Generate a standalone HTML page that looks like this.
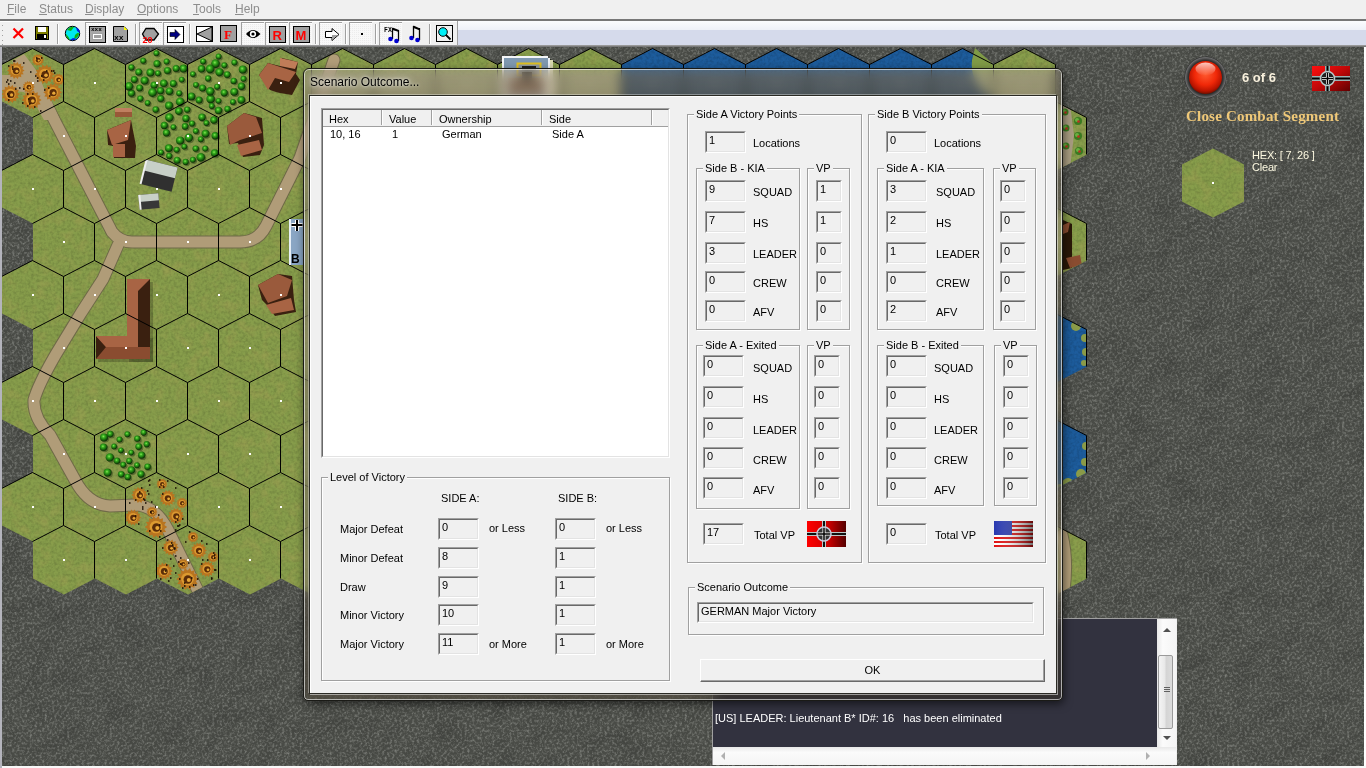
<!DOCTYPE html>
<html><head><meta charset="utf-8">
<style>
*{box-sizing:border-box}
html,body{margin:0;padding:0}
body{width:1366px;height:768px;overflow:hidden;position:relative;background:#4d4e4a;font-family:"Liberation Sans",sans-serif;font-size:11px;color:#000}
.abs{position:absolute}
#menubar{position:absolute;left:0;top:0;width:1366px;height:19px;background:#f0f0f0;color:#8d8d8d;font-size:12px}
#menubar span{position:absolute;top:2px}
#menubar u{text-decoration:underline;text-underline-offset:1px}
#tbline{position:absolute;left:0;top:19px;width:1366px;height:2px;background:#777}
#toolbar{position:absolute;left:0;top:21px;width:1366px;height:26px;background:#f0f0f0;border-top:1px solid #fff}
#rebar{position:absolute;left:458px;top:21px;width:908px;height:25px;background:linear-gradient(#fbfcfe 0,#eef1f8 9px,#d5daeb 9px,#d5daeb 100%)}
#tbbottom{position:absolute;left:0;top:45px;width:1366px;height:2px;background:linear-gradient(#a8a8a8,#6a6a6a)}
.sep{position:absolute;top:26px;width:2px;height:17px;border-left:1px solid #a0a0a0;border-right:1px solid #fff}
.pbtn{position:absolute;top:23px;height:22px;border:1px solid #fff;border-right-color:#e3e3e3;border-bottom-color:#e3e3e3;background:#f7f7f7}
.ic{position:absolute}
/* dialog */
#dlg{position:absolute;left:303px;top:68px;width:760px;height:633px;border-radius:6px 6px 5px 5px;border:1px solid #1a1a16;box-shadow:inset 0 0 0 1px rgba(255,255,255,.6),1px 3px 8px rgba(0,0,0,.55);background:linear-gradient(rgba(255,250,235,.12),rgba(200,195,175,.05) 30px,rgba(60,55,40,.15));backdrop-filter:blur(6px) saturate(0.5) sepia(0.45) brightness(0.9);-webkit-backdrop-filter:blur(6px) saturate(0.5) sepia(0.45) brightness(0.9);overflow:hidden}
#dlg .title{position:absolute;left:6px;top:6px;font-size:12px;color:#000;text-shadow:0 0 7px rgba(255,255,255,.9),0 0 3px rgba(255,255,255,.8)}
#client{position:absolute;left:309px;top:95px;width:748px;height:599px;background:#f0f0f0;border:1px solid #2a2a24;box-shadow:inset 1px 1px 0 #fff,1px 1px 0 rgba(255,255,255,.5),-1px -1px 0 rgba(255,255,255,.35)}
.grp{position:absolute;border:1px solid #a0a0a0;box-shadow:1px 1px 0 #fff, inset 1px 1px 0 #fff}
.grp>.lbl{position:absolute;left:6px;top:-8px;background:#f0f0f0;padding:0 2px;font-size:11px;line-height:14px;white-space:nowrap}
.ed{position:absolute;border:1px solid;border-color:#a0a0a0 #fff #fff #a0a0a0;background:#f0f0f0}
.ed::before{content:"";position:absolute;left:0;top:0;right:0;bottom:0;border:1px solid;border-color:#696969 #e3e3e3 #e3e3e3 #696969}
.ed span{position:absolute;left:3px;top:2px;font-size:11px;line-height:13px}
.t{position:absolute;font-size:11px;line-height:13px;white-space:nowrap}
#log{position:absolute;left:712px;top:618px;width:464px;height:148px;background:#f0f0f0;border-top:1px solid #c8c8c8}
</style></head><body>
<svg id="map" width="1366" height="721" viewBox="0 47 1366 721" style="position:absolute;left:0;top:47px;display:block">
<defs>
<filter id="tex" x="0" y="0" width="100%" height="100%" filterUnits="userSpaceOnUse"><feTurbulence type="fractalNoise" baseFrequency="0.35" numOctaves="2" seed="5"/><feColorMatrix type="matrix" values="0 0 0 0 0  0 0 0 0 0  0 0 0 0 0  1.2 0 0 0 -0.45"/><feComposite in2="SourceGraphic" operator="in"/></filter>
<filter id="tex2" x="0" y="47" width="1366" height="721" filterUnits="userSpaceOnUse"><feTurbulence type="fractalNoise" baseFrequency="0.4" numOctaves="3" seed="9"/><feColorMatrix type="matrix" values="0 0 0 0 0.85  0 0 0 0 0.87  0 0 0 0 0.82  2.2 0 0 0 -0.95"/><feComposite in2="SourceGraphic" operator="in"/></filter>
<filter id="tex4" x="-400" y="-300" width="2200" height="1400" filterUnits="userSpaceOnUse"><feTurbulence type="fractalNoise" baseFrequency="0.035 0.07" numOctaves="4" seed="4"/><feColorMatrix type="matrix" values="0 0 0 0 0  0 0 0 0 0  0 0 0 0 0  2.0 0 0 0 -0.85"/><feComposite in2="SourceGraphic" operator="in"/></filter>
<radialGradient id="crater"><stop offset="0" stop-color="#a06020"/><stop offset="0.25" stop-color="#3a1806"/><stop offset="0.45" stop-color="#b06a18"/><stop offset="0.7" stop-color="#e0a030"/><stop offset="0.88" stop-color="#c08028" stop-opacity="0.7"/><stop offset="1" stop-color="#a07028" stop-opacity="0"/></radialGradient>
<radialGradient id="tree" cx="0.42" cy="0.38" r="0.6"><stop offset="0" stop-color="#8ae858"/><stop offset="0.3" stop-color="#38b020"/><stop offset="0.7" stop-color="#1a6a0c"/><stop offset="1" stop-color="#0c2e06"/></radialGradient>
<clipPath id="mclip"><path d="M33.0,48.5 L64.0,64.5 L64.0,101.5 L33.0,117.5 L2.0,101.5 L2.0,64.5Z M95.0,48.5 L126.0,64.5 L126.0,101.5 L95.0,117.5 L64.0,101.5 L64.0,64.5Z M157.0,48.5 L188.0,64.5 L188.0,101.5 L157.0,117.5 L126.0,101.5 L126.0,64.5Z M219.0,48.5 L250.0,64.5 L250.0,101.5 L219.0,117.5 L188.0,101.5 L188.0,64.5Z M281.0,48.5 L312.0,64.5 L312.0,101.5 L281.0,117.5 L250.0,101.5 L250.0,64.5Z M343.0,48.5 L374.0,64.5 L374.0,101.5 L343.0,117.5 L312.0,101.5 L312.0,64.5Z M405.0,48.5 L436.0,64.5 L436.0,101.5 L405.0,117.5 L374.0,101.5 L374.0,64.5Z M467.0,48.5 L498.0,64.5 L498.0,101.5 L467.0,117.5 L436.0,101.5 L436.0,64.5Z M529.0,48.5 L560.0,64.5 L560.0,101.5 L529.0,117.5 L498.0,101.5 L498.0,64.5Z M591.0,48.5 L622.0,64.5 L622.0,101.5 L591.0,117.5 L560.0,101.5 L560.0,64.5Z M653.0,48.5 L684.0,64.5 L684.0,101.5 L653.0,117.5 L622.0,101.5 L622.0,64.5Z M715.0,48.5 L746.0,64.5 L746.0,101.5 L715.0,117.5 L684.0,101.5 L684.0,64.5Z M777.0,48.5 L808.0,64.5 L808.0,101.5 L777.0,117.5 L746.0,101.5 L746.0,64.5Z M839.0,48.5 L870.0,64.5 L870.0,101.5 L839.0,117.5 L808.0,101.5 L808.0,64.5Z M901.0,48.5 L932.0,64.5 L932.0,101.5 L901.0,117.5 L870.0,101.5 L870.0,64.5Z M963.0,48.5 L994.0,64.5 L994.0,101.5 L963.0,117.5 L932.0,101.5 L932.0,64.5Z M1025.0,48.5 L1056.0,64.5 L1056.0,101.5 L1025.0,117.5 L994.0,101.5 L994.0,64.5Z M64.0,101.5 L95.0,117.5 L95.0,154.5 L64.0,170.5 L33.0,154.5 L33.0,117.5Z M126.0,101.5 L157.0,117.5 L157.0,154.5 L126.0,170.5 L95.0,154.5 L95.0,117.5Z M188.0,101.5 L219.0,117.5 L219.0,154.5 L188.0,170.5 L157.0,154.5 L157.0,117.5Z M250.0,101.5 L281.0,117.5 L281.0,154.5 L250.0,170.5 L219.0,154.5 L219.0,117.5Z M312.0,101.5 L343.0,117.5 L343.0,154.5 L312.0,170.5 L281.0,154.5 L281.0,117.5Z M374.0,101.5 L405.0,117.5 L405.0,154.5 L374.0,170.5 L343.0,154.5 L343.0,117.5Z M436.0,101.5 L467.0,117.5 L467.0,154.5 L436.0,170.5 L405.0,154.5 L405.0,117.5Z M498.0,101.5 L529.0,117.5 L529.0,154.5 L498.0,170.5 L467.0,154.5 L467.0,117.5Z M560.0,101.5 L591.0,117.5 L591.0,154.5 L560.0,170.5 L529.0,154.5 L529.0,117.5Z M622.0,101.5 L653.0,117.5 L653.0,154.5 L622.0,170.5 L591.0,154.5 L591.0,117.5Z M684.0,101.5 L715.0,117.5 L715.0,154.5 L684.0,170.5 L653.0,154.5 L653.0,117.5Z M746.0,101.5 L777.0,117.5 L777.0,154.5 L746.0,170.5 L715.0,154.5 L715.0,117.5Z M808.0,101.5 L839.0,117.5 L839.0,154.5 L808.0,170.5 L777.0,154.5 L777.0,117.5Z M870.0,101.5 L901.0,117.5 L901.0,154.5 L870.0,170.5 L839.0,154.5 L839.0,117.5Z M932.0,101.5 L963.0,117.5 L963.0,154.5 L932.0,170.5 L901.0,154.5 L901.0,117.5Z M994.0,101.5 L1025.0,117.5 L1025.0,154.5 L994.0,170.5 L963.0,154.5 L963.0,117.5Z M1056.0,101.5 L1087.0,117.5 L1087.0,154.5 L1056.0,170.5 L1025.0,154.5 L1025.0,117.5Z M33.0,154.5 L64.0,170.5 L64.0,207.5 L33.0,223.5 L2.0,207.5 L2.0,170.5Z M95.0,154.5 L126.0,170.5 L126.0,207.5 L95.0,223.5 L64.0,207.5 L64.0,170.5Z M157.0,154.5 L188.0,170.5 L188.0,207.5 L157.0,223.5 L126.0,207.5 L126.0,170.5Z M219.0,154.5 L250.0,170.5 L250.0,207.5 L219.0,223.5 L188.0,207.5 L188.0,170.5Z M281.0,154.5 L312.0,170.5 L312.0,207.5 L281.0,223.5 L250.0,207.5 L250.0,170.5Z M343.0,154.5 L374.0,170.5 L374.0,207.5 L343.0,223.5 L312.0,207.5 L312.0,170.5Z M405.0,154.5 L436.0,170.5 L436.0,207.5 L405.0,223.5 L374.0,207.5 L374.0,170.5Z M467.0,154.5 L498.0,170.5 L498.0,207.5 L467.0,223.5 L436.0,207.5 L436.0,170.5Z M529.0,154.5 L560.0,170.5 L560.0,207.5 L529.0,223.5 L498.0,207.5 L498.0,170.5Z M591.0,154.5 L622.0,170.5 L622.0,207.5 L591.0,223.5 L560.0,207.5 L560.0,170.5Z M653.0,154.5 L684.0,170.5 L684.0,207.5 L653.0,223.5 L622.0,207.5 L622.0,170.5Z M715.0,154.5 L746.0,170.5 L746.0,207.5 L715.0,223.5 L684.0,207.5 L684.0,170.5Z M777.0,154.5 L808.0,170.5 L808.0,207.5 L777.0,223.5 L746.0,207.5 L746.0,170.5Z M839.0,154.5 L870.0,170.5 L870.0,207.5 L839.0,223.5 L808.0,207.5 L808.0,170.5Z M901.0,154.5 L932.0,170.5 L932.0,207.5 L901.0,223.5 L870.0,207.5 L870.0,170.5Z M963.0,154.5 L994.0,170.5 L994.0,207.5 L963.0,223.5 L932.0,207.5 L932.0,170.5Z M1025.0,154.5 L1056.0,170.5 L1056.0,207.5 L1025.0,223.5 L994.0,207.5 L994.0,170.5Z M64.0,207.5 L95.0,223.5 L95.0,260.5 L64.0,276.5 L33.0,260.5 L33.0,223.5Z M126.0,207.5 L157.0,223.5 L157.0,260.5 L126.0,276.5 L95.0,260.5 L95.0,223.5Z M188.0,207.5 L219.0,223.5 L219.0,260.5 L188.0,276.5 L157.0,260.5 L157.0,223.5Z M250.0,207.5 L281.0,223.5 L281.0,260.5 L250.0,276.5 L219.0,260.5 L219.0,223.5Z M312.0,207.5 L343.0,223.5 L343.0,260.5 L312.0,276.5 L281.0,260.5 L281.0,223.5Z M374.0,207.5 L405.0,223.5 L405.0,260.5 L374.0,276.5 L343.0,260.5 L343.0,223.5Z M436.0,207.5 L467.0,223.5 L467.0,260.5 L436.0,276.5 L405.0,260.5 L405.0,223.5Z M498.0,207.5 L529.0,223.5 L529.0,260.5 L498.0,276.5 L467.0,260.5 L467.0,223.5Z M560.0,207.5 L591.0,223.5 L591.0,260.5 L560.0,276.5 L529.0,260.5 L529.0,223.5Z M622.0,207.5 L653.0,223.5 L653.0,260.5 L622.0,276.5 L591.0,260.5 L591.0,223.5Z M684.0,207.5 L715.0,223.5 L715.0,260.5 L684.0,276.5 L653.0,260.5 L653.0,223.5Z M746.0,207.5 L777.0,223.5 L777.0,260.5 L746.0,276.5 L715.0,260.5 L715.0,223.5Z M808.0,207.5 L839.0,223.5 L839.0,260.5 L808.0,276.5 L777.0,260.5 L777.0,223.5Z M870.0,207.5 L901.0,223.5 L901.0,260.5 L870.0,276.5 L839.0,260.5 L839.0,223.5Z M932.0,207.5 L963.0,223.5 L963.0,260.5 L932.0,276.5 L901.0,260.5 L901.0,223.5Z M994.0,207.5 L1025.0,223.5 L1025.0,260.5 L994.0,276.5 L963.0,260.5 L963.0,223.5Z M1056.0,207.5 L1087.0,223.5 L1087.0,260.5 L1056.0,276.5 L1025.0,260.5 L1025.0,223.5Z M33.0,260.5 L64.0,276.5 L64.0,313.5 L33.0,329.5 L2.0,313.5 L2.0,276.5Z M95.0,260.5 L126.0,276.5 L126.0,313.5 L95.0,329.5 L64.0,313.5 L64.0,276.5Z M157.0,260.5 L188.0,276.5 L188.0,313.5 L157.0,329.5 L126.0,313.5 L126.0,276.5Z M219.0,260.5 L250.0,276.5 L250.0,313.5 L219.0,329.5 L188.0,313.5 L188.0,276.5Z M281.0,260.5 L312.0,276.5 L312.0,313.5 L281.0,329.5 L250.0,313.5 L250.0,276.5Z M343.0,260.5 L374.0,276.5 L374.0,313.5 L343.0,329.5 L312.0,313.5 L312.0,276.5Z M405.0,260.5 L436.0,276.5 L436.0,313.5 L405.0,329.5 L374.0,313.5 L374.0,276.5Z M467.0,260.5 L498.0,276.5 L498.0,313.5 L467.0,329.5 L436.0,313.5 L436.0,276.5Z M529.0,260.5 L560.0,276.5 L560.0,313.5 L529.0,329.5 L498.0,313.5 L498.0,276.5Z M591.0,260.5 L622.0,276.5 L622.0,313.5 L591.0,329.5 L560.0,313.5 L560.0,276.5Z M653.0,260.5 L684.0,276.5 L684.0,313.5 L653.0,329.5 L622.0,313.5 L622.0,276.5Z M715.0,260.5 L746.0,276.5 L746.0,313.5 L715.0,329.5 L684.0,313.5 L684.0,276.5Z M777.0,260.5 L808.0,276.5 L808.0,313.5 L777.0,329.5 L746.0,313.5 L746.0,276.5Z M839.0,260.5 L870.0,276.5 L870.0,313.5 L839.0,329.5 L808.0,313.5 L808.0,276.5Z M901.0,260.5 L932.0,276.5 L932.0,313.5 L901.0,329.5 L870.0,313.5 L870.0,276.5Z M963.0,260.5 L994.0,276.5 L994.0,313.5 L963.0,329.5 L932.0,313.5 L932.0,276.5Z M1025.0,260.5 L1056.0,276.5 L1056.0,313.5 L1025.0,329.5 L994.0,313.5 L994.0,276.5Z M64.0,313.5 L95.0,329.5 L95.0,366.5 L64.0,382.5 L33.0,366.5 L33.0,329.5Z M126.0,313.5 L157.0,329.5 L157.0,366.5 L126.0,382.5 L95.0,366.5 L95.0,329.5Z M188.0,313.5 L219.0,329.5 L219.0,366.5 L188.0,382.5 L157.0,366.5 L157.0,329.5Z M250.0,313.5 L281.0,329.5 L281.0,366.5 L250.0,382.5 L219.0,366.5 L219.0,329.5Z M312.0,313.5 L343.0,329.5 L343.0,366.5 L312.0,382.5 L281.0,366.5 L281.0,329.5Z M374.0,313.5 L405.0,329.5 L405.0,366.5 L374.0,382.5 L343.0,366.5 L343.0,329.5Z M436.0,313.5 L467.0,329.5 L467.0,366.5 L436.0,382.5 L405.0,366.5 L405.0,329.5Z M498.0,313.5 L529.0,329.5 L529.0,366.5 L498.0,382.5 L467.0,366.5 L467.0,329.5Z M560.0,313.5 L591.0,329.5 L591.0,366.5 L560.0,382.5 L529.0,366.5 L529.0,329.5Z M622.0,313.5 L653.0,329.5 L653.0,366.5 L622.0,382.5 L591.0,366.5 L591.0,329.5Z M684.0,313.5 L715.0,329.5 L715.0,366.5 L684.0,382.5 L653.0,366.5 L653.0,329.5Z M746.0,313.5 L777.0,329.5 L777.0,366.5 L746.0,382.5 L715.0,366.5 L715.0,329.5Z M808.0,313.5 L839.0,329.5 L839.0,366.5 L808.0,382.5 L777.0,366.5 L777.0,329.5Z M870.0,313.5 L901.0,329.5 L901.0,366.5 L870.0,382.5 L839.0,366.5 L839.0,329.5Z M932.0,313.5 L963.0,329.5 L963.0,366.5 L932.0,382.5 L901.0,366.5 L901.0,329.5Z M994.0,313.5 L1025.0,329.5 L1025.0,366.5 L994.0,382.5 L963.0,366.5 L963.0,329.5Z M1056.0,313.5 L1087.0,329.5 L1087.0,366.5 L1056.0,382.5 L1025.0,366.5 L1025.0,329.5Z M33.0,366.5 L64.0,382.5 L64.0,419.5 L33.0,435.5 L2.0,419.5 L2.0,382.5Z M95.0,366.5 L126.0,382.5 L126.0,419.5 L95.0,435.5 L64.0,419.5 L64.0,382.5Z M157.0,366.5 L188.0,382.5 L188.0,419.5 L157.0,435.5 L126.0,419.5 L126.0,382.5Z M219.0,366.5 L250.0,382.5 L250.0,419.5 L219.0,435.5 L188.0,419.5 L188.0,382.5Z M281.0,366.5 L312.0,382.5 L312.0,419.5 L281.0,435.5 L250.0,419.5 L250.0,382.5Z M343.0,366.5 L374.0,382.5 L374.0,419.5 L343.0,435.5 L312.0,419.5 L312.0,382.5Z M405.0,366.5 L436.0,382.5 L436.0,419.5 L405.0,435.5 L374.0,419.5 L374.0,382.5Z M467.0,366.5 L498.0,382.5 L498.0,419.5 L467.0,435.5 L436.0,419.5 L436.0,382.5Z M529.0,366.5 L560.0,382.5 L560.0,419.5 L529.0,435.5 L498.0,419.5 L498.0,382.5Z M591.0,366.5 L622.0,382.5 L622.0,419.5 L591.0,435.5 L560.0,419.5 L560.0,382.5Z M653.0,366.5 L684.0,382.5 L684.0,419.5 L653.0,435.5 L622.0,419.5 L622.0,382.5Z M715.0,366.5 L746.0,382.5 L746.0,419.5 L715.0,435.5 L684.0,419.5 L684.0,382.5Z M777.0,366.5 L808.0,382.5 L808.0,419.5 L777.0,435.5 L746.0,419.5 L746.0,382.5Z M839.0,366.5 L870.0,382.5 L870.0,419.5 L839.0,435.5 L808.0,419.5 L808.0,382.5Z M901.0,366.5 L932.0,382.5 L932.0,419.5 L901.0,435.5 L870.0,419.5 L870.0,382.5Z M963.0,366.5 L994.0,382.5 L994.0,419.5 L963.0,435.5 L932.0,419.5 L932.0,382.5Z M1025.0,366.5 L1056.0,382.5 L1056.0,419.5 L1025.0,435.5 L994.0,419.5 L994.0,382.5Z M64.0,419.5 L95.0,435.5 L95.0,472.5 L64.0,488.5 L33.0,472.5 L33.0,435.5Z M126.0,419.5 L157.0,435.5 L157.0,472.5 L126.0,488.5 L95.0,472.5 L95.0,435.5Z M188.0,419.5 L219.0,435.5 L219.0,472.5 L188.0,488.5 L157.0,472.5 L157.0,435.5Z M250.0,419.5 L281.0,435.5 L281.0,472.5 L250.0,488.5 L219.0,472.5 L219.0,435.5Z M312.0,419.5 L343.0,435.5 L343.0,472.5 L312.0,488.5 L281.0,472.5 L281.0,435.5Z M374.0,419.5 L405.0,435.5 L405.0,472.5 L374.0,488.5 L343.0,472.5 L343.0,435.5Z M436.0,419.5 L467.0,435.5 L467.0,472.5 L436.0,488.5 L405.0,472.5 L405.0,435.5Z M498.0,419.5 L529.0,435.5 L529.0,472.5 L498.0,488.5 L467.0,472.5 L467.0,435.5Z M560.0,419.5 L591.0,435.5 L591.0,472.5 L560.0,488.5 L529.0,472.5 L529.0,435.5Z M622.0,419.5 L653.0,435.5 L653.0,472.5 L622.0,488.5 L591.0,472.5 L591.0,435.5Z M684.0,419.5 L715.0,435.5 L715.0,472.5 L684.0,488.5 L653.0,472.5 L653.0,435.5Z M746.0,419.5 L777.0,435.5 L777.0,472.5 L746.0,488.5 L715.0,472.5 L715.0,435.5Z M808.0,419.5 L839.0,435.5 L839.0,472.5 L808.0,488.5 L777.0,472.5 L777.0,435.5Z M870.0,419.5 L901.0,435.5 L901.0,472.5 L870.0,488.5 L839.0,472.5 L839.0,435.5Z M932.0,419.5 L963.0,435.5 L963.0,472.5 L932.0,488.5 L901.0,472.5 L901.0,435.5Z M994.0,419.5 L1025.0,435.5 L1025.0,472.5 L994.0,488.5 L963.0,472.5 L963.0,435.5Z M1056.0,419.5 L1087.0,435.5 L1087.0,472.5 L1056.0,488.5 L1025.0,472.5 L1025.0,435.5Z M33.0,472.5 L64.0,488.5 L64.0,525.5 L33.0,541.5 L2.0,525.5 L2.0,488.5Z M95.0,472.5 L126.0,488.5 L126.0,525.5 L95.0,541.5 L64.0,525.5 L64.0,488.5Z M157.0,472.5 L188.0,488.5 L188.0,525.5 L157.0,541.5 L126.0,525.5 L126.0,488.5Z M219.0,472.5 L250.0,488.5 L250.0,525.5 L219.0,541.5 L188.0,525.5 L188.0,488.5Z M281.0,472.5 L312.0,488.5 L312.0,525.5 L281.0,541.5 L250.0,525.5 L250.0,488.5Z M343.0,472.5 L374.0,488.5 L374.0,525.5 L343.0,541.5 L312.0,525.5 L312.0,488.5Z M405.0,472.5 L436.0,488.5 L436.0,525.5 L405.0,541.5 L374.0,525.5 L374.0,488.5Z M467.0,472.5 L498.0,488.5 L498.0,525.5 L467.0,541.5 L436.0,525.5 L436.0,488.5Z M529.0,472.5 L560.0,488.5 L560.0,525.5 L529.0,541.5 L498.0,525.5 L498.0,488.5Z M591.0,472.5 L622.0,488.5 L622.0,525.5 L591.0,541.5 L560.0,525.5 L560.0,488.5Z M653.0,472.5 L684.0,488.5 L684.0,525.5 L653.0,541.5 L622.0,525.5 L622.0,488.5Z M715.0,472.5 L746.0,488.5 L746.0,525.5 L715.0,541.5 L684.0,525.5 L684.0,488.5Z M777.0,472.5 L808.0,488.5 L808.0,525.5 L777.0,541.5 L746.0,525.5 L746.0,488.5Z M839.0,472.5 L870.0,488.5 L870.0,525.5 L839.0,541.5 L808.0,525.5 L808.0,488.5Z M901.0,472.5 L932.0,488.5 L932.0,525.5 L901.0,541.5 L870.0,525.5 L870.0,488.5Z M963.0,472.5 L994.0,488.5 L994.0,525.5 L963.0,541.5 L932.0,525.5 L932.0,488.5Z M1025.0,472.5 L1056.0,488.5 L1056.0,525.5 L1025.0,541.5 L994.0,525.5 L994.0,488.5Z M64.0,525.5 L95.0,541.5 L95.0,578.5 L64.0,594.5 L33.0,578.5 L33.0,541.5Z M126.0,525.5 L157.0,541.5 L157.0,578.5 L126.0,594.5 L95.0,578.5 L95.0,541.5Z M188.0,525.5 L219.0,541.5 L219.0,578.5 L188.0,594.5 L157.0,578.5 L157.0,541.5Z M250.0,525.5 L281.0,541.5 L281.0,578.5 L250.0,594.5 L219.0,578.5 L219.0,541.5Z M312.0,525.5 L343.0,541.5 L343.0,578.5 L312.0,594.5 L281.0,578.5 L281.0,541.5Z M374.0,525.5 L405.0,541.5 L405.0,578.5 L374.0,594.5 L343.0,578.5 L343.0,541.5Z M436.0,525.5 L467.0,541.5 L467.0,578.5 L436.0,594.5 L405.0,578.5 L405.0,541.5Z M498.0,525.5 L529.0,541.5 L529.0,578.5 L498.0,594.5 L467.0,578.5 L467.0,541.5Z M560.0,525.5 L591.0,541.5 L591.0,578.5 L560.0,594.5 L529.0,578.5 L529.0,541.5Z M622.0,525.5 L653.0,541.5 L653.0,578.5 L622.0,594.5 L591.0,578.5 L591.0,541.5Z M684.0,525.5 L715.0,541.5 L715.0,578.5 L684.0,594.5 L653.0,578.5 L653.0,541.5Z M746.0,525.5 L777.0,541.5 L777.0,578.5 L746.0,594.5 L715.0,578.5 L715.0,541.5Z M808.0,525.5 L839.0,541.5 L839.0,578.5 L808.0,594.5 L777.0,578.5 L777.0,541.5Z M870.0,525.5 L901.0,541.5 L901.0,578.5 L870.0,594.5 L839.0,578.5 L839.0,541.5Z M932.0,525.5 L963.0,541.5 L963.0,578.5 L932.0,594.5 L901.0,578.5 L901.0,541.5Z M994.0,525.5 L1025.0,541.5 L1025.0,578.5 L994.0,594.5 L963.0,578.5 L963.0,541.5Z M1056.0,525.5 L1087.0,541.5 L1087.0,578.5 L1056.0,594.5 L1025.0,578.5 L1025.0,541.5Z"/></clipPath>
<filter id="tex3" x="0" y="0" width="1366" height="768" filterUnits="userSpaceOnUse"><feTurbulence type="fractalNoise" baseFrequency="0.08" numOctaves="3" seed="21"/><feColorMatrix type="matrix" values="0 0 0 0 0.45  0 0 0 0 0.35  0 0 0 0 0.1  2.2 0 0 0 -1.0"/><feComposite in2="SourceGraphic" operator="in"/></filter>
</defs>
<rect x="0" y="47" width="1366" height="721" fill="#4a4c47"/>
<rect x="0" y="47" width="1366" height="721" fill="#fff" filter="url(#tex2)" opacity="0.32"/>
<g transform="rotate(-35 683 400)"><rect x="-400" y="-300" width="2200" height="1400" fill="#000" filter="url(#tex4)" opacity="0.12"/></g>
<path d="M33.0,48.5 L64.0,64.5 L64.0,101.5 L33.0,117.5 L2.0,101.5 L2.0,64.5Z M95.0,48.5 L126.0,64.5 L126.0,101.5 L95.0,117.5 L64.0,101.5 L64.0,64.5Z M157.0,48.5 L188.0,64.5 L188.0,101.5 L157.0,117.5 L126.0,101.5 L126.0,64.5Z M219.0,48.5 L250.0,64.5 L250.0,101.5 L219.0,117.5 L188.0,101.5 L188.0,64.5Z M281.0,48.5 L312.0,64.5 L312.0,101.5 L281.0,117.5 L250.0,101.5 L250.0,64.5Z M343.0,48.5 L374.0,64.5 L374.0,101.5 L343.0,117.5 L312.0,101.5 L312.0,64.5Z M405.0,48.5 L436.0,64.5 L436.0,101.5 L405.0,117.5 L374.0,101.5 L374.0,64.5Z M467.0,48.5 L498.0,64.5 L498.0,101.5 L467.0,117.5 L436.0,101.5 L436.0,64.5Z M529.0,48.5 L560.0,64.5 L560.0,101.5 L529.0,117.5 L498.0,101.5 L498.0,64.5Z M591.0,48.5 L622.0,64.5 L622.0,101.5 L591.0,117.5 L560.0,101.5 L560.0,64.5Z M1025.0,48.5 L1056.0,64.5 L1056.0,101.5 L1025.0,117.5 L994.0,101.5 L994.0,64.5Z M64.0,101.5 L95.0,117.5 L95.0,154.5 L64.0,170.5 L33.0,154.5 L33.0,117.5Z M126.0,101.5 L157.0,117.5 L157.0,154.5 L126.0,170.5 L95.0,154.5 L95.0,117.5Z M188.0,101.5 L219.0,117.5 L219.0,154.5 L188.0,170.5 L157.0,154.5 L157.0,117.5Z M250.0,101.5 L281.0,117.5 L281.0,154.5 L250.0,170.5 L219.0,154.5 L219.0,117.5Z M312.0,101.5 L343.0,117.5 L343.0,154.5 L312.0,170.5 L281.0,154.5 L281.0,117.5Z M374.0,101.5 L405.0,117.5 L405.0,154.5 L374.0,170.5 L343.0,154.5 L343.0,117.5Z M436.0,101.5 L467.0,117.5 L467.0,154.5 L436.0,170.5 L405.0,154.5 L405.0,117.5Z M498.0,101.5 L529.0,117.5 L529.0,154.5 L498.0,170.5 L467.0,154.5 L467.0,117.5Z M560.0,101.5 L591.0,117.5 L591.0,154.5 L560.0,170.5 L529.0,154.5 L529.0,117.5Z M622.0,101.5 L653.0,117.5 L653.0,154.5 L622.0,170.5 L591.0,154.5 L591.0,117.5Z M684.0,101.5 L715.0,117.5 L715.0,154.5 L684.0,170.5 L653.0,154.5 L653.0,117.5Z M746.0,101.5 L777.0,117.5 L777.0,154.5 L746.0,170.5 L715.0,154.5 L715.0,117.5Z M808.0,101.5 L839.0,117.5 L839.0,154.5 L808.0,170.5 L777.0,154.5 L777.0,117.5Z M870.0,101.5 L901.0,117.5 L901.0,154.5 L870.0,170.5 L839.0,154.5 L839.0,117.5Z M932.0,101.5 L963.0,117.5 L963.0,154.5 L932.0,170.5 L901.0,154.5 L901.0,117.5Z M994.0,101.5 L1025.0,117.5 L1025.0,154.5 L994.0,170.5 L963.0,154.5 L963.0,117.5Z M1056.0,101.5 L1087.0,117.5 L1087.0,154.5 L1056.0,170.5 L1025.0,154.5 L1025.0,117.5Z M33.0,154.5 L64.0,170.5 L64.0,207.5 L33.0,223.5 L2.0,207.5 L2.0,170.5Z M95.0,154.5 L126.0,170.5 L126.0,207.5 L95.0,223.5 L64.0,207.5 L64.0,170.5Z M157.0,154.5 L188.0,170.5 L188.0,207.5 L157.0,223.5 L126.0,207.5 L126.0,170.5Z M219.0,154.5 L250.0,170.5 L250.0,207.5 L219.0,223.5 L188.0,207.5 L188.0,170.5Z M281.0,154.5 L312.0,170.5 L312.0,207.5 L281.0,223.5 L250.0,207.5 L250.0,170.5Z M343.0,154.5 L374.0,170.5 L374.0,207.5 L343.0,223.5 L312.0,207.5 L312.0,170.5Z M405.0,154.5 L436.0,170.5 L436.0,207.5 L405.0,223.5 L374.0,207.5 L374.0,170.5Z M467.0,154.5 L498.0,170.5 L498.0,207.5 L467.0,223.5 L436.0,207.5 L436.0,170.5Z M529.0,154.5 L560.0,170.5 L560.0,207.5 L529.0,223.5 L498.0,207.5 L498.0,170.5Z M591.0,154.5 L622.0,170.5 L622.0,207.5 L591.0,223.5 L560.0,207.5 L560.0,170.5Z M653.0,154.5 L684.0,170.5 L684.0,207.5 L653.0,223.5 L622.0,207.5 L622.0,170.5Z M715.0,154.5 L746.0,170.5 L746.0,207.5 L715.0,223.5 L684.0,207.5 L684.0,170.5Z M777.0,154.5 L808.0,170.5 L808.0,207.5 L777.0,223.5 L746.0,207.5 L746.0,170.5Z M839.0,154.5 L870.0,170.5 L870.0,207.5 L839.0,223.5 L808.0,207.5 L808.0,170.5Z M901.0,154.5 L932.0,170.5 L932.0,207.5 L901.0,223.5 L870.0,207.5 L870.0,170.5Z M963.0,154.5 L994.0,170.5 L994.0,207.5 L963.0,223.5 L932.0,207.5 L932.0,170.5Z M1025.0,154.5 L1056.0,170.5 L1056.0,207.5 L1025.0,223.5 L994.0,207.5 L994.0,170.5Z M64.0,207.5 L95.0,223.5 L95.0,260.5 L64.0,276.5 L33.0,260.5 L33.0,223.5Z M126.0,207.5 L157.0,223.5 L157.0,260.5 L126.0,276.5 L95.0,260.5 L95.0,223.5Z M188.0,207.5 L219.0,223.5 L219.0,260.5 L188.0,276.5 L157.0,260.5 L157.0,223.5Z M250.0,207.5 L281.0,223.5 L281.0,260.5 L250.0,276.5 L219.0,260.5 L219.0,223.5Z M312.0,207.5 L343.0,223.5 L343.0,260.5 L312.0,276.5 L281.0,260.5 L281.0,223.5Z M374.0,207.5 L405.0,223.5 L405.0,260.5 L374.0,276.5 L343.0,260.5 L343.0,223.5Z M436.0,207.5 L467.0,223.5 L467.0,260.5 L436.0,276.5 L405.0,260.5 L405.0,223.5Z M498.0,207.5 L529.0,223.5 L529.0,260.5 L498.0,276.5 L467.0,260.5 L467.0,223.5Z M560.0,207.5 L591.0,223.5 L591.0,260.5 L560.0,276.5 L529.0,260.5 L529.0,223.5Z M622.0,207.5 L653.0,223.5 L653.0,260.5 L622.0,276.5 L591.0,260.5 L591.0,223.5Z M684.0,207.5 L715.0,223.5 L715.0,260.5 L684.0,276.5 L653.0,260.5 L653.0,223.5Z M746.0,207.5 L777.0,223.5 L777.0,260.5 L746.0,276.5 L715.0,260.5 L715.0,223.5Z M808.0,207.5 L839.0,223.5 L839.0,260.5 L808.0,276.5 L777.0,260.5 L777.0,223.5Z M870.0,207.5 L901.0,223.5 L901.0,260.5 L870.0,276.5 L839.0,260.5 L839.0,223.5Z M932.0,207.5 L963.0,223.5 L963.0,260.5 L932.0,276.5 L901.0,260.5 L901.0,223.5Z M994.0,207.5 L1025.0,223.5 L1025.0,260.5 L994.0,276.5 L963.0,260.5 L963.0,223.5Z M1056.0,207.5 L1087.0,223.5 L1087.0,260.5 L1056.0,276.5 L1025.0,260.5 L1025.0,223.5Z M33.0,260.5 L64.0,276.5 L64.0,313.5 L33.0,329.5 L2.0,313.5 L2.0,276.5Z M95.0,260.5 L126.0,276.5 L126.0,313.5 L95.0,329.5 L64.0,313.5 L64.0,276.5Z M157.0,260.5 L188.0,276.5 L188.0,313.5 L157.0,329.5 L126.0,313.5 L126.0,276.5Z M219.0,260.5 L250.0,276.5 L250.0,313.5 L219.0,329.5 L188.0,313.5 L188.0,276.5Z M281.0,260.5 L312.0,276.5 L312.0,313.5 L281.0,329.5 L250.0,313.5 L250.0,276.5Z M343.0,260.5 L374.0,276.5 L374.0,313.5 L343.0,329.5 L312.0,313.5 L312.0,276.5Z M405.0,260.5 L436.0,276.5 L436.0,313.5 L405.0,329.5 L374.0,313.5 L374.0,276.5Z M467.0,260.5 L498.0,276.5 L498.0,313.5 L467.0,329.5 L436.0,313.5 L436.0,276.5Z M529.0,260.5 L560.0,276.5 L560.0,313.5 L529.0,329.5 L498.0,313.5 L498.0,276.5Z M591.0,260.5 L622.0,276.5 L622.0,313.5 L591.0,329.5 L560.0,313.5 L560.0,276.5Z M653.0,260.5 L684.0,276.5 L684.0,313.5 L653.0,329.5 L622.0,313.5 L622.0,276.5Z M715.0,260.5 L746.0,276.5 L746.0,313.5 L715.0,329.5 L684.0,313.5 L684.0,276.5Z M777.0,260.5 L808.0,276.5 L808.0,313.5 L777.0,329.5 L746.0,313.5 L746.0,276.5Z M839.0,260.5 L870.0,276.5 L870.0,313.5 L839.0,329.5 L808.0,313.5 L808.0,276.5Z M901.0,260.5 L932.0,276.5 L932.0,313.5 L901.0,329.5 L870.0,313.5 L870.0,276.5Z M963.0,260.5 L994.0,276.5 L994.0,313.5 L963.0,329.5 L932.0,313.5 L932.0,276.5Z M1025.0,260.5 L1056.0,276.5 L1056.0,313.5 L1025.0,329.5 L994.0,313.5 L994.0,276.5Z M64.0,313.5 L95.0,329.5 L95.0,366.5 L64.0,382.5 L33.0,366.5 L33.0,329.5Z M126.0,313.5 L157.0,329.5 L157.0,366.5 L126.0,382.5 L95.0,366.5 L95.0,329.5Z M188.0,313.5 L219.0,329.5 L219.0,366.5 L188.0,382.5 L157.0,366.5 L157.0,329.5Z M250.0,313.5 L281.0,329.5 L281.0,366.5 L250.0,382.5 L219.0,366.5 L219.0,329.5Z M312.0,313.5 L343.0,329.5 L343.0,366.5 L312.0,382.5 L281.0,366.5 L281.0,329.5Z M374.0,313.5 L405.0,329.5 L405.0,366.5 L374.0,382.5 L343.0,366.5 L343.0,329.5Z M436.0,313.5 L467.0,329.5 L467.0,366.5 L436.0,382.5 L405.0,366.5 L405.0,329.5Z M498.0,313.5 L529.0,329.5 L529.0,366.5 L498.0,382.5 L467.0,366.5 L467.0,329.5Z M560.0,313.5 L591.0,329.5 L591.0,366.5 L560.0,382.5 L529.0,366.5 L529.0,329.5Z M622.0,313.5 L653.0,329.5 L653.0,366.5 L622.0,382.5 L591.0,366.5 L591.0,329.5Z M684.0,313.5 L715.0,329.5 L715.0,366.5 L684.0,382.5 L653.0,366.5 L653.0,329.5Z M746.0,313.5 L777.0,329.5 L777.0,366.5 L746.0,382.5 L715.0,366.5 L715.0,329.5Z M808.0,313.5 L839.0,329.5 L839.0,366.5 L808.0,382.5 L777.0,366.5 L777.0,329.5Z M870.0,313.5 L901.0,329.5 L901.0,366.5 L870.0,382.5 L839.0,366.5 L839.0,329.5Z M932.0,313.5 L963.0,329.5 L963.0,366.5 L932.0,382.5 L901.0,366.5 L901.0,329.5Z M994.0,313.5 L1025.0,329.5 L1025.0,366.5 L994.0,382.5 L963.0,366.5 L963.0,329.5Z M33.0,366.5 L64.0,382.5 L64.0,419.5 L33.0,435.5 L2.0,419.5 L2.0,382.5Z M95.0,366.5 L126.0,382.5 L126.0,419.5 L95.0,435.5 L64.0,419.5 L64.0,382.5Z M157.0,366.5 L188.0,382.5 L188.0,419.5 L157.0,435.5 L126.0,419.5 L126.0,382.5Z M219.0,366.5 L250.0,382.5 L250.0,419.5 L219.0,435.5 L188.0,419.5 L188.0,382.5Z M281.0,366.5 L312.0,382.5 L312.0,419.5 L281.0,435.5 L250.0,419.5 L250.0,382.5Z M343.0,366.5 L374.0,382.5 L374.0,419.5 L343.0,435.5 L312.0,419.5 L312.0,382.5Z M405.0,366.5 L436.0,382.5 L436.0,419.5 L405.0,435.5 L374.0,419.5 L374.0,382.5Z M467.0,366.5 L498.0,382.5 L498.0,419.5 L467.0,435.5 L436.0,419.5 L436.0,382.5Z M529.0,366.5 L560.0,382.5 L560.0,419.5 L529.0,435.5 L498.0,419.5 L498.0,382.5Z M591.0,366.5 L622.0,382.5 L622.0,419.5 L591.0,435.5 L560.0,419.5 L560.0,382.5Z M653.0,366.5 L684.0,382.5 L684.0,419.5 L653.0,435.5 L622.0,419.5 L622.0,382.5Z M715.0,366.5 L746.0,382.5 L746.0,419.5 L715.0,435.5 L684.0,419.5 L684.0,382.5Z M777.0,366.5 L808.0,382.5 L808.0,419.5 L777.0,435.5 L746.0,419.5 L746.0,382.5Z M839.0,366.5 L870.0,382.5 L870.0,419.5 L839.0,435.5 L808.0,419.5 L808.0,382.5Z M901.0,366.5 L932.0,382.5 L932.0,419.5 L901.0,435.5 L870.0,419.5 L870.0,382.5Z M963.0,366.5 L994.0,382.5 L994.0,419.5 L963.0,435.5 L932.0,419.5 L932.0,382.5Z M1025.0,366.5 L1056.0,382.5 L1056.0,419.5 L1025.0,435.5 L994.0,419.5 L994.0,382.5Z M64.0,419.5 L95.0,435.5 L95.0,472.5 L64.0,488.5 L33.0,472.5 L33.0,435.5Z M126.0,419.5 L157.0,435.5 L157.0,472.5 L126.0,488.5 L95.0,472.5 L95.0,435.5Z M188.0,419.5 L219.0,435.5 L219.0,472.5 L188.0,488.5 L157.0,472.5 L157.0,435.5Z M250.0,419.5 L281.0,435.5 L281.0,472.5 L250.0,488.5 L219.0,472.5 L219.0,435.5Z M312.0,419.5 L343.0,435.5 L343.0,472.5 L312.0,488.5 L281.0,472.5 L281.0,435.5Z M374.0,419.5 L405.0,435.5 L405.0,472.5 L374.0,488.5 L343.0,472.5 L343.0,435.5Z M436.0,419.5 L467.0,435.5 L467.0,472.5 L436.0,488.5 L405.0,472.5 L405.0,435.5Z M498.0,419.5 L529.0,435.5 L529.0,472.5 L498.0,488.5 L467.0,472.5 L467.0,435.5Z M560.0,419.5 L591.0,435.5 L591.0,472.5 L560.0,488.5 L529.0,472.5 L529.0,435.5Z M622.0,419.5 L653.0,435.5 L653.0,472.5 L622.0,488.5 L591.0,472.5 L591.0,435.5Z M684.0,419.5 L715.0,435.5 L715.0,472.5 L684.0,488.5 L653.0,472.5 L653.0,435.5Z M746.0,419.5 L777.0,435.5 L777.0,472.5 L746.0,488.5 L715.0,472.5 L715.0,435.5Z M808.0,419.5 L839.0,435.5 L839.0,472.5 L808.0,488.5 L777.0,472.5 L777.0,435.5Z M870.0,419.5 L901.0,435.5 L901.0,472.5 L870.0,488.5 L839.0,472.5 L839.0,435.5Z M932.0,419.5 L963.0,435.5 L963.0,472.5 L932.0,488.5 L901.0,472.5 L901.0,435.5Z M994.0,419.5 L1025.0,435.5 L1025.0,472.5 L994.0,488.5 L963.0,472.5 L963.0,435.5Z M33.0,472.5 L64.0,488.5 L64.0,525.5 L33.0,541.5 L2.0,525.5 L2.0,488.5Z M95.0,472.5 L126.0,488.5 L126.0,525.5 L95.0,541.5 L64.0,525.5 L64.0,488.5Z M157.0,472.5 L188.0,488.5 L188.0,525.5 L157.0,541.5 L126.0,525.5 L126.0,488.5Z M219.0,472.5 L250.0,488.5 L250.0,525.5 L219.0,541.5 L188.0,525.5 L188.0,488.5Z M281.0,472.5 L312.0,488.5 L312.0,525.5 L281.0,541.5 L250.0,525.5 L250.0,488.5Z M343.0,472.5 L374.0,488.5 L374.0,525.5 L343.0,541.5 L312.0,525.5 L312.0,488.5Z M405.0,472.5 L436.0,488.5 L436.0,525.5 L405.0,541.5 L374.0,525.5 L374.0,488.5Z M467.0,472.5 L498.0,488.5 L498.0,525.5 L467.0,541.5 L436.0,525.5 L436.0,488.5Z M529.0,472.5 L560.0,488.5 L560.0,525.5 L529.0,541.5 L498.0,525.5 L498.0,488.5Z M591.0,472.5 L622.0,488.5 L622.0,525.5 L591.0,541.5 L560.0,525.5 L560.0,488.5Z M653.0,472.5 L684.0,488.5 L684.0,525.5 L653.0,541.5 L622.0,525.5 L622.0,488.5Z M715.0,472.5 L746.0,488.5 L746.0,525.5 L715.0,541.5 L684.0,525.5 L684.0,488.5Z M777.0,472.5 L808.0,488.5 L808.0,525.5 L777.0,541.5 L746.0,525.5 L746.0,488.5Z M839.0,472.5 L870.0,488.5 L870.0,525.5 L839.0,541.5 L808.0,525.5 L808.0,488.5Z M901.0,472.5 L932.0,488.5 L932.0,525.5 L901.0,541.5 L870.0,525.5 L870.0,488.5Z M963.0,472.5 L994.0,488.5 L994.0,525.5 L963.0,541.5 L932.0,525.5 L932.0,488.5Z M1025.0,472.5 L1056.0,488.5 L1056.0,525.5 L1025.0,541.5 L994.0,525.5 L994.0,488.5Z M64.0,525.5 L95.0,541.5 L95.0,578.5 L64.0,594.5 L33.0,578.5 L33.0,541.5Z M126.0,525.5 L157.0,541.5 L157.0,578.5 L126.0,594.5 L95.0,578.5 L95.0,541.5Z M188.0,525.5 L219.0,541.5 L219.0,578.5 L188.0,594.5 L157.0,578.5 L157.0,541.5Z M250.0,525.5 L281.0,541.5 L281.0,578.5 L250.0,594.5 L219.0,578.5 L219.0,541.5Z M312.0,525.5 L343.0,541.5 L343.0,578.5 L312.0,594.5 L281.0,578.5 L281.0,541.5Z M374.0,525.5 L405.0,541.5 L405.0,578.5 L374.0,594.5 L343.0,578.5 L343.0,541.5Z M436.0,525.5 L467.0,541.5 L467.0,578.5 L436.0,594.5 L405.0,578.5 L405.0,541.5Z M498.0,525.5 L529.0,541.5 L529.0,578.5 L498.0,594.5 L467.0,578.5 L467.0,541.5Z M560.0,525.5 L591.0,541.5 L591.0,578.5 L560.0,594.5 L529.0,578.5 L529.0,541.5Z M622.0,525.5 L653.0,541.5 L653.0,578.5 L622.0,594.5 L591.0,578.5 L591.0,541.5Z M684.0,525.5 L715.0,541.5 L715.0,578.5 L684.0,594.5 L653.0,578.5 L653.0,541.5Z M746.0,525.5 L777.0,541.5 L777.0,578.5 L746.0,594.5 L715.0,578.5 L715.0,541.5Z M808.0,525.5 L839.0,541.5 L839.0,578.5 L808.0,594.5 L777.0,578.5 L777.0,541.5Z M870.0,525.5 L901.0,541.5 L901.0,578.5 L870.0,594.5 L839.0,578.5 L839.0,541.5Z M932.0,525.5 L963.0,541.5 L963.0,578.5 L932.0,594.5 L901.0,578.5 L901.0,541.5Z M994.0,525.5 L1025.0,541.5 L1025.0,578.5 L994.0,594.5 L963.0,578.5 L963.0,541.5Z M1056.0,525.5 L1087.0,541.5 L1087.0,578.5 L1056.0,594.5 L1025.0,578.5 L1025.0,541.5Z M1213.0,148.5 L1244.0,164.5 L1244.0,201.5 L1213.0,217.5 L1182.0,201.5 L1182.0,164.5Z" fill="#879d4b"/>
<path d="M653.0,48.5 L684.0,64.5 L684.0,101.5 L653.0,117.5 L622.0,101.5 L622.0,64.5Z M715.0,48.5 L746.0,64.5 L746.0,101.5 L715.0,117.5 L684.0,101.5 L684.0,64.5Z M777.0,48.5 L808.0,64.5 L808.0,101.5 L777.0,117.5 L746.0,101.5 L746.0,64.5Z M839.0,48.5 L870.0,64.5 L870.0,101.5 L839.0,117.5 L808.0,101.5 L808.0,64.5Z M901.0,48.5 L932.0,64.5 L932.0,101.5 L901.0,117.5 L870.0,101.5 L870.0,64.5Z M963.0,48.5 L994.0,64.5 L994.0,101.5 L963.0,117.5 L932.0,101.5 L932.0,64.5Z M1056.0,313.5 L1087.0,329.5 L1087.0,366.5 L1056.0,382.5 L1025.0,366.5 L1025.0,329.5Z M1056.0,419.5 L1087.0,435.5 L1087.0,472.5 L1056.0,488.5 L1025.0,472.5 L1025.0,435.5Z" fill="#1d5c9c"/>
<path d="M33.0,48.5 L64.0,64.5 L64.0,101.5 L33.0,117.5 L2.0,101.5 L2.0,64.5Z M95.0,48.5 L126.0,64.5 L126.0,101.5 L95.0,117.5 L64.0,101.5 L64.0,64.5Z M157.0,48.5 L188.0,64.5 L188.0,101.5 L157.0,117.5 L126.0,101.5 L126.0,64.5Z M219.0,48.5 L250.0,64.5 L250.0,101.5 L219.0,117.5 L188.0,101.5 L188.0,64.5Z M281.0,48.5 L312.0,64.5 L312.0,101.5 L281.0,117.5 L250.0,101.5 L250.0,64.5Z M343.0,48.5 L374.0,64.5 L374.0,101.5 L343.0,117.5 L312.0,101.5 L312.0,64.5Z M405.0,48.5 L436.0,64.5 L436.0,101.5 L405.0,117.5 L374.0,101.5 L374.0,64.5Z M467.0,48.5 L498.0,64.5 L498.0,101.5 L467.0,117.5 L436.0,101.5 L436.0,64.5Z M529.0,48.5 L560.0,64.5 L560.0,101.5 L529.0,117.5 L498.0,101.5 L498.0,64.5Z M591.0,48.5 L622.0,64.5 L622.0,101.5 L591.0,117.5 L560.0,101.5 L560.0,64.5Z M1025.0,48.5 L1056.0,64.5 L1056.0,101.5 L1025.0,117.5 L994.0,101.5 L994.0,64.5Z M64.0,101.5 L95.0,117.5 L95.0,154.5 L64.0,170.5 L33.0,154.5 L33.0,117.5Z M126.0,101.5 L157.0,117.5 L157.0,154.5 L126.0,170.5 L95.0,154.5 L95.0,117.5Z M188.0,101.5 L219.0,117.5 L219.0,154.5 L188.0,170.5 L157.0,154.5 L157.0,117.5Z M250.0,101.5 L281.0,117.5 L281.0,154.5 L250.0,170.5 L219.0,154.5 L219.0,117.5Z M312.0,101.5 L343.0,117.5 L343.0,154.5 L312.0,170.5 L281.0,154.5 L281.0,117.5Z M374.0,101.5 L405.0,117.5 L405.0,154.5 L374.0,170.5 L343.0,154.5 L343.0,117.5Z M436.0,101.5 L467.0,117.5 L467.0,154.5 L436.0,170.5 L405.0,154.5 L405.0,117.5Z M498.0,101.5 L529.0,117.5 L529.0,154.5 L498.0,170.5 L467.0,154.5 L467.0,117.5Z M560.0,101.5 L591.0,117.5 L591.0,154.5 L560.0,170.5 L529.0,154.5 L529.0,117.5Z M622.0,101.5 L653.0,117.5 L653.0,154.5 L622.0,170.5 L591.0,154.5 L591.0,117.5Z M684.0,101.5 L715.0,117.5 L715.0,154.5 L684.0,170.5 L653.0,154.5 L653.0,117.5Z M746.0,101.5 L777.0,117.5 L777.0,154.5 L746.0,170.5 L715.0,154.5 L715.0,117.5Z M808.0,101.5 L839.0,117.5 L839.0,154.5 L808.0,170.5 L777.0,154.5 L777.0,117.5Z M870.0,101.5 L901.0,117.5 L901.0,154.5 L870.0,170.5 L839.0,154.5 L839.0,117.5Z M932.0,101.5 L963.0,117.5 L963.0,154.5 L932.0,170.5 L901.0,154.5 L901.0,117.5Z M994.0,101.5 L1025.0,117.5 L1025.0,154.5 L994.0,170.5 L963.0,154.5 L963.0,117.5Z M1056.0,101.5 L1087.0,117.5 L1087.0,154.5 L1056.0,170.5 L1025.0,154.5 L1025.0,117.5Z M33.0,154.5 L64.0,170.5 L64.0,207.5 L33.0,223.5 L2.0,207.5 L2.0,170.5Z M95.0,154.5 L126.0,170.5 L126.0,207.5 L95.0,223.5 L64.0,207.5 L64.0,170.5Z M157.0,154.5 L188.0,170.5 L188.0,207.5 L157.0,223.5 L126.0,207.5 L126.0,170.5Z M219.0,154.5 L250.0,170.5 L250.0,207.5 L219.0,223.5 L188.0,207.5 L188.0,170.5Z M281.0,154.5 L312.0,170.5 L312.0,207.5 L281.0,223.5 L250.0,207.5 L250.0,170.5Z M343.0,154.5 L374.0,170.5 L374.0,207.5 L343.0,223.5 L312.0,207.5 L312.0,170.5Z M405.0,154.5 L436.0,170.5 L436.0,207.5 L405.0,223.5 L374.0,207.5 L374.0,170.5Z M467.0,154.5 L498.0,170.5 L498.0,207.5 L467.0,223.5 L436.0,207.5 L436.0,170.5Z M529.0,154.5 L560.0,170.5 L560.0,207.5 L529.0,223.5 L498.0,207.5 L498.0,170.5Z M591.0,154.5 L622.0,170.5 L622.0,207.5 L591.0,223.5 L560.0,207.5 L560.0,170.5Z M653.0,154.5 L684.0,170.5 L684.0,207.5 L653.0,223.5 L622.0,207.5 L622.0,170.5Z M715.0,154.5 L746.0,170.5 L746.0,207.5 L715.0,223.5 L684.0,207.5 L684.0,170.5Z M777.0,154.5 L808.0,170.5 L808.0,207.5 L777.0,223.5 L746.0,207.5 L746.0,170.5Z M839.0,154.5 L870.0,170.5 L870.0,207.5 L839.0,223.5 L808.0,207.5 L808.0,170.5Z M901.0,154.5 L932.0,170.5 L932.0,207.5 L901.0,223.5 L870.0,207.5 L870.0,170.5Z M963.0,154.5 L994.0,170.5 L994.0,207.5 L963.0,223.5 L932.0,207.5 L932.0,170.5Z M1025.0,154.5 L1056.0,170.5 L1056.0,207.5 L1025.0,223.5 L994.0,207.5 L994.0,170.5Z M64.0,207.5 L95.0,223.5 L95.0,260.5 L64.0,276.5 L33.0,260.5 L33.0,223.5Z M126.0,207.5 L157.0,223.5 L157.0,260.5 L126.0,276.5 L95.0,260.5 L95.0,223.5Z M188.0,207.5 L219.0,223.5 L219.0,260.5 L188.0,276.5 L157.0,260.5 L157.0,223.5Z M250.0,207.5 L281.0,223.5 L281.0,260.5 L250.0,276.5 L219.0,260.5 L219.0,223.5Z M312.0,207.5 L343.0,223.5 L343.0,260.5 L312.0,276.5 L281.0,260.5 L281.0,223.5Z M374.0,207.5 L405.0,223.5 L405.0,260.5 L374.0,276.5 L343.0,260.5 L343.0,223.5Z M436.0,207.5 L467.0,223.5 L467.0,260.5 L436.0,276.5 L405.0,260.5 L405.0,223.5Z M498.0,207.5 L529.0,223.5 L529.0,260.5 L498.0,276.5 L467.0,260.5 L467.0,223.5Z M560.0,207.5 L591.0,223.5 L591.0,260.5 L560.0,276.5 L529.0,260.5 L529.0,223.5Z M622.0,207.5 L653.0,223.5 L653.0,260.5 L622.0,276.5 L591.0,260.5 L591.0,223.5Z M684.0,207.5 L715.0,223.5 L715.0,260.5 L684.0,276.5 L653.0,260.5 L653.0,223.5Z M746.0,207.5 L777.0,223.5 L777.0,260.5 L746.0,276.5 L715.0,260.5 L715.0,223.5Z M808.0,207.5 L839.0,223.5 L839.0,260.5 L808.0,276.5 L777.0,260.5 L777.0,223.5Z M870.0,207.5 L901.0,223.5 L901.0,260.5 L870.0,276.5 L839.0,260.5 L839.0,223.5Z M932.0,207.5 L963.0,223.5 L963.0,260.5 L932.0,276.5 L901.0,260.5 L901.0,223.5Z M994.0,207.5 L1025.0,223.5 L1025.0,260.5 L994.0,276.5 L963.0,260.5 L963.0,223.5Z M1056.0,207.5 L1087.0,223.5 L1087.0,260.5 L1056.0,276.5 L1025.0,260.5 L1025.0,223.5Z M33.0,260.5 L64.0,276.5 L64.0,313.5 L33.0,329.5 L2.0,313.5 L2.0,276.5Z M95.0,260.5 L126.0,276.5 L126.0,313.5 L95.0,329.5 L64.0,313.5 L64.0,276.5Z M157.0,260.5 L188.0,276.5 L188.0,313.5 L157.0,329.5 L126.0,313.5 L126.0,276.5Z M219.0,260.5 L250.0,276.5 L250.0,313.5 L219.0,329.5 L188.0,313.5 L188.0,276.5Z M281.0,260.5 L312.0,276.5 L312.0,313.5 L281.0,329.5 L250.0,313.5 L250.0,276.5Z M343.0,260.5 L374.0,276.5 L374.0,313.5 L343.0,329.5 L312.0,313.5 L312.0,276.5Z M405.0,260.5 L436.0,276.5 L436.0,313.5 L405.0,329.5 L374.0,313.5 L374.0,276.5Z M467.0,260.5 L498.0,276.5 L498.0,313.5 L467.0,329.5 L436.0,313.5 L436.0,276.5Z M529.0,260.5 L560.0,276.5 L560.0,313.5 L529.0,329.5 L498.0,313.5 L498.0,276.5Z M591.0,260.5 L622.0,276.5 L622.0,313.5 L591.0,329.5 L560.0,313.5 L560.0,276.5Z M653.0,260.5 L684.0,276.5 L684.0,313.5 L653.0,329.5 L622.0,313.5 L622.0,276.5Z M715.0,260.5 L746.0,276.5 L746.0,313.5 L715.0,329.5 L684.0,313.5 L684.0,276.5Z M777.0,260.5 L808.0,276.5 L808.0,313.5 L777.0,329.5 L746.0,313.5 L746.0,276.5Z M839.0,260.5 L870.0,276.5 L870.0,313.5 L839.0,329.5 L808.0,313.5 L808.0,276.5Z M901.0,260.5 L932.0,276.5 L932.0,313.5 L901.0,329.5 L870.0,313.5 L870.0,276.5Z M963.0,260.5 L994.0,276.5 L994.0,313.5 L963.0,329.5 L932.0,313.5 L932.0,276.5Z M1025.0,260.5 L1056.0,276.5 L1056.0,313.5 L1025.0,329.5 L994.0,313.5 L994.0,276.5Z M64.0,313.5 L95.0,329.5 L95.0,366.5 L64.0,382.5 L33.0,366.5 L33.0,329.5Z M126.0,313.5 L157.0,329.5 L157.0,366.5 L126.0,382.5 L95.0,366.5 L95.0,329.5Z M188.0,313.5 L219.0,329.5 L219.0,366.5 L188.0,382.5 L157.0,366.5 L157.0,329.5Z M250.0,313.5 L281.0,329.5 L281.0,366.5 L250.0,382.5 L219.0,366.5 L219.0,329.5Z M312.0,313.5 L343.0,329.5 L343.0,366.5 L312.0,382.5 L281.0,366.5 L281.0,329.5Z M374.0,313.5 L405.0,329.5 L405.0,366.5 L374.0,382.5 L343.0,366.5 L343.0,329.5Z M436.0,313.5 L467.0,329.5 L467.0,366.5 L436.0,382.5 L405.0,366.5 L405.0,329.5Z M498.0,313.5 L529.0,329.5 L529.0,366.5 L498.0,382.5 L467.0,366.5 L467.0,329.5Z M560.0,313.5 L591.0,329.5 L591.0,366.5 L560.0,382.5 L529.0,366.5 L529.0,329.5Z M622.0,313.5 L653.0,329.5 L653.0,366.5 L622.0,382.5 L591.0,366.5 L591.0,329.5Z M684.0,313.5 L715.0,329.5 L715.0,366.5 L684.0,382.5 L653.0,366.5 L653.0,329.5Z M746.0,313.5 L777.0,329.5 L777.0,366.5 L746.0,382.5 L715.0,366.5 L715.0,329.5Z M808.0,313.5 L839.0,329.5 L839.0,366.5 L808.0,382.5 L777.0,366.5 L777.0,329.5Z M870.0,313.5 L901.0,329.5 L901.0,366.5 L870.0,382.5 L839.0,366.5 L839.0,329.5Z M932.0,313.5 L963.0,329.5 L963.0,366.5 L932.0,382.5 L901.0,366.5 L901.0,329.5Z M994.0,313.5 L1025.0,329.5 L1025.0,366.5 L994.0,382.5 L963.0,366.5 L963.0,329.5Z M33.0,366.5 L64.0,382.5 L64.0,419.5 L33.0,435.5 L2.0,419.5 L2.0,382.5Z M95.0,366.5 L126.0,382.5 L126.0,419.5 L95.0,435.5 L64.0,419.5 L64.0,382.5Z M157.0,366.5 L188.0,382.5 L188.0,419.5 L157.0,435.5 L126.0,419.5 L126.0,382.5Z M219.0,366.5 L250.0,382.5 L250.0,419.5 L219.0,435.5 L188.0,419.5 L188.0,382.5Z M281.0,366.5 L312.0,382.5 L312.0,419.5 L281.0,435.5 L250.0,419.5 L250.0,382.5Z M343.0,366.5 L374.0,382.5 L374.0,419.5 L343.0,435.5 L312.0,419.5 L312.0,382.5Z M405.0,366.5 L436.0,382.5 L436.0,419.5 L405.0,435.5 L374.0,419.5 L374.0,382.5Z M467.0,366.5 L498.0,382.5 L498.0,419.5 L467.0,435.5 L436.0,419.5 L436.0,382.5Z M529.0,366.5 L560.0,382.5 L560.0,419.5 L529.0,435.5 L498.0,419.5 L498.0,382.5Z M591.0,366.5 L622.0,382.5 L622.0,419.5 L591.0,435.5 L560.0,419.5 L560.0,382.5Z M653.0,366.5 L684.0,382.5 L684.0,419.5 L653.0,435.5 L622.0,419.5 L622.0,382.5Z M715.0,366.5 L746.0,382.5 L746.0,419.5 L715.0,435.5 L684.0,419.5 L684.0,382.5Z M777.0,366.5 L808.0,382.5 L808.0,419.5 L777.0,435.5 L746.0,419.5 L746.0,382.5Z M839.0,366.5 L870.0,382.5 L870.0,419.5 L839.0,435.5 L808.0,419.5 L808.0,382.5Z M901.0,366.5 L932.0,382.5 L932.0,419.5 L901.0,435.5 L870.0,419.5 L870.0,382.5Z M963.0,366.5 L994.0,382.5 L994.0,419.5 L963.0,435.5 L932.0,419.5 L932.0,382.5Z M1025.0,366.5 L1056.0,382.5 L1056.0,419.5 L1025.0,435.5 L994.0,419.5 L994.0,382.5Z M64.0,419.5 L95.0,435.5 L95.0,472.5 L64.0,488.5 L33.0,472.5 L33.0,435.5Z M126.0,419.5 L157.0,435.5 L157.0,472.5 L126.0,488.5 L95.0,472.5 L95.0,435.5Z M188.0,419.5 L219.0,435.5 L219.0,472.5 L188.0,488.5 L157.0,472.5 L157.0,435.5Z M250.0,419.5 L281.0,435.5 L281.0,472.5 L250.0,488.5 L219.0,472.5 L219.0,435.5Z M312.0,419.5 L343.0,435.5 L343.0,472.5 L312.0,488.5 L281.0,472.5 L281.0,435.5Z M374.0,419.5 L405.0,435.5 L405.0,472.5 L374.0,488.5 L343.0,472.5 L343.0,435.5Z M436.0,419.5 L467.0,435.5 L467.0,472.5 L436.0,488.5 L405.0,472.5 L405.0,435.5Z M498.0,419.5 L529.0,435.5 L529.0,472.5 L498.0,488.5 L467.0,472.5 L467.0,435.5Z M560.0,419.5 L591.0,435.5 L591.0,472.5 L560.0,488.5 L529.0,472.5 L529.0,435.5Z M622.0,419.5 L653.0,435.5 L653.0,472.5 L622.0,488.5 L591.0,472.5 L591.0,435.5Z M684.0,419.5 L715.0,435.5 L715.0,472.5 L684.0,488.5 L653.0,472.5 L653.0,435.5Z M746.0,419.5 L777.0,435.5 L777.0,472.5 L746.0,488.5 L715.0,472.5 L715.0,435.5Z M808.0,419.5 L839.0,435.5 L839.0,472.5 L808.0,488.5 L777.0,472.5 L777.0,435.5Z M870.0,419.5 L901.0,435.5 L901.0,472.5 L870.0,488.5 L839.0,472.5 L839.0,435.5Z M932.0,419.5 L963.0,435.5 L963.0,472.5 L932.0,488.5 L901.0,472.5 L901.0,435.5Z M994.0,419.5 L1025.0,435.5 L1025.0,472.5 L994.0,488.5 L963.0,472.5 L963.0,435.5Z M33.0,472.5 L64.0,488.5 L64.0,525.5 L33.0,541.5 L2.0,525.5 L2.0,488.5Z M95.0,472.5 L126.0,488.5 L126.0,525.5 L95.0,541.5 L64.0,525.5 L64.0,488.5Z M157.0,472.5 L188.0,488.5 L188.0,525.5 L157.0,541.5 L126.0,525.5 L126.0,488.5Z M219.0,472.5 L250.0,488.5 L250.0,525.5 L219.0,541.5 L188.0,525.5 L188.0,488.5Z M281.0,472.5 L312.0,488.5 L312.0,525.5 L281.0,541.5 L250.0,525.5 L250.0,488.5Z M343.0,472.5 L374.0,488.5 L374.0,525.5 L343.0,541.5 L312.0,525.5 L312.0,488.5Z M405.0,472.5 L436.0,488.5 L436.0,525.5 L405.0,541.5 L374.0,525.5 L374.0,488.5Z M467.0,472.5 L498.0,488.5 L498.0,525.5 L467.0,541.5 L436.0,525.5 L436.0,488.5Z M529.0,472.5 L560.0,488.5 L560.0,525.5 L529.0,541.5 L498.0,525.5 L498.0,488.5Z M591.0,472.5 L622.0,488.5 L622.0,525.5 L591.0,541.5 L560.0,525.5 L560.0,488.5Z M653.0,472.5 L684.0,488.5 L684.0,525.5 L653.0,541.5 L622.0,525.5 L622.0,488.5Z M715.0,472.5 L746.0,488.5 L746.0,525.5 L715.0,541.5 L684.0,525.5 L684.0,488.5Z M777.0,472.5 L808.0,488.5 L808.0,525.5 L777.0,541.5 L746.0,525.5 L746.0,488.5Z M839.0,472.5 L870.0,488.5 L870.0,525.5 L839.0,541.5 L808.0,525.5 L808.0,488.5Z M901.0,472.5 L932.0,488.5 L932.0,525.5 L901.0,541.5 L870.0,525.5 L870.0,488.5Z M963.0,472.5 L994.0,488.5 L994.0,525.5 L963.0,541.5 L932.0,525.5 L932.0,488.5Z M1025.0,472.5 L1056.0,488.5 L1056.0,525.5 L1025.0,541.5 L994.0,525.5 L994.0,488.5Z M64.0,525.5 L95.0,541.5 L95.0,578.5 L64.0,594.5 L33.0,578.5 L33.0,541.5Z M126.0,525.5 L157.0,541.5 L157.0,578.5 L126.0,594.5 L95.0,578.5 L95.0,541.5Z M188.0,525.5 L219.0,541.5 L219.0,578.5 L188.0,594.5 L157.0,578.5 L157.0,541.5Z M250.0,525.5 L281.0,541.5 L281.0,578.5 L250.0,594.5 L219.0,578.5 L219.0,541.5Z M312.0,525.5 L343.0,541.5 L343.0,578.5 L312.0,594.5 L281.0,578.5 L281.0,541.5Z M374.0,525.5 L405.0,541.5 L405.0,578.5 L374.0,594.5 L343.0,578.5 L343.0,541.5Z M436.0,525.5 L467.0,541.5 L467.0,578.5 L436.0,594.5 L405.0,578.5 L405.0,541.5Z M498.0,525.5 L529.0,541.5 L529.0,578.5 L498.0,594.5 L467.0,578.5 L467.0,541.5Z M560.0,525.5 L591.0,541.5 L591.0,578.5 L560.0,594.5 L529.0,578.5 L529.0,541.5Z M622.0,525.5 L653.0,541.5 L653.0,578.5 L622.0,594.5 L591.0,578.5 L591.0,541.5Z M684.0,525.5 L715.0,541.5 L715.0,578.5 L684.0,594.5 L653.0,578.5 L653.0,541.5Z M746.0,525.5 L777.0,541.5 L777.0,578.5 L746.0,594.5 L715.0,578.5 L715.0,541.5Z M808.0,525.5 L839.0,541.5 L839.0,578.5 L808.0,594.5 L777.0,578.5 L777.0,541.5Z M870.0,525.5 L901.0,541.5 L901.0,578.5 L870.0,594.5 L839.0,578.5 L839.0,541.5Z M932.0,525.5 L963.0,541.5 L963.0,578.5 L932.0,594.5 L901.0,578.5 L901.0,541.5Z M994.0,525.5 L1025.0,541.5 L1025.0,578.5 L994.0,594.5 L963.0,578.5 L963.0,541.5Z M1056.0,525.5 L1087.0,541.5 L1087.0,578.5 L1056.0,594.5 L1025.0,578.5 L1025.0,541.5Z M1213.0,148.5 L1244.0,164.5 L1244.0,201.5 L1213.0,217.5 L1182.0,201.5 L1182.0,164.5Z M653.0,48.5 L684.0,64.5 L684.0,101.5 L653.0,117.5 L622.0,101.5 L622.0,64.5Z M715.0,48.5 L746.0,64.5 L746.0,101.5 L715.0,117.5 L684.0,101.5 L684.0,64.5Z M777.0,48.5 L808.0,64.5 L808.0,101.5 L777.0,117.5 L746.0,101.5 L746.0,64.5Z M839.0,48.5 L870.0,64.5 L870.0,101.5 L839.0,117.5 L808.0,101.5 L808.0,64.5Z M901.0,48.5 L932.0,64.5 L932.0,101.5 L901.0,117.5 L870.0,101.5 L870.0,64.5Z M963.0,48.5 L994.0,64.5 L994.0,101.5 L963.0,117.5 L932.0,101.5 L932.0,64.5Z M1056.0,313.5 L1087.0,329.5 L1087.0,366.5 L1056.0,382.5 L1025.0,366.5 L1025.0,329.5Z M1056.0,419.5 L1087.0,435.5 L1087.0,472.5 L1056.0,488.5 L1025.0,472.5 L1025.0,435.5Z" fill="#000" filter="url(#tex)" opacity="0.25"/>
<path d="M33.0,48.5 L64.0,64.5 L64.0,101.5 L33.0,117.5 L2.0,101.5 L2.0,64.5Z M95.0,48.5 L126.0,64.5 L126.0,101.5 L95.0,117.5 L64.0,101.5 L64.0,64.5Z M157.0,48.5 L188.0,64.5 L188.0,101.5 L157.0,117.5 L126.0,101.5 L126.0,64.5Z M219.0,48.5 L250.0,64.5 L250.0,101.5 L219.0,117.5 L188.0,101.5 L188.0,64.5Z M281.0,48.5 L312.0,64.5 L312.0,101.5 L281.0,117.5 L250.0,101.5 L250.0,64.5Z M343.0,48.5 L374.0,64.5 L374.0,101.5 L343.0,117.5 L312.0,101.5 L312.0,64.5Z M405.0,48.5 L436.0,64.5 L436.0,101.5 L405.0,117.5 L374.0,101.5 L374.0,64.5Z M467.0,48.5 L498.0,64.5 L498.0,101.5 L467.0,117.5 L436.0,101.5 L436.0,64.5Z M529.0,48.5 L560.0,64.5 L560.0,101.5 L529.0,117.5 L498.0,101.5 L498.0,64.5Z M591.0,48.5 L622.0,64.5 L622.0,101.5 L591.0,117.5 L560.0,101.5 L560.0,64.5Z M1025.0,48.5 L1056.0,64.5 L1056.0,101.5 L1025.0,117.5 L994.0,101.5 L994.0,64.5Z M64.0,101.5 L95.0,117.5 L95.0,154.5 L64.0,170.5 L33.0,154.5 L33.0,117.5Z M126.0,101.5 L157.0,117.5 L157.0,154.5 L126.0,170.5 L95.0,154.5 L95.0,117.5Z M188.0,101.5 L219.0,117.5 L219.0,154.5 L188.0,170.5 L157.0,154.5 L157.0,117.5Z M250.0,101.5 L281.0,117.5 L281.0,154.5 L250.0,170.5 L219.0,154.5 L219.0,117.5Z M312.0,101.5 L343.0,117.5 L343.0,154.5 L312.0,170.5 L281.0,154.5 L281.0,117.5Z M374.0,101.5 L405.0,117.5 L405.0,154.5 L374.0,170.5 L343.0,154.5 L343.0,117.5Z M436.0,101.5 L467.0,117.5 L467.0,154.5 L436.0,170.5 L405.0,154.5 L405.0,117.5Z M498.0,101.5 L529.0,117.5 L529.0,154.5 L498.0,170.5 L467.0,154.5 L467.0,117.5Z M560.0,101.5 L591.0,117.5 L591.0,154.5 L560.0,170.5 L529.0,154.5 L529.0,117.5Z M622.0,101.5 L653.0,117.5 L653.0,154.5 L622.0,170.5 L591.0,154.5 L591.0,117.5Z M684.0,101.5 L715.0,117.5 L715.0,154.5 L684.0,170.5 L653.0,154.5 L653.0,117.5Z M746.0,101.5 L777.0,117.5 L777.0,154.5 L746.0,170.5 L715.0,154.5 L715.0,117.5Z M808.0,101.5 L839.0,117.5 L839.0,154.5 L808.0,170.5 L777.0,154.5 L777.0,117.5Z M870.0,101.5 L901.0,117.5 L901.0,154.5 L870.0,170.5 L839.0,154.5 L839.0,117.5Z M932.0,101.5 L963.0,117.5 L963.0,154.5 L932.0,170.5 L901.0,154.5 L901.0,117.5Z M994.0,101.5 L1025.0,117.5 L1025.0,154.5 L994.0,170.5 L963.0,154.5 L963.0,117.5Z M1056.0,101.5 L1087.0,117.5 L1087.0,154.5 L1056.0,170.5 L1025.0,154.5 L1025.0,117.5Z M33.0,154.5 L64.0,170.5 L64.0,207.5 L33.0,223.5 L2.0,207.5 L2.0,170.5Z M95.0,154.5 L126.0,170.5 L126.0,207.5 L95.0,223.5 L64.0,207.5 L64.0,170.5Z M157.0,154.5 L188.0,170.5 L188.0,207.5 L157.0,223.5 L126.0,207.5 L126.0,170.5Z M219.0,154.5 L250.0,170.5 L250.0,207.5 L219.0,223.5 L188.0,207.5 L188.0,170.5Z M281.0,154.5 L312.0,170.5 L312.0,207.5 L281.0,223.5 L250.0,207.5 L250.0,170.5Z M343.0,154.5 L374.0,170.5 L374.0,207.5 L343.0,223.5 L312.0,207.5 L312.0,170.5Z M405.0,154.5 L436.0,170.5 L436.0,207.5 L405.0,223.5 L374.0,207.5 L374.0,170.5Z M467.0,154.5 L498.0,170.5 L498.0,207.5 L467.0,223.5 L436.0,207.5 L436.0,170.5Z M529.0,154.5 L560.0,170.5 L560.0,207.5 L529.0,223.5 L498.0,207.5 L498.0,170.5Z M591.0,154.5 L622.0,170.5 L622.0,207.5 L591.0,223.5 L560.0,207.5 L560.0,170.5Z M653.0,154.5 L684.0,170.5 L684.0,207.5 L653.0,223.5 L622.0,207.5 L622.0,170.5Z M715.0,154.5 L746.0,170.5 L746.0,207.5 L715.0,223.5 L684.0,207.5 L684.0,170.5Z M777.0,154.5 L808.0,170.5 L808.0,207.5 L777.0,223.5 L746.0,207.5 L746.0,170.5Z M839.0,154.5 L870.0,170.5 L870.0,207.5 L839.0,223.5 L808.0,207.5 L808.0,170.5Z M901.0,154.5 L932.0,170.5 L932.0,207.5 L901.0,223.5 L870.0,207.5 L870.0,170.5Z M963.0,154.5 L994.0,170.5 L994.0,207.5 L963.0,223.5 L932.0,207.5 L932.0,170.5Z M1025.0,154.5 L1056.0,170.5 L1056.0,207.5 L1025.0,223.5 L994.0,207.5 L994.0,170.5Z M64.0,207.5 L95.0,223.5 L95.0,260.5 L64.0,276.5 L33.0,260.5 L33.0,223.5Z M126.0,207.5 L157.0,223.5 L157.0,260.5 L126.0,276.5 L95.0,260.5 L95.0,223.5Z M188.0,207.5 L219.0,223.5 L219.0,260.5 L188.0,276.5 L157.0,260.5 L157.0,223.5Z M250.0,207.5 L281.0,223.5 L281.0,260.5 L250.0,276.5 L219.0,260.5 L219.0,223.5Z M312.0,207.5 L343.0,223.5 L343.0,260.5 L312.0,276.5 L281.0,260.5 L281.0,223.5Z M374.0,207.5 L405.0,223.5 L405.0,260.5 L374.0,276.5 L343.0,260.5 L343.0,223.5Z M436.0,207.5 L467.0,223.5 L467.0,260.5 L436.0,276.5 L405.0,260.5 L405.0,223.5Z M498.0,207.5 L529.0,223.5 L529.0,260.5 L498.0,276.5 L467.0,260.5 L467.0,223.5Z M560.0,207.5 L591.0,223.5 L591.0,260.5 L560.0,276.5 L529.0,260.5 L529.0,223.5Z M622.0,207.5 L653.0,223.5 L653.0,260.5 L622.0,276.5 L591.0,260.5 L591.0,223.5Z M684.0,207.5 L715.0,223.5 L715.0,260.5 L684.0,276.5 L653.0,260.5 L653.0,223.5Z M746.0,207.5 L777.0,223.5 L777.0,260.5 L746.0,276.5 L715.0,260.5 L715.0,223.5Z M808.0,207.5 L839.0,223.5 L839.0,260.5 L808.0,276.5 L777.0,260.5 L777.0,223.5Z M870.0,207.5 L901.0,223.5 L901.0,260.5 L870.0,276.5 L839.0,260.5 L839.0,223.5Z M932.0,207.5 L963.0,223.5 L963.0,260.5 L932.0,276.5 L901.0,260.5 L901.0,223.5Z M994.0,207.5 L1025.0,223.5 L1025.0,260.5 L994.0,276.5 L963.0,260.5 L963.0,223.5Z M1056.0,207.5 L1087.0,223.5 L1087.0,260.5 L1056.0,276.5 L1025.0,260.5 L1025.0,223.5Z M33.0,260.5 L64.0,276.5 L64.0,313.5 L33.0,329.5 L2.0,313.5 L2.0,276.5Z M95.0,260.5 L126.0,276.5 L126.0,313.5 L95.0,329.5 L64.0,313.5 L64.0,276.5Z M157.0,260.5 L188.0,276.5 L188.0,313.5 L157.0,329.5 L126.0,313.5 L126.0,276.5Z M219.0,260.5 L250.0,276.5 L250.0,313.5 L219.0,329.5 L188.0,313.5 L188.0,276.5Z M281.0,260.5 L312.0,276.5 L312.0,313.5 L281.0,329.5 L250.0,313.5 L250.0,276.5Z M343.0,260.5 L374.0,276.5 L374.0,313.5 L343.0,329.5 L312.0,313.5 L312.0,276.5Z M405.0,260.5 L436.0,276.5 L436.0,313.5 L405.0,329.5 L374.0,313.5 L374.0,276.5Z M467.0,260.5 L498.0,276.5 L498.0,313.5 L467.0,329.5 L436.0,313.5 L436.0,276.5Z M529.0,260.5 L560.0,276.5 L560.0,313.5 L529.0,329.5 L498.0,313.5 L498.0,276.5Z M591.0,260.5 L622.0,276.5 L622.0,313.5 L591.0,329.5 L560.0,313.5 L560.0,276.5Z M653.0,260.5 L684.0,276.5 L684.0,313.5 L653.0,329.5 L622.0,313.5 L622.0,276.5Z M715.0,260.5 L746.0,276.5 L746.0,313.5 L715.0,329.5 L684.0,313.5 L684.0,276.5Z M777.0,260.5 L808.0,276.5 L808.0,313.5 L777.0,329.5 L746.0,313.5 L746.0,276.5Z M839.0,260.5 L870.0,276.5 L870.0,313.5 L839.0,329.5 L808.0,313.5 L808.0,276.5Z M901.0,260.5 L932.0,276.5 L932.0,313.5 L901.0,329.5 L870.0,313.5 L870.0,276.5Z M963.0,260.5 L994.0,276.5 L994.0,313.5 L963.0,329.5 L932.0,313.5 L932.0,276.5Z M1025.0,260.5 L1056.0,276.5 L1056.0,313.5 L1025.0,329.5 L994.0,313.5 L994.0,276.5Z M64.0,313.5 L95.0,329.5 L95.0,366.5 L64.0,382.5 L33.0,366.5 L33.0,329.5Z M126.0,313.5 L157.0,329.5 L157.0,366.5 L126.0,382.5 L95.0,366.5 L95.0,329.5Z M188.0,313.5 L219.0,329.5 L219.0,366.5 L188.0,382.5 L157.0,366.5 L157.0,329.5Z M250.0,313.5 L281.0,329.5 L281.0,366.5 L250.0,382.5 L219.0,366.5 L219.0,329.5Z M312.0,313.5 L343.0,329.5 L343.0,366.5 L312.0,382.5 L281.0,366.5 L281.0,329.5Z M374.0,313.5 L405.0,329.5 L405.0,366.5 L374.0,382.5 L343.0,366.5 L343.0,329.5Z M436.0,313.5 L467.0,329.5 L467.0,366.5 L436.0,382.5 L405.0,366.5 L405.0,329.5Z M498.0,313.5 L529.0,329.5 L529.0,366.5 L498.0,382.5 L467.0,366.5 L467.0,329.5Z M560.0,313.5 L591.0,329.5 L591.0,366.5 L560.0,382.5 L529.0,366.5 L529.0,329.5Z M622.0,313.5 L653.0,329.5 L653.0,366.5 L622.0,382.5 L591.0,366.5 L591.0,329.5Z M684.0,313.5 L715.0,329.5 L715.0,366.5 L684.0,382.5 L653.0,366.5 L653.0,329.5Z M746.0,313.5 L777.0,329.5 L777.0,366.5 L746.0,382.5 L715.0,366.5 L715.0,329.5Z M808.0,313.5 L839.0,329.5 L839.0,366.5 L808.0,382.5 L777.0,366.5 L777.0,329.5Z M870.0,313.5 L901.0,329.5 L901.0,366.5 L870.0,382.5 L839.0,366.5 L839.0,329.5Z M932.0,313.5 L963.0,329.5 L963.0,366.5 L932.0,382.5 L901.0,366.5 L901.0,329.5Z M994.0,313.5 L1025.0,329.5 L1025.0,366.5 L994.0,382.5 L963.0,366.5 L963.0,329.5Z M33.0,366.5 L64.0,382.5 L64.0,419.5 L33.0,435.5 L2.0,419.5 L2.0,382.5Z M95.0,366.5 L126.0,382.5 L126.0,419.5 L95.0,435.5 L64.0,419.5 L64.0,382.5Z M157.0,366.5 L188.0,382.5 L188.0,419.5 L157.0,435.5 L126.0,419.5 L126.0,382.5Z M219.0,366.5 L250.0,382.5 L250.0,419.5 L219.0,435.5 L188.0,419.5 L188.0,382.5Z M281.0,366.5 L312.0,382.5 L312.0,419.5 L281.0,435.5 L250.0,419.5 L250.0,382.5Z M343.0,366.5 L374.0,382.5 L374.0,419.5 L343.0,435.5 L312.0,419.5 L312.0,382.5Z M405.0,366.5 L436.0,382.5 L436.0,419.5 L405.0,435.5 L374.0,419.5 L374.0,382.5Z M467.0,366.5 L498.0,382.5 L498.0,419.5 L467.0,435.5 L436.0,419.5 L436.0,382.5Z M529.0,366.5 L560.0,382.5 L560.0,419.5 L529.0,435.5 L498.0,419.5 L498.0,382.5Z M591.0,366.5 L622.0,382.5 L622.0,419.5 L591.0,435.5 L560.0,419.5 L560.0,382.5Z M653.0,366.5 L684.0,382.5 L684.0,419.5 L653.0,435.5 L622.0,419.5 L622.0,382.5Z M715.0,366.5 L746.0,382.5 L746.0,419.5 L715.0,435.5 L684.0,419.5 L684.0,382.5Z M777.0,366.5 L808.0,382.5 L808.0,419.5 L777.0,435.5 L746.0,419.5 L746.0,382.5Z M839.0,366.5 L870.0,382.5 L870.0,419.5 L839.0,435.5 L808.0,419.5 L808.0,382.5Z M901.0,366.5 L932.0,382.5 L932.0,419.5 L901.0,435.5 L870.0,419.5 L870.0,382.5Z M963.0,366.5 L994.0,382.5 L994.0,419.5 L963.0,435.5 L932.0,419.5 L932.0,382.5Z M1025.0,366.5 L1056.0,382.5 L1056.0,419.5 L1025.0,435.5 L994.0,419.5 L994.0,382.5Z M64.0,419.5 L95.0,435.5 L95.0,472.5 L64.0,488.5 L33.0,472.5 L33.0,435.5Z M126.0,419.5 L157.0,435.5 L157.0,472.5 L126.0,488.5 L95.0,472.5 L95.0,435.5Z M188.0,419.5 L219.0,435.5 L219.0,472.5 L188.0,488.5 L157.0,472.5 L157.0,435.5Z M250.0,419.5 L281.0,435.5 L281.0,472.5 L250.0,488.5 L219.0,472.5 L219.0,435.5Z M312.0,419.5 L343.0,435.5 L343.0,472.5 L312.0,488.5 L281.0,472.5 L281.0,435.5Z M374.0,419.5 L405.0,435.5 L405.0,472.5 L374.0,488.5 L343.0,472.5 L343.0,435.5Z M436.0,419.5 L467.0,435.5 L467.0,472.5 L436.0,488.5 L405.0,472.5 L405.0,435.5Z M498.0,419.5 L529.0,435.5 L529.0,472.5 L498.0,488.5 L467.0,472.5 L467.0,435.5Z M560.0,419.5 L591.0,435.5 L591.0,472.5 L560.0,488.5 L529.0,472.5 L529.0,435.5Z M622.0,419.5 L653.0,435.5 L653.0,472.5 L622.0,488.5 L591.0,472.5 L591.0,435.5Z M684.0,419.5 L715.0,435.5 L715.0,472.5 L684.0,488.5 L653.0,472.5 L653.0,435.5Z M746.0,419.5 L777.0,435.5 L777.0,472.5 L746.0,488.5 L715.0,472.5 L715.0,435.5Z M808.0,419.5 L839.0,435.5 L839.0,472.5 L808.0,488.5 L777.0,472.5 L777.0,435.5Z M870.0,419.5 L901.0,435.5 L901.0,472.5 L870.0,488.5 L839.0,472.5 L839.0,435.5Z M932.0,419.5 L963.0,435.5 L963.0,472.5 L932.0,488.5 L901.0,472.5 L901.0,435.5Z M994.0,419.5 L1025.0,435.5 L1025.0,472.5 L994.0,488.5 L963.0,472.5 L963.0,435.5Z M33.0,472.5 L64.0,488.5 L64.0,525.5 L33.0,541.5 L2.0,525.5 L2.0,488.5Z M95.0,472.5 L126.0,488.5 L126.0,525.5 L95.0,541.5 L64.0,525.5 L64.0,488.5Z M157.0,472.5 L188.0,488.5 L188.0,525.5 L157.0,541.5 L126.0,525.5 L126.0,488.5Z M219.0,472.5 L250.0,488.5 L250.0,525.5 L219.0,541.5 L188.0,525.5 L188.0,488.5Z M281.0,472.5 L312.0,488.5 L312.0,525.5 L281.0,541.5 L250.0,525.5 L250.0,488.5Z M343.0,472.5 L374.0,488.5 L374.0,525.5 L343.0,541.5 L312.0,525.5 L312.0,488.5Z M405.0,472.5 L436.0,488.5 L436.0,525.5 L405.0,541.5 L374.0,525.5 L374.0,488.5Z M467.0,472.5 L498.0,488.5 L498.0,525.5 L467.0,541.5 L436.0,525.5 L436.0,488.5Z M529.0,472.5 L560.0,488.5 L560.0,525.5 L529.0,541.5 L498.0,525.5 L498.0,488.5Z M591.0,472.5 L622.0,488.5 L622.0,525.5 L591.0,541.5 L560.0,525.5 L560.0,488.5Z M653.0,472.5 L684.0,488.5 L684.0,525.5 L653.0,541.5 L622.0,525.5 L622.0,488.5Z M715.0,472.5 L746.0,488.5 L746.0,525.5 L715.0,541.5 L684.0,525.5 L684.0,488.5Z M777.0,472.5 L808.0,488.5 L808.0,525.5 L777.0,541.5 L746.0,525.5 L746.0,488.5Z M839.0,472.5 L870.0,488.5 L870.0,525.5 L839.0,541.5 L808.0,525.5 L808.0,488.5Z M901.0,472.5 L932.0,488.5 L932.0,525.5 L901.0,541.5 L870.0,525.5 L870.0,488.5Z M963.0,472.5 L994.0,488.5 L994.0,525.5 L963.0,541.5 L932.0,525.5 L932.0,488.5Z M1025.0,472.5 L1056.0,488.5 L1056.0,525.5 L1025.0,541.5 L994.0,525.5 L994.0,488.5Z M64.0,525.5 L95.0,541.5 L95.0,578.5 L64.0,594.5 L33.0,578.5 L33.0,541.5Z M126.0,525.5 L157.0,541.5 L157.0,578.5 L126.0,594.5 L95.0,578.5 L95.0,541.5Z M188.0,525.5 L219.0,541.5 L219.0,578.5 L188.0,594.5 L157.0,578.5 L157.0,541.5Z M250.0,525.5 L281.0,541.5 L281.0,578.5 L250.0,594.5 L219.0,578.5 L219.0,541.5Z M312.0,525.5 L343.0,541.5 L343.0,578.5 L312.0,594.5 L281.0,578.5 L281.0,541.5Z M374.0,525.5 L405.0,541.5 L405.0,578.5 L374.0,594.5 L343.0,578.5 L343.0,541.5Z M436.0,525.5 L467.0,541.5 L467.0,578.5 L436.0,594.5 L405.0,578.5 L405.0,541.5Z M498.0,525.5 L529.0,541.5 L529.0,578.5 L498.0,594.5 L467.0,578.5 L467.0,541.5Z M560.0,525.5 L591.0,541.5 L591.0,578.5 L560.0,594.5 L529.0,578.5 L529.0,541.5Z M622.0,525.5 L653.0,541.5 L653.0,578.5 L622.0,594.5 L591.0,578.5 L591.0,541.5Z M684.0,525.5 L715.0,541.5 L715.0,578.5 L684.0,594.5 L653.0,578.5 L653.0,541.5Z M746.0,525.5 L777.0,541.5 L777.0,578.5 L746.0,594.5 L715.0,578.5 L715.0,541.5Z M808.0,525.5 L839.0,541.5 L839.0,578.5 L808.0,594.5 L777.0,578.5 L777.0,541.5Z M870.0,525.5 L901.0,541.5 L901.0,578.5 L870.0,594.5 L839.0,578.5 L839.0,541.5Z M932.0,525.5 L963.0,541.5 L963.0,578.5 L932.0,594.5 L901.0,578.5 L901.0,541.5Z M994.0,525.5 L1025.0,541.5 L1025.0,578.5 L994.0,594.5 L963.0,578.5 L963.0,541.5Z M1056.0,525.5 L1087.0,541.5 L1087.0,578.5 L1056.0,594.5 L1025.0,578.5 L1025.0,541.5Z M1213.0,148.5 L1244.0,164.5 L1244.0,201.5 L1213.0,217.5 L1182.0,201.5 L1182.0,164.5Z" fill="#6a5020" filter="url(#tex3)" opacity="0.35"/>
<rect x="1212" y="182" width="2" height="2" fill="#fff"/>
<path d="M975,48 L994,65 L994,100 L985,92 Q970,80 972,60Z" fill="#7f9a46"/>
<g clip-path="url(#mclip)">
<circle cx="1076" cy="326" r="5" fill="#8a9a48"/>
<circle cx="1085" cy="338" r="4" fill="#8a9a48"/>
<circle cx="1086" cy="352" r="4" fill="#8a9a48"/>
<circle cx="1084" cy="363" r="3" fill="#8a9a48"/>
<circle cx="1086" cy="446" r="4" fill="#8a9a48"/>
<circle cx="1085" cy="462" r="4" fill="#8a9a48"/>
<circle cx="1081" cy="474" r="5" fill="#8a9a48"/>
<circle cx="1068" cy="484" r="6" fill="#8a9a48"/>
<circle cx="1060" cy="488" r="4" fill="#8a9a48"/>
<g fill="none" stroke-linecap="round" stroke-linejoin="round">
<path d="M45,102 L112,232 Q120,242 132,242 L240,242 Q258,242 266,226 L300,158 L334,60" stroke="#6f6a48" stroke-width="13"/>
<path d="M118,245 L103,279 L81,313 L56,354 Q38,385 34,400 Q33,418 50,435 L75,480 Q88,505 110,506 L135,505 Q155,505 168,530 L200,595" stroke="#6f6a48" stroke-width="13"/>
<path d="M1062,535 Q1068,560 1064,590" stroke="#6f6a48" stroke-width="13"/>
<path d="M45,102 L112,232 Q120,242 132,242 L240,242 Q258,242 266,226 L300,158 L334,60" stroke="#b09c78" stroke-width="11"/>
<path d="M118,245 L103,279 L81,313 L56,354 Q38,385 34,400 Q33,418 50,435 L75,480 Q88,505 110,506 L135,505 Q155,505 168,530 L200,595" stroke="#b09c78" stroke-width="11"/>
<path d="M1062,535 Q1068,560 1064,590" stroke="#b09c78" stroke-width="11"/>
<path d="M2,75 L21,75 L12,61 L24,54 L36,70 L44,88 L52,102 L60,120 L44,120 L34,102 L24,92 L2,90Z" fill="#b09c78"/>
</g>
<polygon points="44.2,60.0 42.6,61.1 43.6,62.7 41.7,63.0 41.9,64.9 40.1,64.3 39.4,66.1 38.0,64.8 36.6,66.1 35.9,64.3 34.1,64.9 34.3,63.0 32.4,62.7 33.4,61.1 31.8,60.0 33.4,58.9 32.4,57.3 34.3,57.0 34.1,55.1 35.9,55.7 36.6,53.9 38.0,55.2 39.4,53.9 40.1,55.7 41.9,55.1 41.7,57.0 43.6,57.3 42.6,58.9" fill="#b87420"/>
<circle cx="38" cy="60" r="3.5" fill="#dc9a30"/>
<circle cx="38.2" cy="60.2" r="2.4" fill="#5a2c08"/>
<circle cx="38.8" cy="60.6" r="1.1" fill="#e8a838"/>
<polygon points="24.6,70.4 22.3,71.9 23.7,74.2 21.0,74.5 21.3,77.2 18.7,76.4 17.7,78.9 15.8,77.1 13.9,78.9 12.9,76.4 10.3,77.2 10.6,74.5 7.9,74.2 9.3,71.9 7.1,70.4 9.3,68.9 7.9,66.6 10.6,66.3 10.3,63.6 12.9,64.4 13.9,61.9 15.8,63.8 17.7,61.9 18.7,64.4 21.3,63.6 21.0,66.3 23.7,66.6 22.3,68.9" fill="#b87420"/>
<circle cx="15.8" cy="70.4" r="4.9" fill="#dc9a30"/>
<circle cx="16.2" cy="70.8" r="3.4" fill="#5a2c08"/>
<circle cx="16.9" cy="71.2" r="1.5" fill="#e8a838"/>
<polygon points="54.8,74.3 52.2,76.0 53.8,78.6 50.7,79.0 51.0,82.1 48.1,81.1 47.0,84.0 44.8,81.9 42.6,84.0 41.5,81.1 38.6,82.1 38.9,79.0 35.8,78.6 37.4,76.0 34.8,74.3 37.4,72.6 35.8,70.0 38.9,69.6 38.6,66.5 41.5,67.5 42.6,64.6 44.8,66.7 47.0,64.6 48.1,67.5 51.0,66.5 50.7,69.6 53.8,70.0 52.2,72.6" fill="#b87420"/>
<circle cx="44.8" cy="74.3" r="5.6" fill="#dc9a30"/>
<circle cx="45.2" cy="74.7" r="3.8" fill="#5a2c08"/>
<circle cx="46.0" cy="75.3" r="1.8" fill="#e8a838"/>
<polygon points="64.7,79.6 63.0,80.7 64.0,82.3 62.1,82.6 62.3,84.5 60.5,83.9 59.8,85.7 58.4,84.3 57.0,85.7 56.3,83.9 54.5,84.5 54.7,82.6 52.8,82.3 53.8,80.7 52.1,79.6 53.8,78.5 52.8,76.9 54.7,76.6 54.5,74.7 56.3,75.3 57.0,73.5 58.4,74.8 59.8,73.5 60.5,75.3 62.3,74.7 62.1,76.6 64.0,76.9 63.0,78.5" fill="#b87420"/>
<circle cx="58.4" cy="79.6" r="3.5" fill="#dc9a30"/>
<circle cx="58.6" cy="79.8" r="2.4" fill="#5a2c08"/>
<circle cx="59.1" cy="80.2" r="1.1" fill="#e8a838"/>
<polygon points="34.9,87.0 33.2,88.1 34.2,89.7 32.3,90.0 32.5,91.9 30.7,91.3 30.0,93.1 28.6,91.8 27.2,93.1 26.5,91.3 24.7,91.9 24.9,90.0 23.0,89.7 24.0,88.1 22.4,87.0 24.0,85.9 23.0,84.3 24.9,84.0 24.7,82.1 26.5,82.7 27.2,80.9 28.6,82.2 30.0,80.9 30.7,82.7 32.5,82.1 32.3,84.0 34.2,84.3 33.2,85.9" fill="#b87420"/>
<circle cx="28.6" cy="87" r="3.5" fill="#dc9a30"/>
<circle cx="28.9" cy="87.2" r="2.4" fill="#5a2c08"/>
<circle cx="29.4" cy="87.6" r="1.1" fill="#e8a838"/>
<polygon points="62.1,92.3 59.6,93.9 61.1,96.4 58.3,96.7 58.5,99.6 55.8,98.7 54.8,101.4 52.7,99.4 50.6,101.4 49.6,98.7 46.9,99.6 47.1,96.7 44.3,96.4 45.8,93.9 43.3,92.3 45.8,90.7 44.3,88.2 47.1,87.9 46.9,85.0 49.6,85.9 50.6,83.2 52.7,85.2 54.8,83.2 55.8,85.9 58.5,85.0 58.3,87.9 61.1,88.2 59.6,90.7" fill="#b87420"/>
<circle cx="52.7" cy="92.3" r="5.2" fill="#dc9a30"/>
<circle cx="53.1" cy="92.7" r="3.6" fill="#5a2c08"/>
<circle cx="53.8" cy="93.2" r="1.6" fill="#e8a838"/>
<polygon points="19.9,94.0 17.4,95.6 18.9,98.1 16.1,98.4 16.3,101.3 13.6,100.4 12.6,103.1 10.5,101.1 8.4,103.1 7.4,100.4 4.7,101.3 4.9,98.4 2.1,98.1 3.6,95.6 1.1,94.0 3.6,92.4 2.1,89.9 4.9,89.6 4.7,86.7 7.4,87.6 8.4,84.9 10.5,86.9 12.6,84.9 13.6,87.6 16.3,86.7 16.1,89.6 18.9,89.9 17.4,92.4" fill="#b87420"/>
<circle cx="10.5" cy="94" r="5.2" fill="#dc9a30"/>
<circle cx="10.9" cy="94.4" r="3.6" fill="#5a2c08"/>
<circle cx="11.6" cy="94.9" r="1.6" fill="#e8a838"/>
<polygon points="41.6,100.0 39.0,101.7 40.6,104.3 37.5,104.7 37.8,107.8 34.9,106.8 33.8,109.7 31.6,107.6 29.4,109.7 28.3,106.8 25.4,107.8 25.7,104.7 22.6,104.3 24.2,101.7 21.6,100.0 24.2,98.3 22.6,95.7 25.7,95.3 25.4,92.2 28.3,93.2 29.4,90.3 31.6,92.4 33.8,90.3 34.9,93.2 37.8,92.2 37.5,95.3 40.6,95.7 39.0,98.3" fill="#b87420"/>
<circle cx="31.6" cy="100" r="5.6" fill="#dc9a30"/>
<circle cx="32.0" cy="100.4" r="3.8" fill="#5a2c08"/>
<circle cx="32.8" cy="101.0" r="1.8" fill="#e8a838"/>
<polygon points="147.6,495.0 145.5,496.4 146.8,498.5 144.3,498.9 144.6,501.4 142.2,500.6 141.3,502.9 139.5,501.2 137.7,502.9 136.8,500.6 134.4,501.4 134.7,498.9 132.2,498.5 133.5,496.4 131.4,495.0 133.5,493.6 132.2,491.5 134.7,491.1 134.4,488.6 136.8,489.4 137.7,487.1 139.5,488.8 141.3,487.1 142.2,489.4 144.6,488.6 144.3,491.1 146.8,491.5 145.5,493.6" fill="#b87420"/>
<circle cx="139.5" cy="495" r="4.5" fill="#dc9a30"/>
<circle cx="139.8" cy="495.3" r="3.1" fill="#5a2c08"/>
<circle cx="140.5" cy="495.8" r="1.4" fill="#e8a838"/>
<polygon points="175.7,498.0 173.6,499.4 174.9,501.5 172.4,501.9 172.7,504.4 170.3,503.6 169.4,505.9 167.6,504.2 165.8,505.9 164.9,503.6 162.5,504.4 162.8,501.9 160.3,501.5 161.6,499.4 159.5,498.0 161.6,496.6 160.3,494.5 162.8,494.1 162.5,491.6 164.9,492.4 165.8,490.1 167.6,491.8 169.4,490.1 170.3,492.4 172.7,491.6 172.4,494.1 174.9,494.5 173.6,496.6" fill="#b87420"/>
<circle cx="167.6" cy="498" r="4.5" fill="#dc9a30"/>
<circle cx="167.9" cy="498.3" r="3.1" fill="#5a2c08"/>
<circle cx="168.6" cy="498.8" r="1.4" fill="#e8a838"/>
<polygon points="167.6,484.0 166.2,485.0 167.1,486.4 165.3,486.7 165.5,488.4 163.9,487.9 163.3,489.5 162.0,488.3 160.7,489.5 160.1,487.9 158.5,488.4 158.7,486.7 156.9,486.4 157.8,485.0 156.4,484.0 157.8,483.0 156.9,481.6 158.7,481.3 158.5,479.6 160.1,480.1 160.7,478.5 162.0,479.7 163.3,478.5 163.9,480.1 165.5,479.6 165.3,481.3 167.1,481.6 166.2,483.0" fill="#b87420"/>
<circle cx="162" cy="484" r="3.1" fill="#dc9a30"/>
<circle cx="162.2" cy="484.2" r="2.2" fill="#5a2c08"/>
<circle cx="162.7" cy="484.5" r="1.0" fill="#e8a838"/>
<polygon points="187.6,503.0 186.2,504.0 187.1,505.4 185.3,505.7 185.5,507.4 183.9,506.9 183.3,508.5 182.0,507.3 180.7,508.5 180.1,506.9 178.5,507.4 178.7,505.7 176.9,505.4 177.8,504.0 176.4,503.0 177.8,502.0 176.9,500.6 178.7,500.3 178.5,498.6 180.1,499.1 180.7,497.5 182.0,498.7 183.3,497.5 183.9,499.1 185.5,498.6 185.3,500.3 187.1,500.6 186.2,502.0" fill="#b87420"/>
<circle cx="182" cy="503" r="3.1" fill="#dc9a30"/>
<circle cx="182.2" cy="503.2" r="2.2" fill="#5a2c08"/>
<circle cx="182.7" cy="503.5" r="1.0" fill="#e8a838"/>
<polygon points="141.1,517.5 139.0,518.9 140.3,521.0 137.8,521.4 138.1,523.9 135.7,523.1 134.8,525.4 133.0,523.7 131.2,525.4 130.3,523.1 127.9,523.9 128.2,521.4 125.7,521.0 127.0,518.9 124.9,517.5 127.0,516.1 125.7,514.0 128.2,513.6 127.9,511.1 130.3,511.9 131.2,509.6 133.0,511.3 134.8,509.6 135.7,511.9 138.1,511.1 137.8,513.6 140.3,514.0 139.0,516.1" fill="#b87420"/>
<circle cx="133" cy="517.5" r="4.5" fill="#dc9a30"/>
<circle cx="133.3" cy="517.8" r="3.1" fill="#5a2c08"/>
<circle cx="134.0" cy="518.3" r="1.4" fill="#e8a838"/>
<polygon points="157.6,512.0 156.2,513.0 157.1,514.4 155.3,514.7 155.5,516.4 153.9,515.9 153.3,517.5 152.0,516.3 150.7,517.5 150.1,515.9 148.5,516.4 148.7,514.7 146.9,514.4 147.8,513.0 146.4,512.0 147.8,511.0 146.9,509.6 148.7,509.3 148.5,507.6 150.1,508.1 150.7,506.5 152.0,507.7 153.3,506.5 153.9,508.1 155.5,507.6 155.3,509.3 157.1,509.6 156.2,511.0" fill="#b87420"/>
<circle cx="152" cy="512" r="3.1" fill="#dc9a30"/>
<circle cx="152.2" cy="512.2" r="2.2" fill="#5a2c08"/>
<circle cx="152.7" cy="512.5" r="1.0" fill="#e8a838"/>
<polygon points="184.1,516.0 182.0,517.4 183.3,519.5 180.8,519.9 181.1,522.4 178.7,521.6 177.8,523.9 176.0,522.2 174.2,523.9 173.3,521.6 170.9,522.4 171.2,519.9 168.7,519.5 170.0,517.4 167.9,516.0 170.0,514.6 168.7,512.5 171.2,512.1 170.9,509.6 173.3,510.4 174.2,508.1 176.0,509.8 177.8,508.1 178.7,510.4 181.1,509.6 180.8,512.1 183.3,512.5 182.0,514.6" fill="#b87420"/>
<circle cx="176" cy="516" r="4.5" fill="#dc9a30"/>
<circle cx="176.3" cy="516.3" r="3.1" fill="#5a2c08"/>
<circle cx="177.0" cy="516.8" r="1.4" fill="#e8a838"/>
<polygon points="167.2,527.0 164.3,528.9 166.1,531.9 162.7,532.3 163.0,535.8 159.7,534.7 158.5,538.0 156.0,535.5 153.5,538.0 152.3,534.7 149.0,535.8 149.3,532.3 145.9,531.9 147.7,528.9 144.8,527.0 147.7,525.1 145.9,522.1 149.3,521.7 149.0,518.2 152.3,519.3 153.5,516.0 156.0,518.5 158.5,516.0 159.7,519.3 163.0,518.2 162.7,521.7 166.1,522.1 164.3,525.1" fill="#b87420"/>
<circle cx="156" cy="527" r="6.3" fill="#dc9a30"/>
<circle cx="156.4" cy="527.5" r="4.3" fill="#5a2c08"/>
<circle cx="157.3" cy="528.1" r="2.0" fill="#e8a838"/>
<polygon points="198.6,537.0 197.2,538.0 198.1,539.4 196.3,539.7 196.5,541.4 194.9,540.9 194.3,542.5 193.0,541.3 191.7,542.5 191.1,540.9 189.5,541.4 189.7,539.7 187.9,539.4 188.8,538.0 187.4,537.0 188.8,536.0 187.9,534.6 189.7,534.3 189.5,532.6 191.1,533.1 191.7,531.5 193.0,532.7 194.3,531.5 194.9,533.1 196.5,532.6 196.3,534.3 198.1,534.6 197.2,536.0" fill="#b87420"/>
<circle cx="193" cy="537" r="3.1" fill="#dc9a30"/>
<circle cx="193.2" cy="537.2" r="2.2" fill="#5a2c08"/>
<circle cx="193.7" cy="537.5" r="1.0" fill="#e8a838"/>
<polygon points="178.7,547.5 176.6,548.9 177.9,551.0 175.4,551.4 175.7,553.9 173.3,553.1 172.4,555.4 170.6,553.7 168.8,555.4 167.9,553.1 165.5,553.9 165.8,551.4 163.3,551.0 164.6,548.9 162.5,547.5 164.6,546.1 163.3,544.0 165.8,543.6 165.5,541.1 167.9,541.9 168.8,539.6 170.6,541.3 172.4,539.6 173.3,541.9 175.7,541.1 175.4,543.6 177.9,544.0 176.6,546.1" fill="#b87420"/>
<circle cx="170.6" cy="547.5" r="4.5" fill="#dc9a30"/>
<circle cx="170.9" cy="547.8" r="3.1" fill="#5a2c08"/>
<circle cx="171.6" cy="548.3" r="1.4" fill="#e8a838"/>
<polygon points="206.8,550.5 204.7,551.9 206.0,554.0 203.5,554.4 203.8,556.9 201.4,556.1 200.5,558.4 198.7,556.7 196.9,558.4 196.0,556.1 193.6,556.9 193.9,554.4 191.4,554.0 192.7,551.9 190.6,550.5 192.7,549.1 191.4,547.0 193.9,546.6 193.6,544.1 196.0,544.9 196.9,542.6 198.7,544.3 200.5,542.6 201.4,544.9 203.8,544.1 203.5,546.6 206.0,547.0 204.7,549.1" fill="#b87420"/>
<circle cx="198.7" cy="550.5" r="4.5" fill="#dc9a30"/>
<circle cx="199.0" cy="550.8" r="3.1" fill="#5a2c08"/>
<circle cx="199.7" cy="551.3" r="1.4" fill="#e8a838"/>
<polygon points="218.6,557.0 217.2,558.0 218.1,559.4 216.3,559.7 216.5,561.4 214.9,560.9 214.3,562.5 213.0,561.3 211.7,562.5 211.1,560.9 209.5,561.4 209.7,559.7 207.9,559.4 208.8,558.0 207.4,557.0 208.8,556.0 207.9,554.6 209.7,554.3 209.5,552.6 211.1,553.1 211.7,551.5 213.0,552.7 214.3,551.5 214.9,553.1 216.5,552.6 216.3,554.3 218.1,554.6 217.2,556.0" fill="#b87420"/>
<circle cx="213" cy="557" r="3.1" fill="#dc9a30"/>
<circle cx="213.2" cy="557.2" r="2.2" fill="#5a2c08"/>
<circle cx="213.7" cy="557.5" r="1.0" fill="#e8a838"/>
<polygon points="188.6,564.0 187.2,565.0 188.1,566.4 186.3,566.7 186.5,568.4 184.9,567.9 184.3,569.5 183.0,568.3 181.7,569.5 181.1,567.9 179.5,568.4 179.7,566.7 177.9,566.4 178.8,565.0 177.4,564.0 178.8,563.0 177.9,561.6 179.7,561.3 179.5,559.6 181.1,560.1 181.7,558.5 183.0,559.7 184.3,558.5 184.9,560.1 186.5,559.6 186.3,561.3 188.1,561.6 187.2,563.0" fill="#b87420"/>
<circle cx="183" cy="564" r="3.1" fill="#dc9a30"/>
<circle cx="183.2" cy="564.2" r="2.2" fill="#5a2c08"/>
<circle cx="183.7" cy="564.5" r="1.0" fill="#e8a838"/>
<polygon points="215.1,569.0 213.0,570.4 214.3,572.5 211.8,572.9 212.1,575.4 209.7,574.6 208.8,576.9 207.0,575.2 205.2,576.9 204.3,574.6 201.9,575.4 202.2,572.9 199.7,572.5 201.0,570.4 198.9,569.0 201.0,567.6 199.7,565.5 202.2,565.1 201.9,562.6 204.3,563.4 205.2,561.1 207.0,562.8 208.8,561.1 209.7,563.4 212.1,562.6 211.8,565.1 214.3,565.5 213.0,567.6" fill="#b87420"/>
<circle cx="207" cy="569" r="4.5" fill="#dc9a30"/>
<circle cx="207.3" cy="569.3" r="3.1" fill="#5a2c08"/>
<circle cx="208.0" cy="569.8" r="1.4" fill="#e8a838"/>
<polygon points="172.8,571.0 170.5,572.5 171.9,574.8 169.2,575.1 169.5,577.8 166.9,577.0 165.9,579.5 164.0,577.6 162.1,579.5 161.1,577.0 158.5,577.8 158.8,575.1 156.1,574.8 157.5,572.5 155.2,571.0 157.5,569.5 156.1,567.2 158.8,566.9 158.5,564.2 161.1,565.0 162.1,562.5 164.0,564.4 165.9,562.5 166.9,565.0 169.5,564.2 169.2,566.9 171.9,567.2 170.5,569.5" fill="#b87420"/>
<circle cx="164" cy="571" r="4.9" fill="#dc9a30"/>
<circle cx="164.3" cy="571.4" r="3.4" fill="#5a2c08"/>
<circle cx="165.1" cy="571.8" r="1.5" fill="#e8a838"/>
<polygon points="198.8,579.0 195.8,580.9 197.6,583.9 194.2,584.3 194.5,587.8 191.2,586.7 190.0,590.0 187.5,587.5 185.0,590.0 183.8,586.7 180.5,587.8 180.8,584.3 177.4,583.9 179.2,580.9 176.2,579.0 179.2,577.1 177.4,574.1 180.8,573.7 180.5,570.2 183.8,571.3 185.0,568.0 187.5,570.5 190.0,568.0 191.2,571.3 194.5,570.2 194.2,573.7 197.6,574.1 195.8,577.1" fill="#b87420"/>
<circle cx="187.5" cy="579" r="6.3" fill="#dc9a30"/>
<circle cx="187.9" cy="579.5" r="4.3" fill="#5a2c08"/>
<circle cx="188.8" cy="580.1" r="2.0" fill="#e8a838"/>
<rect x="23" y="62" width="1.5" height="2" fill="#1a0e04" opacity="0.8"/>
<rect x="41" y="57" width="1.5" height="2" fill="#1a0e04" opacity="0.8"/>
<rect x="35" y="75" width="1.5" height="2" fill="#1a0e04" opacity="0.8"/>
<rect x="8" y="83" width="1.5" height="2" fill="#1a0e04" opacity="0.8"/>
<rect x="7" y="79" width="1.5" height="2" fill="#1a0e04" opacity="0.8"/>
<rect x="29" y="103" width="1.5" height="2" fill="#1a0e04" opacity="0.8"/>
<rect x="12" y="66" width="1.5" height="2" fill="#1a0e04" opacity="0.8"/>
<rect x="40" y="110" width="1.5" height="2" fill="#1a0e04" opacity="0.8"/>
<rect x="37" y="77" width="1.5" height="2" fill="#1a0e04" opacity="0.8"/>
<rect x="53" y="70" width="1.5" height="2" fill="#1a0e04" opacity="0.8"/>
<rect x="13" y="60" width="1.5" height="2" fill="#1a0e04" opacity="0.8"/>
<rect x="22" y="102" width="1.5" height="2" fill="#1a0e04" opacity="0.8"/>
<rect x="15" y="88" width="1.5" height="2" fill="#1a0e04" opacity="0.8"/>
<rect x="41" y="75" width="1.5" height="2" fill="#1a0e04" opacity="0.8"/>
<rect x="36" y="57" width="1.5" height="2" fill="#1a0e04" opacity="0.8"/>
<rect x="8" y="65" width="1.5" height="2" fill="#1a0e04" opacity="0.8"/>
<rect x="43" y="79" width="1.5" height="2" fill="#1a0e04" opacity="0.8"/>
<rect x="23" y="88" width="1.5" height="2" fill="#1a0e04" opacity="0.8"/>
<rect x="30" y="71" width="1.5" height="2" fill="#1a0e04" opacity="0.8"/>
<rect x="49" y="95" width="1.5" height="2" fill="#1a0e04" opacity="0.8"/>
<rect x="19" y="87" width="1.5" height="2" fill="#1a0e04" opacity="0.8"/>
<rect x="34" y="106" width="1.5" height="2" fill="#1a0e04" opacity="0.8"/>
<rect x="46" y="70" width="1.5" height="2" fill="#1a0e04" opacity="0.8"/>
<rect x="28" y="98" width="1.5" height="2" fill="#1a0e04" opacity="0.8"/>
<rect x="14" y="82" width="1.5" height="2" fill="#1a0e04" opacity="0.8"/>
<rect x="7" y="93" width="1.5" height="2" fill="#1a0e04" opacity="0.8"/>
<rect x="48" y="87" width="1.5" height="2" fill="#1a0e04" opacity="0.8"/>
<rect x="54" y="72" width="1.5" height="2" fill="#1a0e04" opacity="0.8"/>
<rect x="44" y="89" width="1.5" height="2" fill="#1a0e04" opacity="0.8"/>
<rect x="37" y="80" width="1.5" height="2" fill="#1a0e04" opacity="0.8"/>
<rect x="32" y="93" width="1.5" height="2" fill="#1a0e04" opacity="0.8"/>
<rect x="8" y="95" width="1.5" height="2" fill="#1a0e04" opacity="0.8"/>
<rect x="51" y="70" width="1.5" height="2" fill="#1a0e04" opacity="0.8"/>
<rect x="27" y="93" width="1.5" height="2" fill="#1a0e04" opacity="0.8"/>
<rect x="6" y="81" width="1.5" height="2" fill="#1a0e04" opacity="0.8"/>
<rect x="14" y="60" width="1.5" height="2" fill="#1a0e04" opacity="0.8"/>
<rect x="8" y="99" width="1.5" height="2" fill="#1a0e04" opacity="0.8"/>
<rect x="12" y="68" width="1.5" height="2" fill="#1a0e04" opacity="0.8"/>
<rect x="27" y="105" width="1.5" height="2" fill="#1a0e04" opacity="0.8"/>
<rect x="10" y="80" width="1.5" height="2" fill="#1a0e04" opacity="0.8"/>
<rect x="160" y="530" width="1.5" height="2" fill="#1a0e04" opacity="0.8"/>
<rect x="175" y="529" width="1.5" height="2" fill="#1a0e04" opacity="0.8"/>
<rect x="145" y="502" width="1.5" height="2" fill="#1a0e04" opacity="0.8"/>
<rect x="149" y="530" width="1.5" height="2" fill="#1a0e04" opacity="0.8"/>
<rect x="139" y="491" width="1.5" height="2" fill="#1a0e04" opacity="0.8"/>
<rect x="142" y="506" width="1.5" height="2" fill="#1a0e04" opacity="0.8"/>
<rect x="162" y="493" width="1.5" height="2" fill="#1a0e04" opacity="0.8"/>
<rect x="129" y="502" width="1.5" height="2" fill="#1a0e04" opacity="0.8"/>
<rect x="150" y="511" width="1.5" height="2" fill="#1a0e04" opacity="0.8"/>
<rect x="182" y="518" width="1.5" height="2" fill="#1a0e04" opacity="0.8"/>
<rect x="158" y="514" width="1.5" height="2" fill="#1a0e04" opacity="0.8"/>
<rect x="167" y="480" width="1.5" height="2" fill="#1a0e04" opacity="0.8"/>
<rect x="179" y="524" width="1.5" height="2" fill="#1a0e04" opacity="0.8"/>
<rect x="178" y="525" width="1.5" height="2" fill="#1a0e04" opacity="0.8"/>
<rect x="151" y="501" width="1.5" height="2" fill="#1a0e04" opacity="0.8"/>
<rect x="135" y="515" width="1.5" height="2" fill="#1a0e04" opacity="0.8"/>
<rect x="141" y="487" width="1.5" height="2" fill="#1a0e04" opacity="0.8"/>
<rect x="148" y="480" width="1.5" height="2" fill="#1a0e04" opacity="0.8"/>
<rect x="135" y="499" width="1.5" height="2" fill="#1a0e04" opacity="0.8"/>
<rect x="163" y="486" width="1.5" height="2" fill="#1a0e04" opacity="0.8"/>
<rect x="143" y="498" width="1.5" height="2" fill="#1a0e04" opacity="0.8"/>
<rect x="149" y="484" width="1.5" height="2" fill="#1a0e04" opacity="0.8"/>
<rect x="155" y="506" width="1.5" height="2" fill="#1a0e04" opacity="0.8"/>
<rect x="148" y="493" width="1.5" height="2" fill="#1a0e04" opacity="0.8"/>
<rect x="175" y="487" width="1.5" height="2" fill="#1a0e04" opacity="0.8"/>
<rect x="159" y="486" width="1.5" height="2" fill="#1a0e04" opacity="0.8"/>
<rect x="159" y="479" width="1.5" height="2" fill="#1a0e04" opacity="0.8"/>
<rect x="159" y="536" width="1.5" height="2" fill="#1a0e04" opacity="0.8"/>
<rect x="177" y="519" width="1.5" height="2" fill="#1a0e04" opacity="0.8"/>
<rect x="144" y="499" width="1.5" height="2" fill="#1a0e04" opacity="0.8"/>
<rect x="138" y="523" width="1.5" height="2" fill="#1a0e04" opacity="0.8"/>
<rect x="159" y="524" width="1.5" height="2" fill="#1a0e04" opacity="0.8"/>
<rect x="147" y="490" width="1.5" height="2" fill="#1a0e04" opacity="0.8"/>
<rect x="177" y="525" width="1.5" height="2" fill="#1a0e04" opacity="0.8"/>
<rect x="175" y="521" width="1.5" height="2" fill="#1a0e04" opacity="0.8"/>
<rect x="142" y="508" width="1.5" height="2" fill="#1a0e04" opacity="0.8"/>
<rect x="149" y="479" width="1.5" height="2" fill="#1a0e04" opacity="0.8"/>
<rect x="162" y="547" width="1.5" height="2" fill="#1a0e04" opacity="0.8"/>
<rect x="175" y="572" width="1.5" height="2" fill="#1a0e04" opacity="0.8"/>
<rect x="214" y="557" width="1.5" height="2" fill="#1a0e04" opacity="0.8"/>
<rect x="213" y="552" width="1.5" height="2" fill="#1a0e04" opacity="0.8"/>
<rect x="172" y="544" width="1.5" height="2" fill="#1a0e04" opacity="0.8"/>
<rect x="171" y="542" width="1.5" height="2" fill="#1a0e04" opacity="0.8"/>
<rect x="195" y="584" width="1.5" height="2" fill="#1a0e04" opacity="0.8"/>
<rect x="207" y="559" width="1.5" height="2" fill="#1a0e04" opacity="0.8"/>
<rect x="197" y="578" width="1.5" height="2" fill="#1a0e04" opacity="0.8"/>
<rect x="165" y="570" width="1.5" height="2" fill="#1a0e04" opacity="0.8"/>
<rect x="211" y="577" width="1.5" height="2" fill="#1a0e04" opacity="0.8"/>
<rect x="202" y="559" width="1.5" height="2" fill="#1a0e04" opacity="0.8"/>
<rect x="170" y="577" width="1.5" height="2" fill="#1a0e04" opacity="0.8"/>
<rect x="179" y="578" width="1.5" height="2" fill="#1a0e04" opacity="0.8"/>
<rect x="214" y="554" width="1.5" height="2" fill="#1a0e04" opacity="0.8"/>
<rect x="182" y="587" width="1.5" height="2" fill="#1a0e04" opacity="0.8"/>
<rect x="201" y="540" width="1.5" height="2" fill="#1a0e04" opacity="0.8"/>
<rect x="167" y="539" width="1.5" height="2" fill="#1a0e04" opacity="0.8"/>
<rect x="211" y="578" width="1.5" height="2" fill="#1a0e04" opacity="0.8"/>
<rect x="168" y="580" width="1.5" height="2" fill="#1a0e04" opacity="0.8"/>
<rect x="215" y="569" width="1.5" height="2" fill="#1a0e04" opacity="0.8"/>
<rect x="180" y="563" width="1.5" height="2" fill="#1a0e04" opacity="0.8"/>
<rect x="214" y="569" width="1.5" height="2" fill="#1a0e04" opacity="0.8"/>
<rect x="189" y="586" width="1.5" height="2" fill="#1a0e04" opacity="0.8"/>
<rect x="184" y="582" width="1.5" height="2" fill="#1a0e04" opacity="0.8"/>
<rect x="206" y="543" width="1.5" height="2" fill="#1a0e04" opacity="0.8"/>
<rect x="174" y="548" width="1.5" height="2" fill="#1a0e04" opacity="0.8"/>
<rect x="173" y="565" width="1.5" height="2" fill="#1a0e04" opacity="0.8"/>
<rect x="175" y="555" width="1.5" height="2" fill="#1a0e04" opacity="0.8"/>
<rect x="180" y="557" width="1.5" height="2" fill="#1a0e04" opacity="0.8"/>
<rect x="193" y="584" width="1.5" height="2" fill="#1a0e04" opacity="0.8"/>
<rect x="184" y="585" width="1.5" height="2" fill="#1a0e04" opacity="0.8"/>
<rect x="188" y="562" width="1.5" height="2" fill="#1a0e04" opacity="0.8"/>
<rect x="189" y="531" width="1.5" height="2" fill="#1a0e04" opacity="0.8"/>
<rect x="185" y="541" width="1.5" height="2" fill="#1a0e04" opacity="0.8"/>
<rect x="160" y="578" width="1.5" height="2" fill="#1a0e04" opacity="0.8"/>
<rect x="170" y="558" width="1.5" height="2" fill="#1a0e04" opacity="0.8"/>
<rect x="201" y="563" width="1.5" height="2" fill="#1a0e04" opacity="0.8"/>
<rect x="178" y="561" width="1.5" height="2" fill="#1a0e04" opacity="0.8"/>
<rect x="191" y="577" width="1.5" height="2" fill="#1a0e04" opacity="0.8"/>
<rect x="166" y="564" width="1.5" height="2" fill="#1a0e04" opacity="0.8"/>
<rect x="174" y="547" width="1.5" height="2" fill="#1a0e04" opacity="0.8"/>
<circle cx="174.5" cy="84.7" r="3.5" fill="#203010" opacity="0.45"/><circle cx="173.3" cy="83.5" r="3.5" fill="url(#tree)"/>
<circle cx="161.9" cy="99.8" r="3.5" fill="#203010" opacity="0.45"/><circle cx="160.7" cy="98.6" r="3.5" fill="url(#tree)"/>
<circle cx="182.9" cy="80.8" r="2.9" fill="#203010" opacity="0.45"/><circle cx="181.7" cy="79.6" r="2.9" fill="url(#tree)"/>
<circle cx="165.0" cy="84.5" r="3.8" fill="#203010" opacity="0.45"/><circle cx="163.8" cy="83.3" r="3.8" fill="url(#tree)"/>
<circle cx="155.3" cy="86.2" r="3.6" fill="#203010" opacity="0.45"/><circle cx="154.1" cy="85.0" r="3.6" fill="url(#tree)"/>
<circle cx="156.9" cy="110.7" r="3.2" fill="#203010" opacity="0.45"/><circle cx="155.7" cy="109.5" r="3.2" fill="url(#tree)"/>
<circle cx="170.2" cy="106.8" r="4.0" fill="#203010" opacity="0.45"/><circle cx="169.0" cy="105.6" r="4.0" fill="url(#tree)"/>
<circle cx="184.7" cy="69.8" r="4.0" fill="#203010" opacity="0.45"/><circle cx="183.5" cy="68.6" r="4.0" fill="url(#tree)"/>
<circle cx="135.5" cy="80.7" r="3.5" fill="#203010" opacity="0.45"/><circle cx="134.3" cy="79.5" r="3.5" fill="url(#tree)"/>
<circle cx="132.6" cy="68.6" r="3.1" fill="#203010" opacity="0.45"/><circle cx="131.4" cy="67.4" r="3.1" fill="url(#tree)"/>
<circle cx="132.6" cy="94.4" r="3.6" fill="#203010" opacity="0.45"/><circle cx="131.4" cy="93.2" r="3.6" fill="url(#tree)"/>
<circle cx="167.8" cy="62.8" r="3.0" fill="#203010" opacity="0.45"/><circle cx="166.6" cy="61.6" r="3.0" fill="url(#tree)"/>
<circle cx="159.1" cy="74.5" r="3.0" fill="#203010" opacity="0.45"/><circle cx="157.9" cy="73.3" r="3.0" fill="url(#tree)"/>
<circle cx="139.9" cy="73.3" r="3.5" fill="#203010" opacity="0.45"/><circle cx="138.7" cy="72.1" r="3.5" fill="url(#tree)"/>
<circle cx="144.4" cy="62.0" r="3.0" fill="#203010" opacity="0.45"/><circle cx="143.2" cy="60.8" r="3.0" fill="url(#tree)"/>
<circle cx="177.3" cy="69.7" r="3.5" fill="#203010" opacity="0.45"/><circle cx="176.1" cy="68.5" r="3.5" fill="url(#tree)"/>
<circle cx="158.2" cy="64.9" r="3.6" fill="#203010" opacity="0.45"/><circle cx="157.0" cy="63.7" r="3.6" fill="url(#tree)"/>
<circle cx="148.8" cy="104.1" r="2.9" fill="#203010" opacity="0.45"/><circle cx="147.6" cy="102.9" r="2.9" fill="url(#tree)"/>
<circle cx="170.6" cy="92.4" r="3.8" fill="#203010" opacity="0.45"/><circle cx="169.4" cy="91.2" r="3.8" fill="url(#tree)"/>
<circle cx="180.4" cy="94.4" r="3.0" fill="#203010" opacity="0.45"/><circle cx="179.2" cy="93.2" r="3.0" fill="url(#tree)"/>
<circle cx="145.8" cy="81.8" r="4.0" fill="#203010" opacity="0.45"/><circle cx="144.6" cy="80.6" r="4.0" fill="url(#tree)"/>
<circle cx="151.6" cy="73.8" r="4.0" fill="#203010" opacity="0.45"/><circle cx="150.4" cy="72.6" r="4.0" fill="url(#tree)"/>
<circle cx="161.7" cy="91.9" r="3.6" fill="#203010" opacity="0.45"/><circle cx="160.5" cy="90.7" r="3.6" fill="url(#tree)"/>
<circle cx="157.6" cy="54.4" r="2.9" fill="#203010" opacity="0.45"/><circle cx="156.4" cy="53.2" r="2.9" fill="url(#tree)"/>
<circle cx="168.7" cy="71.7" r="3.6" fill="#203010" opacity="0.45"/><circle cx="167.5" cy="70.5" r="3.6" fill="url(#tree)"/>
<circle cx="140.8" cy="89.1" r="3.4" fill="#203010" opacity="0.45"/><circle cx="139.6" cy="87.9" r="3.4" fill="url(#tree)"/>
<circle cx="181.3" cy="102.9" r="4.3" fill="#203010" opacity="0.45"/><circle cx="180.1" cy="101.7" r="4.3" fill="url(#tree)"/>
<circle cx="141.5" cy="99.8" r="3.1" fill="#203010" opacity="0.45"/><circle cx="140.3" cy="98.6" r="3.1" fill="url(#tree)"/>
<circle cx="130.2" cy="87.4" r="4.2" fill="#203010" opacity="0.45"/><circle cx="129.0" cy="86.2" r="4.2" fill="url(#tree)"/>
<circle cx="153.7" cy="93.7" r="4.4" fill="#203010" opacity="0.45"/><circle cx="152.5" cy="92.5" r="4.4" fill="url(#tree)"/>
<circle cx="234.1" cy="103.1" r="2.9" fill="#203010" opacity="0.45"/><circle cx="232.9" cy="101.9" r="2.9" fill="url(#tree)"/>
<circle cx="219.7" cy="111.6" r="3.7" fill="#203010" opacity="0.45"/><circle cx="218.5" cy="110.4" r="3.7" fill="url(#tree)"/>
<circle cx="194.1" cy="75.3" r="2.9" fill="#203010" opacity="0.45"/><circle cx="192.9" cy="74.1" r="2.9" fill="url(#tree)"/>
<circle cx="235.6" cy="63.7" r="3.0" fill="#203010" opacity="0.45"/><circle cx="234.4" cy="62.5" r="3.0" fill="url(#tree)"/>
<circle cx="244.0" cy="70.7" r="4.1" fill="#203010" opacity="0.45"/><circle cx="242.8" cy="69.5" r="4.1" fill="url(#tree)"/>
<circle cx="202.7" cy="70.0" r="3.7" fill="#203010" opacity="0.45"/><circle cx="201.5" cy="68.8" r="3.7" fill="url(#tree)"/>
<circle cx="220.6" cy="73.3" r="4.2" fill="#203010" opacity="0.45"/><circle cx="219.4" cy="72.1" r="4.2" fill="url(#tree)"/>
<circle cx="200.3" cy="101.3" r="3.5" fill="#203010" opacity="0.45"/><circle cx="199.1" cy="100.1" r="3.5" fill="url(#tree)"/>
<circle cx="197.1" cy="86.0" r="2.9" fill="#203010" opacity="0.45"/><circle cx="195.9" cy="84.8" r="2.9" fill="url(#tree)"/>
<circle cx="228.4" cy="75.8" r="3.4" fill="#203010" opacity="0.45"/><circle cx="227.2" cy="74.6" r="3.4" fill="url(#tree)"/>
<circle cx="242.6" cy="87.5" r="3.7" fill="#203010" opacity="0.45"/><circle cx="241.4" cy="86.3" r="3.7" fill="url(#tree)"/>
<circle cx="211.8" cy="100.1" r="4.3" fill="#203010" opacity="0.45"/><circle cx="210.6" cy="98.9" r="4.3" fill="url(#tree)"/>
<circle cx="216.7" cy="64.8" r="4.3" fill="#203010" opacity="0.45"/><circle cx="215.5" cy="63.6" r="4.3" fill="url(#tree)"/>
<circle cx="225.4" cy="94.0" r="3.6" fill="#203010" opacity="0.45"/><circle cx="224.2" cy="92.8" r="3.6" fill="url(#tree)"/>
<circle cx="203.7" cy="89.2" r="3.5" fill="#203010" opacity="0.45"/><circle cx="202.5" cy="88.0" r="3.5" fill="url(#tree)"/>
<circle cx="225.5" cy="66.5" r="3.0" fill="#203010" opacity="0.45"/><circle cx="224.3" cy="65.3" r="3.0" fill="url(#tree)"/>
<circle cx="242.5" cy="101.1" r="3.8" fill="#203010" opacity="0.45"/><circle cx="241.3" cy="99.9" r="3.8" fill="url(#tree)"/>
<circle cx="234.9" cy="82.1" r="3.2" fill="#203010" opacity="0.45"/><circle cx="233.7" cy="80.9" r="3.2" fill="url(#tree)"/>
<circle cx="209.3" cy="79.6" r="3.1" fill="#203010" opacity="0.45"/><circle cx="208.1" cy="78.4" r="3.1" fill="url(#tree)"/>
<circle cx="219.7" cy="102.0" r="2.9" fill="#203010" opacity="0.45"/><circle cx="218.5" cy="100.8" r="2.9" fill="url(#tree)"/>
<circle cx="213.0" cy="107.2" r="2.9" fill="#203010" opacity="0.45"/><circle cx="211.8" cy="106.0" r="2.9" fill="url(#tree)"/>
<circle cx="235.4" cy="93.0" r="3.9" fill="#203010" opacity="0.45"/><circle cx="234.2" cy="91.8" r="3.9" fill="url(#tree)"/>
<circle cx="244.7" cy="80.0" r="3.0" fill="#203010" opacity="0.45"/><circle cx="243.5" cy="78.8" r="3.0" fill="url(#tree)"/>
<circle cx="211.3" cy="70.1" r="4.3" fill="#203010" opacity="0.45"/><circle cx="210.1" cy="68.9" r="4.3" fill="url(#tree)"/>
<circle cx="218.3" cy="87.9" r="3.0" fill="#203010" opacity="0.45"/><circle cx="217.1" cy="86.7" r="3.0" fill="url(#tree)"/>
<circle cx="211.4" cy="92.5" r="4.2" fill="#203010" opacity="0.45"/><circle cx="210.2" cy="91.3" r="4.2" fill="url(#tree)"/>
<circle cx="204.3" cy="62.6" r="3.0" fill="#203010" opacity="0.45"/><circle cx="203.1" cy="61.4" r="3.0" fill="url(#tree)"/>
<circle cx="219.8" cy="57.7" r="2.9" fill="#203010" opacity="0.45"/><circle cx="218.6" cy="56.5" r="2.9" fill="url(#tree)"/>
<circle cx="192.6" cy="97.6" r="3.9" fill="#203010" opacity="0.45"/><circle cx="191.4" cy="96.4" r="3.9" fill="url(#tree)"/>
<circle cx="228.7" cy="110.2" r="3.2" fill="#203010" opacity="0.45"/><circle cx="227.5" cy="109.0" r="3.2" fill="url(#tree)"/>
<circle cx="203.2" cy="118.4" r="3.7" fill="#203010" opacity="0.45"/><circle cx="202.0" cy="117.2" r="3.7" fill="url(#tree)"/>
<circle cx="162.2" cy="153.6" r="2.9" fill="#203010" opacity="0.45"/><circle cx="161.0" cy="152.4" r="2.9" fill="url(#tree)"/>
<circle cx="202.0" cy="158.5" r="4.3" fill="#203010" opacity="0.45"/><circle cx="200.8" cy="157.3" r="4.3" fill="url(#tree)"/>
<circle cx="196.9" cy="149.8" r="3.2" fill="#203010" opacity="0.45"/><circle cx="195.7" cy="148.6" r="3.2" fill="url(#tree)"/>
<circle cx="186.8" cy="163.1" r="3.1" fill="#203010" opacity="0.45"/><circle cx="185.6" cy="161.9" r="3.1" fill="url(#tree)"/>
<circle cx="177.9" cy="151.0" r="3.0" fill="#203010" opacity="0.45"/><circle cx="176.7" cy="149.8" r="3.0" fill="url(#tree)"/>
<circle cx="188.4" cy="110.8" r="3.2" fill="#203010" opacity="0.45"/><circle cx="187.2" cy="109.6" r="3.2" fill="url(#tree)"/>
<circle cx="181.3" cy="141.7" r="4.1" fill="#203010" opacity="0.45"/><circle cx="180.1" cy="140.5" r="4.1" fill="url(#tree)"/>
<circle cx="185.5" cy="147.8" r="2.9" fill="#203010" opacity="0.45"/><circle cx="184.3" cy="146.6" r="2.9" fill="url(#tree)"/>
<circle cx="197.0" cy="132.3" r="3.0" fill="#203010" opacity="0.45"/><circle cx="195.8" cy="131.1" r="3.0" fill="url(#tree)"/>
<circle cx="215.9" cy="154.3" r="3.9" fill="#203010" opacity="0.45"/><circle cx="214.7" cy="153.1" r="3.9" fill="url(#tree)"/>
<circle cx="193.2" cy="124.7" r="3.1" fill="#203010" opacity="0.45"/><circle cx="192.0" cy="123.5" r="3.1" fill="url(#tree)"/>
<circle cx="207.6" cy="124.2" r="2.9" fill="#203010" opacity="0.45"/><circle cx="206.4" cy="123.0" r="2.9" fill="url(#tree)"/>
<circle cx="180.0" cy="112.3" r="3.8" fill="#203010" opacity="0.45"/><circle cx="178.8" cy="111.1" r="3.8" fill="url(#tree)"/>
<circle cx="215.1" cy="121.2" r="3.7" fill="#203010" opacity="0.45"/><circle cx="213.9" cy="120.0" r="3.7" fill="url(#tree)"/>
<circle cx="187.1" cy="119.6" r="3.6" fill="#203010" opacity="0.45"/><circle cx="185.9" cy="118.4" r="3.6" fill="url(#tree)"/>
<circle cx="206.7" cy="134.8" r="3.9" fill="#203010" opacity="0.45"/><circle cx="205.5" cy="133.6" r="3.9" fill="url(#tree)"/>
<circle cx="194.0" cy="161.0" r="3.0" fill="#203010" opacity="0.45"/><circle cx="192.8" cy="159.8" r="3.0" fill="url(#tree)"/>
<circle cx="170.5" cy="118.7" r="4.2" fill="#203010" opacity="0.45"/><circle cx="169.3" cy="117.5" r="4.2" fill="url(#tree)"/>
<circle cx="170.0" cy="149.3" r="3.9" fill="#203010" opacity="0.45"/><circle cx="168.8" cy="148.1" r="3.9" fill="url(#tree)"/>
<circle cx="174.6" cy="128.3" r="2.9" fill="#203010" opacity="0.45"/><circle cx="173.4" cy="127.1" r="2.9" fill="url(#tree)"/>
<circle cx="206.4" cy="149.8" r="3.0" fill="#203010" opacity="0.45"/><circle cx="205.2" cy="148.6" r="3.0" fill="url(#tree)"/>
<circle cx="165.5" cy="126.6" r="3.6" fill="#203010" opacity="0.45"/><circle cx="164.3" cy="125.4" r="3.6" fill="url(#tree)"/>
<circle cx="167.6" cy="134.0" r="3.6" fill="#203010" opacity="0.45"/><circle cx="166.4" cy="132.8" r="3.6" fill="url(#tree)"/>
<circle cx="186.3" cy="127.6" r="3.3" fill="#203010" opacity="0.45"/><circle cx="185.1" cy="126.4" r="3.3" fill="url(#tree)"/>
<circle cx="202.0" cy="140.4" r="3.0" fill="#203010" opacity="0.45"/><circle cx="200.8" cy="139.2" r="3.0" fill="url(#tree)"/>
<circle cx="178.3" cy="161.4" r="3.5" fill="#203010" opacity="0.45"/><circle cx="177.1" cy="160.2" r="3.5" fill="url(#tree)"/>
<circle cx="170.4" cy="157.1" r="3.1" fill="#203010" opacity="0.45"/><circle cx="169.2" cy="155.9" r="3.1" fill="url(#tree)"/>
<circle cx="216.4" cy="136.9" r="3.7" fill="#203010" opacity="0.45"/><circle cx="215.2" cy="135.7" r="3.7" fill="url(#tree)"/>
<circle cx="190.0" cy="139.0" r="4.2" fill="#203010" opacity="0.45"/><circle cx="188.8" cy="137.8" r="4.2" fill="url(#tree)"/>
<circle cx="111.0" cy="458.6" r="4.2" fill="#203010" opacity="0.45"/><circle cx="109.8" cy="457.4" r="4.2" fill="url(#tree)"/>
<circle cx="138.5" cy="439.8" r="3.2" fill="#203010" opacity="0.45"/><circle cx="137.3" cy="438.6" r="3.2" fill="url(#tree)"/>
<circle cx="142.2" cy="475.3" r="3.6" fill="#203010" opacity="0.45"/><circle cx="141.0" cy="474.1" r="3.6" fill="url(#tree)"/>
<circle cx="122.1" cy="451.5" r="2.9" fill="#203010" opacity="0.45"/><circle cx="120.9" cy="450.3" r="2.9" fill="url(#tree)"/>
<circle cx="142.8" cy="456.4" r="3.6" fill="#203010" opacity="0.45"/><circle cx="141.6" cy="455.2" r="3.6" fill="url(#tree)"/>
<circle cx="122.4" cy="475.5" r="3.3" fill="#203010" opacity="0.45"/><circle cx="121.2" cy="474.3" r="3.3" fill="url(#tree)"/>
<circle cx="139.9" cy="447.8" r="3.4" fill="#203010" opacity="0.45"/><circle cx="138.7" cy="446.6" r="3.4" fill="url(#tree)"/>
<circle cx="115.3" cy="447.6" r="2.9" fill="#203010" opacity="0.45"/><circle cx="114.1" cy="446.4" r="2.9" fill="url(#tree)"/>
<circle cx="128.6" cy="435.4" r="3.0" fill="#203010" opacity="0.45"/><circle cx="127.4" cy="434.2" r="3.0" fill="url(#tree)"/>
<circle cx="105.2" cy="438.6" r="4.0" fill="#203010" opacity="0.45"/><circle cx="104.0" cy="437.4" r="4.0" fill="url(#tree)"/>
<circle cx="148.8" cy="467.9" r="3.3" fill="#203010" opacity="0.45"/><circle cx="147.6" cy="466.7" r="3.3" fill="url(#tree)"/>
<circle cx="144.9" cy="433.8" r="3.1" fill="#203010" opacity="0.45"/><circle cx="143.7" cy="432.6" r="3.1" fill="url(#tree)"/>
<circle cx="147.9" cy="445.4" r="3.1" fill="#203010" opacity="0.45"/><circle cx="146.7" cy="444.2" r="3.1" fill="url(#tree)"/>
<circle cx="118.2" cy="462.0" r="3.2" fill="#203010" opacity="0.45"/><circle cx="117.0" cy="460.8" r="3.2" fill="url(#tree)"/>
<circle cx="130.4" cy="462.1" r="3.1" fill="#203010" opacity="0.45"/><circle cx="129.2" cy="460.9" r="3.1" fill="url(#tree)"/>
<circle cx="132.4" cy="453.8" r="2.8" fill="#203010" opacity="0.45"/><circle cx="131.2" cy="452.6" r="2.8" fill="url(#tree)"/>
<circle cx="104.7" cy="448.4" r="3.8" fill="#203010" opacity="0.45"/><circle cx="103.5" cy="447.2" r="3.8" fill="url(#tree)"/>
<circle cx="111.5" cy="435.3" r="3.3" fill="#203010" opacity="0.45"/><circle cx="110.3" cy="434.1" r="3.3" fill="url(#tree)"/>
<circle cx="124.4" cy="466.0" r="3.0" fill="#203010" opacity="0.45"/><circle cx="123.2" cy="464.8" r="3.0" fill="url(#tree)"/>
<circle cx="132.5" cy="471.3" r="3.8" fill="#203010" opacity="0.45"/><circle cx="131.3" cy="470.1" r="3.8" fill="url(#tree)"/>
<circle cx="138.2" cy="466.4" r="2.9" fill="#203010" opacity="0.45"/><circle cx="137.0" cy="465.2" r="2.9" fill="url(#tree)"/>
<circle cx="129.0" cy="478.1" r="3.2" fill="#203010" opacity="0.45"/><circle cx="127.8" cy="476.9" r="3.2" fill="url(#tree)"/>
<circle cx="108.8" cy="473.8" r="4.0" fill="#203010" opacity="0.45"/><circle cx="107.6" cy="472.6" r="4.0" fill="url(#tree)"/>
<circle cx="120.7" cy="440.8" r="3.0" fill="#203010" opacity="0.45"/><circle cx="119.5" cy="439.6" r="3.0" fill="url(#tree)"/>
<path d="M1060,100 L1070,104 L1074,135 L1070,168 L1060,168Z" fill="#a89c80"/>
<circle cx="1078" cy="121" r="4" fill="#3a7a20"/><circle cx="1077" cy="120" r="2.0" fill="#6ab040"/><circle cx="1078.5" cy="121.5" r="1.3" fill="#c03020"/>
<circle cx="1078" cy="136" r="4" fill="#3a7a20"/><circle cx="1077" cy="135" r="2.0" fill="#6ab040"/><circle cx="1078.5" cy="136.5" r="1.3" fill="#c03020"/>
<circle cx="1079" cy="151" r="4" fill="#3a7a20"/><circle cx="1078" cy="150" r="2.0" fill="#6ab040"/><circle cx="1079.5" cy="151.5" r="1.3" fill="#c03020"/>
<circle cx="1065" cy="112" r="3.5" fill="#3a7a20"/><circle cx="1064" cy="111" r="1.8" fill="#6ab040"/><circle cx="1065.5" cy="112.5" r="1.3" fill="#c03020"/>
<circle cx="1066" cy="128" r="3.5" fill="#3a7a20"/><circle cx="1065" cy="127" r="1.8" fill="#6ab040"/><circle cx="1066.5" cy="128.5" r="1.3" fill="#c03020"/>
<circle cx="1066" cy="146" r="3.5" fill="#3a7a20"/><circle cx="1065" cy="145" r="1.8" fill="#6ab040"/><circle cx="1066.5" cy="146.5" r="1.3" fill="#c03020"/>
<g><path d="M259,75 L268,63 L280,66 L282,58 L298,62 L296,74 L300,80 L292,95 L280,93 L276,92 L270,90 Z" fill="#3a2010"/><path d="M259,75 L268,63 L296,72 L289,82 L275,78 L268,90 Z" fill="#a86444"/><path d="M280,58 L298,62 L295,69 L280,66Z" fill="#c07c58"/></g>
<g><rect x="115" y="108" width="17" height="9" fill="#985838"/><rect x="115" y="108" width="17" height="4" fill="#c08060"/><path d="M107,130 L131,120 L136,146 L135,158 L114,158 L113,146 L108,145Z" fill="#3a2010"/><path d="M107,130 L131,120 L128,140 L112,145Z" fill="#a86444"/><rect x="113" y="144" width="12" height="13" fill="#a86444"/></g>
<g><path d="M227,126 L244,113 L262,118 L264,145 L260,155 L243,157 L238,143 L229,144Z" fill="#3a2010"/><path d="M227,126 L244,113 L256,117 L262,133 L240,140 L230,145Z" fill="#9a5a3c"/><path d="M237,145 L259,140 L262,150 L241,156Z" fill="#a86444"/></g>
<g><rect x="129" y="282" width="24" height="80" fill="rgba(0,0,0,0.2)"/><rect x="98" y="338" width="55" height="24" fill="rgba(0,0,0,0.2)"/><rect x="127" y="279" width="23" height="80" fill="#3a2010"/><rect x="96" y="336" width="54" height="23" fill="#3a2010"/><path d="M127,279 L150,279 L138,291 L138,347 L127,347Z" fill="#a86444"/><path d="M96,336 L138,336 L138,347 L150,347 L150,359 L96,359 L106,347Z" fill="#8a4c30"/><path d="M96,336 L138,336 L138,347 L106,347Z" fill="#a86444"/></g>
<g><path d="M258,285 L278,274 L292,276 L294,300 L296,312 L275,316 L267,305 L262,300Z" fill="#3a2010"/><path d="M258,285 L278,274 L292,280 L287,296 L268,303Z" fill="#9a5a3c"/><path d="M266,305 L291,298 L294,310 L272,314Z" fill="#a86444"/></g>
<g transform="rotate(14 158 176)"><rect x="143" y="163" width="32" height="25" fill="#303030"/><rect x="143" y="163" width="32" height="11" fill="#c8d0c8"/><rect x="142" y="163" width="2" height="25" fill="#eee"/></g>
<g transform="rotate(-5 149 202)"><rect x="139" y="194" width="20" height="15" fill="#383838"/><rect x="139" y="194" width="20" height="7" fill="#c8d0c8"/><rect x="139" y="194" width="2" height="15" fill="#eee"/></g>
<path d="M1063,220 L1072,224 L1072,268 L1063,270Z" fill="#2a1808"/><path d="M1063,225 L1070,222 L1068,232 L1063,234Z M1066,258 L1080,255 L1082,265 L1070,268Z" fill="#8a4c30"/>
</g>
<path d="M1.5,64.5 L32.5,48.5 L63.5,64.5 L63.5,101.5 M63.5,64.5 L94.5,48.5 L125.5,64.5 L125.5,101.5 M125.5,64.5 L156.5,48.5 L187.5,64.5 L187.5,101.5 M187.5,64.5 L218.5,48.5 L249.5,64.5 L249.5,101.5 M249.5,64.5 L280.5,48.5 L311.5,64.5 L311.5,101.5 M311.5,64.5 L342.5,48.5 L373.5,64.5 L373.5,101.5 M373.5,64.5 L404.5,48.5 L435.5,64.5 L435.5,101.5 M435.5,64.5 L466.5,48.5 L497.5,64.5 L497.5,101.5 M497.5,64.5 L528.5,48.5 L559.5,64.5 L559.5,101.5 M559.5,64.5 L590.5,48.5 L621.5,64.5 L621.5,101.5 M621.5,64.5 L652.5,48.5 L683.5,64.5 L683.5,101.5 M683.5,64.5 L714.5,48.5 L745.5,64.5 L745.5,101.5 M745.5,64.5 L776.5,48.5 L807.5,64.5 L807.5,101.5 M807.5,64.5 L838.5,48.5 L869.5,64.5 L869.5,101.5 M869.5,64.5 L900.5,48.5 L931.5,64.5 L931.5,101.5 M931.5,64.5 L962.5,48.5 L993.5,64.5 L993.5,101.5 M993.5,64.5 L1024.5,48.5 L1055.5,64.5 L1055.5,101.5 M32.5,117.5 L63.5,101.5 L94.5,117.5 L94.5,154.5 M94.5,117.5 L125.5,101.5 L156.5,117.5 L156.5,154.5 M156.5,117.5 L187.5,101.5 L218.5,117.5 L218.5,154.5 M218.5,117.5 L249.5,101.5 L280.5,117.5 L280.5,154.5 M280.5,117.5 L311.5,101.5 L342.5,117.5 L342.5,154.5 M342.5,117.5 L373.5,101.5 L404.5,117.5 L404.5,154.5 M404.5,117.5 L435.5,101.5 L466.5,117.5 L466.5,154.5 M466.5,117.5 L497.5,101.5 L528.5,117.5 L528.5,154.5 M528.5,117.5 L559.5,101.5 L590.5,117.5 L590.5,154.5 M590.5,117.5 L621.5,101.5 L652.5,117.5 L652.5,154.5 M652.5,117.5 L683.5,101.5 L714.5,117.5 L714.5,154.5 M714.5,117.5 L745.5,101.5 L776.5,117.5 L776.5,154.5 M776.5,117.5 L807.5,101.5 L838.5,117.5 L838.5,154.5 M838.5,117.5 L869.5,101.5 L900.5,117.5 L900.5,154.5 M900.5,117.5 L931.5,101.5 L962.5,117.5 L962.5,154.5 M962.5,117.5 L993.5,101.5 L1024.5,117.5 L1024.5,154.5 M1024.5,117.5 L1055.5,101.5 L1086.5,117.5 L1086.5,154.5 M1.5,170.5 L32.5,154.5 L63.5,170.5 L63.5,207.5 M63.5,170.5 L94.5,154.5 L125.5,170.5 L125.5,207.5 M125.5,170.5 L156.5,154.5 L187.5,170.5 L187.5,207.5 M187.5,170.5 L218.5,154.5 L249.5,170.5 L249.5,207.5 M249.5,170.5 L280.5,154.5 L311.5,170.5 L311.5,207.5 M311.5,170.5 L342.5,154.5 L373.5,170.5 L373.5,207.5 M373.5,170.5 L404.5,154.5 L435.5,170.5 L435.5,207.5 M435.5,170.5 L466.5,154.5 L497.5,170.5 L497.5,207.5 M497.5,170.5 L528.5,154.5 L559.5,170.5 L559.5,207.5 M559.5,170.5 L590.5,154.5 L621.5,170.5 L621.5,207.5 M621.5,170.5 L652.5,154.5 L683.5,170.5 L683.5,207.5 M683.5,170.5 L714.5,154.5 L745.5,170.5 L745.5,207.5 M745.5,170.5 L776.5,154.5 L807.5,170.5 L807.5,207.5 M807.5,170.5 L838.5,154.5 L869.5,170.5 L869.5,207.5 M869.5,170.5 L900.5,154.5 L931.5,170.5 L931.5,207.5 M931.5,170.5 L962.5,154.5 L993.5,170.5 L993.5,207.5 M993.5,170.5 L1024.5,154.5 L1055.5,170.5 L1055.5,207.5 M32.5,223.5 L63.5,207.5 L94.5,223.5 L94.5,260.5 M94.5,223.5 L125.5,207.5 L156.5,223.5 L156.5,260.5 M156.5,223.5 L187.5,207.5 L218.5,223.5 L218.5,260.5 M218.5,223.5 L249.5,207.5 L280.5,223.5 L280.5,260.5 M280.5,223.5 L311.5,207.5 L342.5,223.5 L342.5,260.5 M342.5,223.5 L373.5,207.5 L404.5,223.5 L404.5,260.5 M404.5,223.5 L435.5,207.5 L466.5,223.5 L466.5,260.5 M466.5,223.5 L497.5,207.5 L528.5,223.5 L528.5,260.5 M528.5,223.5 L559.5,207.5 L590.5,223.5 L590.5,260.5 M590.5,223.5 L621.5,207.5 L652.5,223.5 L652.5,260.5 M652.5,223.5 L683.5,207.5 L714.5,223.5 L714.5,260.5 M714.5,223.5 L745.5,207.5 L776.5,223.5 L776.5,260.5 M776.5,223.5 L807.5,207.5 L838.5,223.5 L838.5,260.5 M838.5,223.5 L869.5,207.5 L900.5,223.5 L900.5,260.5 M900.5,223.5 L931.5,207.5 L962.5,223.5 L962.5,260.5 M962.5,223.5 L993.5,207.5 L1024.5,223.5 L1024.5,260.5 M1024.5,223.5 L1055.5,207.5 L1086.5,223.5 L1086.5,260.5 M1.5,276.5 L32.5,260.5 L63.5,276.5 L63.5,313.5 M63.5,276.5 L94.5,260.5 L125.5,276.5 L125.5,313.5 M125.5,276.5 L156.5,260.5 L187.5,276.5 L187.5,313.5 M187.5,276.5 L218.5,260.5 L249.5,276.5 L249.5,313.5 M249.5,276.5 L280.5,260.5 L311.5,276.5 L311.5,313.5 M311.5,276.5 L342.5,260.5 L373.5,276.5 L373.5,313.5 M373.5,276.5 L404.5,260.5 L435.5,276.5 L435.5,313.5 M435.5,276.5 L466.5,260.5 L497.5,276.5 L497.5,313.5 M497.5,276.5 L528.5,260.5 L559.5,276.5 L559.5,313.5 M559.5,276.5 L590.5,260.5 L621.5,276.5 L621.5,313.5 M621.5,276.5 L652.5,260.5 L683.5,276.5 L683.5,313.5 M683.5,276.5 L714.5,260.5 L745.5,276.5 L745.5,313.5 M745.5,276.5 L776.5,260.5 L807.5,276.5 L807.5,313.5 M807.5,276.5 L838.5,260.5 L869.5,276.5 L869.5,313.5 M869.5,276.5 L900.5,260.5 L931.5,276.5 L931.5,313.5 M931.5,276.5 L962.5,260.5 L993.5,276.5 L993.5,313.5 M993.5,276.5 L1024.5,260.5 L1055.5,276.5 L1055.5,313.5 M32.5,329.5 L63.5,313.5 L94.5,329.5 L94.5,366.5 M94.5,329.5 L125.5,313.5 L156.5,329.5 L156.5,366.5 M156.5,329.5 L187.5,313.5 L218.5,329.5 L218.5,366.5 M218.5,329.5 L249.5,313.5 L280.5,329.5 L280.5,366.5 M280.5,329.5 L311.5,313.5 L342.5,329.5 L342.5,366.5 M342.5,329.5 L373.5,313.5 L404.5,329.5 L404.5,366.5 M404.5,329.5 L435.5,313.5 L466.5,329.5 L466.5,366.5 M466.5,329.5 L497.5,313.5 L528.5,329.5 L528.5,366.5 M528.5,329.5 L559.5,313.5 L590.5,329.5 L590.5,366.5 M590.5,329.5 L621.5,313.5 L652.5,329.5 L652.5,366.5 M652.5,329.5 L683.5,313.5 L714.5,329.5 L714.5,366.5 M714.5,329.5 L745.5,313.5 L776.5,329.5 L776.5,366.5 M776.5,329.5 L807.5,313.5 L838.5,329.5 L838.5,366.5 M838.5,329.5 L869.5,313.5 L900.5,329.5 L900.5,366.5 M900.5,329.5 L931.5,313.5 L962.5,329.5 L962.5,366.5 M962.5,329.5 L993.5,313.5 L1024.5,329.5 L1024.5,366.5 M1024.5,329.5 L1055.5,313.5 L1086.5,329.5 L1086.5,366.5 M1.5,382.5 L32.5,366.5 L63.5,382.5 L63.5,419.5 M63.5,382.5 L94.5,366.5 L125.5,382.5 L125.5,419.5 M125.5,382.5 L156.5,366.5 L187.5,382.5 L187.5,419.5 M187.5,382.5 L218.5,366.5 L249.5,382.5 L249.5,419.5 M249.5,382.5 L280.5,366.5 L311.5,382.5 L311.5,419.5 M311.5,382.5 L342.5,366.5 L373.5,382.5 L373.5,419.5 M373.5,382.5 L404.5,366.5 L435.5,382.5 L435.5,419.5 M435.5,382.5 L466.5,366.5 L497.5,382.5 L497.5,419.5 M497.5,382.5 L528.5,366.5 L559.5,382.5 L559.5,419.5 M559.5,382.5 L590.5,366.5 L621.5,382.5 L621.5,419.5 M621.5,382.5 L652.5,366.5 L683.5,382.5 L683.5,419.5 M683.5,382.5 L714.5,366.5 L745.5,382.5 L745.5,419.5 M745.5,382.5 L776.5,366.5 L807.5,382.5 L807.5,419.5 M807.5,382.5 L838.5,366.5 L869.5,382.5 L869.5,419.5 M869.5,382.5 L900.5,366.5 L931.5,382.5 L931.5,419.5 M931.5,382.5 L962.5,366.5 L993.5,382.5 L993.5,419.5 M993.5,382.5 L1024.5,366.5 L1055.5,382.5 L1055.5,419.5 M32.5,435.5 L63.5,419.5 L94.5,435.5 L94.5,472.5 M94.5,435.5 L125.5,419.5 L156.5,435.5 L156.5,472.5 M156.5,435.5 L187.5,419.5 L218.5,435.5 L218.5,472.5 M218.5,435.5 L249.5,419.5 L280.5,435.5 L280.5,472.5 M280.5,435.5 L311.5,419.5 L342.5,435.5 L342.5,472.5 M342.5,435.5 L373.5,419.5 L404.5,435.5 L404.5,472.5 M404.5,435.5 L435.5,419.5 L466.5,435.5 L466.5,472.5 M466.5,435.5 L497.5,419.5 L528.5,435.5 L528.5,472.5 M528.5,435.5 L559.5,419.5 L590.5,435.5 L590.5,472.5 M590.5,435.5 L621.5,419.5 L652.5,435.5 L652.5,472.5 M652.5,435.5 L683.5,419.5 L714.5,435.5 L714.5,472.5 M714.5,435.5 L745.5,419.5 L776.5,435.5 L776.5,472.5 M776.5,435.5 L807.5,419.5 L838.5,435.5 L838.5,472.5 M838.5,435.5 L869.5,419.5 L900.5,435.5 L900.5,472.5 M900.5,435.5 L931.5,419.5 L962.5,435.5 L962.5,472.5 M962.5,435.5 L993.5,419.5 L1024.5,435.5 L1024.5,472.5 M1024.5,435.5 L1055.5,419.5 L1086.5,435.5 L1086.5,472.5 M1.5,488.5 L32.5,472.5 L63.5,488.5 L63.5,525.5 M63.5,488.5 L94.5,472.5 L125.5,488.5 L125.5,525.5 M125.5,488.5 L156.5,472.5 L187.5,488.5 L187.5,525.5 M187.5,488.5 L218.5,472.5 L249.5,488.5 L249.5,525.5 M249.5,488.5 L280.5,472.5 L311.5,488.5 L311.5,525.5 M311.5,488.5 L342.5,472.5 L373.5,488.5 L373.5,525.5 M373.5,488.5 L404.5,472.5 L435.5,488.5 L435.5,525.5 M435.5,488.5 L466.5,472.5 L497.5,488.5 L497.5,525.5 M497.5,488.5 L528.5,472.5 L559.5,488.5 L559.5,525.5 M559.5,488.5 L590.5,472.5 L621.5,488.5 L621.5,525.5 M621.5,488.5 L652.5,472.5 L683.5,488.5 L683.5,525.5 M683.5,488.5 L714.5,472.5 L745.5,488.5 L745.5,525.5 M745.5,488.5 L776.5,472.5 L807.5,488.5 L807.5,525.5 M807.5,488.5 L838.5,472.5 L869.5,488.5 L869.5,525.5 M869.5,488.5 L900.5,472.5 L931.5,488.5 L931.5,525.5 M931.5,488.5 L962.5,472.5 L993.5,488.5 L993.5,525.5 M993.5,488.5 L1024.5,472.5 L1055.5,488.5 L1055.5,525.5 M32.5,541.5 L63.5,525.5 L94.5,541.5 L94.5,578.5 M94.5,541.5 L125.5,525.5 L156.5,541.5 L156.5,578.5 M156.5,541.5 L187.5,525.5 L218.5,541.5 L218.5,578.5 M218.5,541.5 L249.5,525.5 L280.5,541.5 L280.5,578.5 M280.5,541.5 L311.5,525.5 L342.5,541.5 L342.5,578.5 M342.5,541.5 L373.5,525.5 L404.5,541.5 L404.5,578.5 M404.5,541.5 L435.5,525.5 L466.5,541.5 L466.5,578.5 M466.5,541.5 L497.5,525.5 L528.5,541.5 L528.5,578.5 M528.5,541.5 L559.5,525.5 L590.5,541.5 L590.5,578.5 M590.5,541.5 L621.5,525.5 L652.5,541.5 L652.5,578.5 M652.5,541.5 L683.5,525.5 L714.5,541.5 L714.5,578.5 M714.5,541.5 L745.5,525.5 L776.5,541.5 L776.5,578.5 M776.5,541.5 L807.5,525.5 L838.5,541.5 L838.5,578.5 M838.5,541.5 L869.5,525.5 L900.5,541.5 L900.5,578.5 M900.5,541.5 L931.5,525.5 L962.5,541.5 L962.5,578.5 M962.5,541.5 L993.5,525.5 L1024.5,541.5 L1024.5,578.5 M1024.5,541.5 L1055.5,525.5 L1086.5,541.5 L1086.5,578.5" fill="none" stroke="#000" stroke-width="1"/>
<path d="M32,82h2v2h-2z M94,82h2v2h-2z M156,82h2v2h-2z M218,82h2v2h-2z M280,82h2v2h-2z M342,82h2v2h-2z M404,82h2v2h-2z M466,82h2v2h-2z M528,82h2v2h-2z M590,82h2v2h-2z M652,82h2v2h-2z M714,82h2v2h-2z M776,82h2v2h-2z M838,82h2v2h-2z M900,82h2v2h-2z M962,82h2v2h-2z M1024,82h2v2h-2z M63,135h2v2h-2z M125,135h2v2h-2z M187,135h2v2h-2z M249,135h2v2h-2z M311,135h2v2h-2z M373,135h2v2h-2z M435,135h2v2h-2z M497,135h2v2h-2z M559,135h2v2h-2z M621,135h2v2h-2z M683,135h2v2h-2z M745,135h2v2h-2z M807,135h2v2h-2z M869,135h2v2h-2z M931,135h2v2h-2z M993,135h2v2h-2z M1055,135h2v2h-2z M32,188h2v2h-2z M94,188h2v2h-2z M156,188h2v2h-2z M218,188h2v2h-2z M280,188h2v2h-2z M342,188h2v2h-2z M404,188h2v2h-2z M466,188h2v2h-2z M528,188h2v2h-2z M590,188h2v2h-2z M652,188h2v2h-2z M714,188h2v2h-2z M776,188h2v2h-2z M838,188h2v2h-2z M900,188h2v2h-2z M962,188h2v2h-2z M1024,188h2v2h-2z M63,241h2v2h-2z M125,241h2v2h-2z M187,241h2v2h-2z M249,241h2v2h-2z M311,241h2v2h-2z M373,241h2v2h-2z M435,241h2v2h-2z M497,241h2v2h-2z M559,241h2v2h-2z M621,241h2v2h-2z M683,241h2v2h-2z M745,241h2v2h-2z M807,241h2v2h-2z M869,241h2v2h-2z M931,241h2v2h-2z M993,241h2v2h-2z M1055,241h2v2h-2z M32,294h2v2h-2z M94,294h2v2h-2z M156,294h2v2h-2z M218,294h2v2h-2z M280,294h2v2h-2z M342,294h2v2h-2z M404,294h2v2h-2z M466,294h2v2h-2z M528,294h2v2h-2z M590,294h2v2h-2z M652,294h2v2h-2z M714,294h2v2h-2z M776,294h2v2h-2z M838,294h2v2h-2z M900,294h2v2h-2z M962,294h2v2h-2z M1024,294h2v2h-2z M63,347h2v2h-2z M125,347h2v2h-2z M187,347h2v2h-2z M249,347h2v2h-2z M311,347h2v2h-2z M373,347h2v2h-2z M435,347h2v2h-2z M497,347h2v2h-2z M559,347h2v2h-2z M621,347h2v2h-2z M683,347h2v2h-2z M745,347h2v2h-2z M807,347h2v2h-2z M869,347h2v2h-2z M931,347h2v2h-2z M993,347h2v2h-2z M1055,347h2v2h-2z M32,400h2v2h-2z M94,400h2v2h-2z M156,400h2v2h-2z M218,400h2v2h-2z M280,400h2v2h-2z M342,400h2v2h-2z M404,400h2v2h-2z M466,400h2v2h-2z M528,400h2v2h-2z M590,400h2v2h-2z M652,400h2v2h-2z M714,400h2v2h-2z M776,400h2v2h-2z M838,400h2v2h-2z M900,400h2v2h-2z M962,400h2v2h-2z M1024,400h2v2h-2z M63,453h2v2h-2z M125,453h2v2h-2z M187,453h2v2h-2z M249,453h2v2h-2z M311,453h2v2h-2z M373,453h2v2h-2z M435,453h2v2h-2z M497,453h2v2h-2z M559,453h2v2h-2z M621,453h2v2h-2z M683,453h2v2h-2z M745,453h2v2h-2z M807,453h2v2h-2z M869,453h2v2h-2z M931,453h2v2h-2z M993,453h2v2h-2z M1055,453h2v2h-2z M32,506h2v2h-2z M94,506h2v2h-2z M156,506h2v2h-2z M218,506h2v2h-2z M280,506h2v2h-2z M342,506h2v2h-2z M404,506h2v2h-2z M466,506h2v2h-2z M528,506h2v2h-2z M590,506h2v2h-2z M652,506h2v2h-2z M714,506h2v2h-2z M776,506h2v2h-2z M838,506h2v2h-2z M900,506h2v2h-2z M962,506h2v2h-2z M1024,506h2v2h-2z M63,559h2v2h-2z M125,559h2v2h-2z M187,559h2v2h-2z M249,559h2v2h-2z M311,559h2v2h-2z M373,559h2v2h-2z M435,559h2v2h-2z M497,559h2v2h-2z M559,559h2v2h-2z M621,559h2v2h-2z M683,559h2v2h-2z M745,559h2v2h-2z M807,559h2v2h-2z M869,559h2v2h-2z M931,559h2v2h-2z M993,559h2v2h-2z M1055,559h2v2h-2z" fill="#fff"/>
<rect x="289" y="219" width="16" height="46" fill="#8aa6c4"/><rect x="289" y="219" width="2" height="46" fill="#e6eef6"/><path d="M291.5,225h11M297,220v11" stroke="#fff" stroke-width="4"/><path d="M291.5,225h11M297,220v11" stroke="#000" stroke-width="2"/><text x="291" y="263" font-family="Liberation Sans" font-weight="bold" font-size="12" fill="#000">B</text>
<rect x="549" y="60" width="4" height="42" fill="#d8d8b0"/><rect x="546" y="58" width="4" height="43" fill="#e8eef4"/>
<rect x="502" y="56" width="46" height="46" fill="#7f98b0"/><rect x="502" y="56" width="46" height="2" fill="#f4f6f8"/><rect x="502" y="56" width="2" height="46" fill="#f4f6f8"/>
<rect x="517.5" y="63.5" width="23" height="12" fill="#909aa0" stroke="#e0c020" stroke-width="2"/><rect x="522" y="66" width="14" height="4" fill="#202020"/>
<rect x="508" y="78" width="36" height="16" fill="#a05a30"/><rect x="522" y="72" width="10" height="8" fill="#202020"/>
</svg>
<div class="abs" style="left:0;top:47px;width:2px;height:721px;background:#c8c8c8"></div>


<div id="menubar">
 <span style="left:7px"><u>F</u>ile</span>
 <span style="left:39px"><u>S</u>tatus</span>
 <span style="left:85px"><u>D</u>isplay</span>
 <span style="left:137px"><u>O</u>ptions</span>
 <span style="left:193px"><u>T</u>ools</span>
 <span style="left:235px"><u>H</u>elp</span>
</div>
<div id="tbline"></div>
<div id="toolbar"></div>
<div id="rebar"></div>
<div id="tbbottom"></div>
<svg class="abs" style="left:0;top:21px" width="458" height="25" viewBox="0 21 458 25">
<defs><pattern id="dith" width="2" height="2" patternUnits="userSpaceOnUse"><rect width="2" height="2" fill="#f8f8f8"/><rect width="1" height="1" fill="#ececec"/></pattern></defs>
<g fill="#a0a0a0"><rect x="2" y="25" width="1" height="1"/><rect x="2" y="30" width="1" height="1"/><rect x="2" y="35" width="1" height="1"/><rect x="2" y="40" width="1" height="1"/><rect x="2" y="44" width="1" height="1"/></g>
<!-- separators -->
<g fill="#a0a0a0">
<rect x="57" y="24" width="1" height="20"/><rect x="135" y="24" width="1" height="20"/><rect x="189" y="24" width="1" height="20"/>
<rect x="315" y="24" width="1" height="20"/><rect x="345" y="24" width="1" height="20"/><rect x="375" y="24" width="1" height="20"/>
<rect x="429" y="24" width="1" height="20"/><rect x="457" y="21" width="1" height="25"/>
</g>
<g fill="#fff"><rect x="58" y="24" width="1" height="20"/><rect x="136" y="24" width="1" height="20"/><rect x="190" y="24" width="1" height="20"/><rect x="316" y="24" width="1" height="20"/><rect x="346" y="24" width="1" height="20"/><rect x="376" y="24" width="1" height="20"/><rect x="430" y="24" width="1" height="20"/></g>
<!-- pressed buttons -->
<g>
<rect x="85" y="22" width="23" height="23" fill="url(#dith)"/><rect x="85" y="22" width="1" height="23" fill="#a0a0a0"/><rect x="85" y="22" width="23" height="1" fill="#a0a0a0"/><rect x="86" y="23" width="22" height="1" fill="#fff"/>
<rect x="139" y="22" width="23" height="23" fill="url(#dith)"/><rect x="139" y="22" width="1" height="23" fill="#a0a0a0"/><rect x="139" y="22" width="23" height="1" fill="#a0a0a0"/><rect x="140" y="23" width="22" height="1" fill="#fff"/>
<rect x="163" y="22" width="23" height="23" fill="url(#dith)"/><rect x="163" y="22" width="1" height="23" fill="#a0a0a0"/><rect x="163" y="22" width="23" height="1" fill="#a0a0a0"/><rect x="164" y="23" width="22" height="1" fill="#fff"/>
<rect x="241" y="22" width="23" height="23" fill="url(#dith)"/><rect x="241" y="22" width="1" height="23" fill="#a0a0a0"/><rect x="241" y="22" width="23" height="1" fill="#a0a0a0"/><rect x="242" y="23" width="22" height="1" fill="#fff"/>
<rect x="265" y="22" width="23" height="23" fill="url(#dith)"/><rect x="265" y="22" width="1" height="23" fill="#a0a0a0"/><rect x="265" y="22" width="23" height="1" fill="#a0a0a0"/><rect x="266" y="23" width="22" height="1" fill="#fff"/>
<rect x="289" y="22" width="23" height="23" fill="url(#dith)"/><rect x="289" y="22" width="1" height="23" fill="#a0a0a0"/><rect x="289" y="22" width="23" height="1" fill="#a0a0a0"/><rect x="290" y="23" width="22" height="1" fill="#fff"/>
<rect x="319" y="22" width="23" height="23" fill="url(#dith)"/><rect x="319" y="22" width="1" height="23" fill="#a0a0a0"/><rect x="319" y="22" width="23" height="1" fill="#a0a0a0"/><rect x="320" y="23" width="22" height="1" fill="#fff"/>
<rect x="349" y="22" width="23" height="23" fill="url(#dith)"/><rect x="349" y="22" width="1" height="23" fill="#a0a0a0"/><rect x="349" y="22" width="23" height="1" fill="#a0a0a0"/><rect x="350" y="23" width="22" height="1" fill="#fff"/>
<rect x="379" y="22" width="23" height="23" fill="url(#dith)"/><rect x="379" y="22" width="1" height="23" fill="#a0a0a0"/><rect x="379" y="22" width="23" height="1" fill="#a0a0a0"/><rect x="380" y="23" width="22" height="1" fill="#fff"/>
</g>
<!-- X -->
<path d="M13.5,28.5 L23,38 M23,28.5 L13.5,38" stroke="#f00" stroke-width="2.2"/>
<!-- floppy -->
<rect x="35.5" y="26.5" width="13" height="13" fill="#808000" stroke="#000"/><rect x="38" y="27" width="8" height="5" fill="#fff"/><rect x="37" y="34" width="10" height="5" fill="#000"/><rect x="44" y="35" width="2" height="3" fill="#fff"/>
<!-- globe -->
<circle cx="72.5" cy="33.5" r="7.2" fill="#00e8f0" stroke="#000" stroke-width="1"/><path d="M67,30 Q70,26 74,27 L71,31Z M75,35 Q79,31 79,34 Q78,38 74,39Z M66,34 Q69,37 70,40 Q66,38 66,34Z" fill="#10b010"/><path d="M76,27 Q80,29 80,33 L77,31Z M70,40 Q74,41 77,39 L73,38Z" fill="#0020e0"/>
<!-- window icon -->
<rect x="89.5" y="26.5" width="16" height="16" fill="#a8a8a8" stroke="#000"/><rect x="90" y="27" width="15" height="4" fill="#a0a0a0"/><text x="91" y="31" font-family="Liberation Mono" font-size="6" font-weight="bold" fill="#000">xxx</text><rect x="92.5" y="33.5" width="10" height="6" fill="#fff" stroke="#a0a0a0"/><rect x="94" y="35" width="7" height="3" fill="#a0a0a0"/>
<!-- doc icon -->
<path d="M113.5,26.5 H124 L127.5,30 V41.5 H113.5Z" fill="#a0a0a0" stroke="#000"/><path d="M124,26.5 L127.5,30 H124Z" fill="#ff0"/><text x="114" y="40" font-family="Liberation Mono" font-size="8" font-weight="bold" fill="#000">xx</text>
<!-- hex 20 -->
<path d="M146,28.5 H154 L158.5,34 L154,40 H146 L142.5,34Z" fill="#a0a0a0" stroke="#000" stroke-width="1.3"/><text x="142.5" y="43" font-family="Liberation Sans" font-size="9" font-weight="bold" fill="#f00">20</text>
<!-- arrow box -->
<rect x="167.5" y="26.5" width="16" height="16" fill="#fff" stroke="#000"/><path d="M170,32.5 H175 V29.5 L180,34.5 L175,39.5 V36.5 H170Z" fill="#000080" stroke="#000" stroke-width=".6"/>
<!-- triangle -->
<rect x="196.5" y="26.5" width="16" height="15" fill="#fff" stroke="#000"/><path d="M212,27 L197,34 L212,41Z" fill="#a0a0a0" stroke="#000"/>
<!-- F -->
<rect x="220.5" y="25.5" width="16" height="16" fill="#a0a0a0" stroke="#000"/><text x="224" y="39" font-family="Liberation Serif" font-size="13" font-weight="bold" fill="#f00">F</text>
<!-- eye -->
<path d="M246,34 Q253,26 260.5,34 Q253,42 246,34Z" fill="#000"/><circle cx="253" cy="34" r="3.2" fill="#fff"/><circle cx="253" cy="34" r="1.6" fill="#000"/>
<!-- R -->
<rect x="269.5" y="26.5" width="16" height="16" fill="#a0a0a0" stroke="#000"/><text x="272.5" y="39.5" font-family="Liberation Sans" font-size="13" font-weight="bold" fill="#f00">R</text>
<!-- M -->
<rect x="293.5" y="26.5" width="16" height="16" fill="#a0a0a0" stroke="#000"/><text x="295.5" y="39.5" font-family="Liberation Sans" font-size="13" font-weight="bold" fill="#f00">M</text>
<!-- arrow right outline -->
<path d="M325.5,31.5 H332 V28.5 L339,34.5 L332,40.5 V37.5 H325.5Z" fill="#fff" stroke="#000"/><path d="M326,35 H332 V40 L338,35Z" fill="#a0a0a0"/>
<!-- dot -->
<rect x="361" y="33" width="2" height="2" fill="#000"/>
<!-- FX notes -->
<text x="384" y="32" font-family="Liberation Mono" font-size="6.5" font-weight="bold" fill="#000">FX</text>
<path d="M392.5,28 V39 M398.5,30 V41" stroke="#000" stroke-width="1.3"/><path d="M392.5,27.5 L399,30 V32 L392.5,30Z" fill="#000"/><circle cx="390.5" cy="39" r="2.3" fill="#0000d0"/><circle cx="396.5" cy="41" r="2.3" fill="#0000d0"/>
<path d="M413.5,26 V38 M419.5,28 V40" stroke="#000" stroke-width="1.3"/><path d="M413.5,25.5 L420,28.5 V30.5 L413.5,28Z" fill="#000"/><circle cx="411.5" cy="38" r="2.3" fill="#0000d0"/><circle cx="417.5" cy="40" r="2.3" fill="#0000d0"/>
<!-- search -->
<rect x="436.5" y="25.5" width="16" height="16" fill="#f0f0f0" stroke="#000"/><circle cx="443" cy="32" r="4.3" fill="#00f0f8" stroke="#000" stroke-width="1"/><path d="M446,35 L450.5,39.5" stroke="#000" stroke-width="1.8"/>
</svg>


<!-- right panel -->
<svg class="abs" style="left:1184px;top:56px" width="44" height="44"><defs><radialGradient id="ring"><stop offset="0.72" stop-color="#151515"/><stop offset="0.85" stop-color="#3c3c3c"/><stop offset="0.95" stop-color="#6a6a6a"/><stop offset="1" stop-color="#2a2a2a"/></radialGradient><radialGradient id="ball" cx="0.5" cy="0.4" r="0.6"><stop offset="0" stop-color="#ff5a30"/><stop offset="0.55" stop-color="#f02808"/><stop offset="0.85" stop-color="#b81400"/><stop offset="1" stop-color="#701000"/></radialGradient><linearGradient id="gloss" x1="0" x2="0" y1="0" y2="1"><stop offset="0" stop-color="#fff" stop-opacity=".75"/><stop offset="1" stop-color="#fff" stop-opacity="0"/></linearGradient></defs><circle cx="21.5" cy="21.5" r="21" fill="url(#ring)"/><circle cx="21.5" cy="21.5" r="16.5" fill="url(#ball)"/><ellipse cx="21.5" cy="13" rx="10" ry="6.5" fill="url(#gloss)"/></svg>
<div class="abs" style="left:1242px;top:70px;font-size:13px;font-weight:bold;color:#f8f0dc;line-height:15px">6 of 6</div>
<svg class="abs" style="left:1312px;top:66px" width="38" height="25"><defs><linearGradient id="rg" x1="0" x2="1" y1="0" y2="1"><stop offset="0" stop-color="#ff1010"/><stop offset="0.5" stop-color="#c00808"/><stop offset="1" stop-color="#600000"/></linearGradient></defs><rect width="38" height="25" fill="url(#rg)"/><rect x="0" y="10" width="38" height="5" fill="#9ab0b0"/><rect x="0" y="11.5" width="38" height="2" fill="#000"/><rect x="13" y="0" width="5" height="25" fill="#9ab0b0"/><rect x="14.5" y="0" width="2" height="25" fill="#000"/><circle cx="15.5" cy="12.5" r="7" fill="#202020" stroke="#b8c8c8" stroke-width="1.6"/><path d="M15.5,7v11M10,12.5h11" stroke="#fff" stroke-width="3"/><path d="M15.5,7v11M10,12.5h11" stroke="#000" stroke-width="1.5"/></svg>
<div class="abs" style="left:1186px;top:108px;font-family:'Liberation Serif',serif;font-size:15px;font-weight:bold;color:#efc878;line-height:17px;letter-spacing:0.2px">Close Combat Segment</div>

<div class="abs" style="left:1252px;top:149px;font-size:11px;color:#fcf8e0;line-height:12px;letter-spacing:-0.2px">HEX: [ 7, 26 ]<br>Clear</div>

<!-- log -->
<div class="abs" style="left:712px;top:618px;width:465px;height:147px;background:#f0f0f0;border-top:1px solid #a0a0a0;border-left:1px solid #a0a0a0"></div>
<div class="abs" style="left:713px;top:619px;width:444px;height:128px;background:#32323f"></div>
<div class="abs" style="left:715px;top:711px;color:#fff;font-size:11px;line-height:14px;white-space:nowrap">[US] LEADER: Lieutenant B* ID#: 16 &nbsp; has been eliminated</div>
<div class="abs" style="left:1157px;top:619px;width:19px;height:128px;background:linear-gradient(90deg,#e8e8e8,#fbfbfb 30%,#f4f4f4)"></div>
<div class="abs" style="left:713px;top:747px;width:463px;height:18px;background:linear-gradient(#e8e8e8,#fbfbfb 30%,#f4f4f4)"></div>
<div class="abs" style="left:1158px;top:655px;width:15px;height:74px;border:1px solid #9a9a9a;border-radius:2px;background:linear-gradient(90deg,#f4f4f4,#e8e8e8 45%,#d4d4d4 55%,#dcdcdc)"></div>
<svg class="abs" style="left:1157px;top:619px" width="19" height="146"><path d="M6,13 L10,9 L14,13Z" fill="#505050"/><path d="M6,117 L10,121 L14,117Z" fill="#505050"/><path d="M7,68.5h6M7,70.5h6M7,72.5h6" stroke="#606060" stroke-width="1"/></svg>
<svg class="abs" style="left:713px;top:747px" width="444" height="18"><path d="M12,5 L8,9 L12,13Z" fill="#b0b0b0"/><path d="M433,5 L437,9 L433,13Z" fill="#b0b0b0"/></svg>
<div class="abs" style="left:1364px;top:47px;width:2px;height:721px;background:#fff"></div>
<div class="abs" style="left:0;top:766px;width:1366px;height:2px;background:#f8f8f8"></div>
<div class="abs" style="left:0;top:47px;width:2px;height:721px;background:#b4b4bc"></div>
<!-- dialog -->
<div id="dlg"><div class="title">Scenario Outcome...</div></div>
<div id="client">
</div>
<div class="abs" style="left:321px;top:108px;width:349px;height:350px;background:#fff;border:1px solid;border-color:#a0a0a0 #fff #fff #a0a0a0"><div class="abs" style="left:0;top:0;right:0;bottom:0;border:1px solid;border-color:#696969 #e3e3e3 #e3e3e3 #696969"></div><div class="abs" style="left:1px;top:1px;width:345px;height:17px;background:#f0f0f0;border-bottom:1px solid #a0a0a0"></div></div>
<div class="abs" style="left:381px;top:110px;width:2px;height:15px;border-left:1px solid #a0a0a0;border-right:1px solid #fff"></div>
<div class="abs" style="left:431px;top:110px;width:2px;height:15px;border-left:1px solid #a0a0a0;border-right:1px solid #fff"></div>
<div class="abs" style="left:541px;top:110px;width:2px;height:15px;border-left:1px solid #a0a0a0;border-right:1px solid #fff"></div>
<div class="abs" style="left:651px;top:110px;width:2px;height:15px;border-left:1px solid #a0a0a0;border-right:1px solid #fff"></div>
<div class="t" style="left:329px;top:113px;">Hex</div>
<div class="t" style="left:389px;top:113px;">Value</div>
<div class="t" style="left:439px;top:113px;">Ownership</div>
<div class="t" style="left:549px;top:113px;">Side</div>
<div class="t" style="left:330px;top:128px;">10, 16</div>
<div class="t" style="left:392px;top:128px;">1</div>
<div class="t" style="left:442px;top:128px;">German</div>
<div class="t" style="left:552px;top:128px;">Side A</div>
<div class="grp" style="left:321px;top:477px;width:349px;height:204px"><div class="lbl" style="left:6px">Level of Victory</div></div>
<div class="t" style="left:441px;top:492px;">SIDE A:</div>
<div class="t" style="left:558px;top:492px;">SIDE B:</div>
<div class="t" style="left:340px;top:523px;">Major Defeat</div>
<div class="ed" style="left:438px;top:518px;width:41px;height:22px"><span>0</span></div>
<div class="ed" style="left:555px;top:518px;width:41px;height:22px"><span>0</span></div>
<div class="t" style="left:340px;top:552px;">Minor Defeat</div>
<div class="ed" style="left:438px;top:547px;width:41px;height:22px"><span>8</span></div>
<div class="ed" style="left:555px;top:547px;width:41px;height:22px"><span>1</span></div>
<div class="t" style="left:340px;top:581px;">Draw</div>
<div class="ed" style="left:438px;top:576px;width:41px;height:22px"><span>9</span></div>
<div class="ed" style="left:555px;top:576px;width:41px;height:22px"><span>1</span></div>
<div class="t" style="left:340px;top:609px;">Minor Victory</div>
<div class="ed" style="left:438px;top:604px;width:41px;height:22px"><span>10</span></div>
<div class="ed" style="left:555px;top:604px;width:41px;height:22px"><span>1</span></div>
<div class="t" style="left:340px;top:638px;">Major Victory</div>
<div class="ed" style="left:438px;top:633px;width:41px;height:22px"><span>11</span></div>
<div class="ed" style="left:555px;top:633px;width:41px;height:22px"><span>1</span></div>
<div class="t" style="left:489px;top:522px;">or Less</div>
<div class="t" style="left:606px;top:522px;">or Less</div>
<div class="t" style="left:489px;top:638px;">or More</div>
<div class="t" style="left:606px;top:638px;">or More</div>
<div class="grp" style="left:687px;top:114px;width:175px;height:449px"><div class="lbl" style="left:6px">Side A Victory Points</div></div>
<div class="ed" style="left:705px;top:131px;width:41px;height:22px"><span>1</span></div>
<div class="t" style="left:753px;top:137px;">Locations</div>
<div class="grp" style="left:696px;top:168px;width:104px;height:162px"><div class="lbl" style="left:6px">Side B - KIA</div></div>
<div class="grp" style="left:807px;top:168px;width:43px;height:162px"><div class="lbl" style="left:6px">VP</div></div>
<div class="ed" style="left:705px;top:180px;width:41px;height:22px"><span>9</span></div>
<div class="t" style="left:753px;top:186px;">SQUAD</div>
<div class="ed" style="left:816px;top:180px;width:26px;height:22px"><span>1</span></div>
<div class="ed" style="left:705px;top:211px;width:41px;height:22px"><span>7</span></div>
<div class="t" style="left:753px;top:217px;">HS</div>
<div class="ed" style="left:816px;top:211px;width:26px;height:22px"><span>1</span></div>
<div class="ed" style="left:705px;top:242px;width:41px;height:22px"><span>3</span></div>
<div class="t" style="left:753px;top:248px;">LEADER</div>
<div class="ed" style="left:816px;top:242px;width:26px;height:22px"><span>0</span></div>
<div class="ed" style="left:705px;top:271px;width:41px;height:22px"><span>0</span></div>
<div class="t" style="left:753px;top:277px;">CREW</div>
<div class="ed" style="left:816px;top:271px;width:26px;height:22px"><span>0</span></div>
<div class="ed" style="left:705px;top:300px;width:41px;height:22px"><span>0</span></div>
<div class="t" style="left:753px;top:306px;">AFV</div>
<div class="ed" style="left:816px;top:300px;width:26px;height:22px"><span>0</span></div>
<div class="grp" style="left:696px;top:345px;width:104px;height:164px"><div class="lbl" style="left:6px">Side A - Exited</div></div>
<div class="grp" style="left:807px;top:345px;width:43px;height:164px"><div class="lbl" style="left:6px">VP</div></div>
<div class="ed" style="left:703px;top:355px;width:41px;height:22px"><span>0</span></div>
<div class="t" style="left:753px;top:362px;">SQUAD</div>
<div class="ed" style="left:814px;top:355px;width:26px;height:22px"><span>0</span></div>
<div class="ed" style="left:703px;top:386px;width:41px;height:22px"><span>0</span></div>
<div class="t" style="left:753px;top:393px;">HS</div>
<div class="ed" style="left:814px;top:386px;width:26px;height:22px"><span>0</span></div>
<div class="ed" style="left:703px;top:417px;width:41px;height:22px"><span>0</span></div>
<div class="t" style="left:753px;top:424px;">LEADER</div>
<div class="ed" style="left:814px;top:417px;width:26px;height:22px"><span>0</span></div>
<div class="ed" style="left:703px;top:447px;width:41px;height:22px"><span>0</span></div>
<div class="t" style="left:753px;top:454px;">CREW</div>
<div class="ed" style="left:814px;top:447px;width:26px;height:22px"><span>0</span></div>
<div class="ed" style="left:703px;top:477px;width:41px;height:22px"><span>0</span></div>
<div class="t" style="left:753px;top:484px;">AFV</div>
<div class="ed" style="left:814px;top:477px;width:26px;height:22px"><span>0</span></div>
<div class="ed" style="left:703px;top:523px;width:41px;height:22px"><span>17</span></div>
<div class="t" style="left:754px;top:529px;">Total VP</div>
<svg class="abs" style="left:807px;top:521px" width="39" height="26"><defs><linearGradient id="dg" x1="0" x2="1"><stop offset="0" stop-color="#f00"/><stop offset="0.55" stop-color="#c00"/><stop offset="1" stop-color="#500"/></linearGradient></defs><rect width="39" height="26" fill="url(#dg)"/><rect x="0" y="11" width="39" height="4" fill="#bfc8c8"/><rect x="0" y="12" width="39" height="2" fill="#111"/><rect x="15" y="0" width="4" height="26" fill="#bfc8c8"/><rect x="16" y="0" width="2" height="26" fill="#111"/><circle cx="17" cy="13" r="7" fill="#333" stroke="#ccd" stroke-width="1.5"/><path d="M17,7v12M11,13h12" stroke="#fff" stroke-width="3"/><path d="M17,7v12M11,13h12" stroke="#000" stroke-width="1.5"/></svg>
<div class="grp" style="left:868px;top:114px;width:178px;height:449px"><div class="lbl" style="left:6px">Side B Victory Points</div></div>
<div class="ed" style="left:886px;top:131px;width:41px;height:22px"><span>0</span></div>
<div class="t" style="left:934px;top:137px;">Locations</div>
<div class="grp" style="left:877px;top:168px;width:107px;height:162px"><div class="lbl" style="left:6px">Side A - KIA</div></div>
<div class="grp" style="left:993px;top:168px;width:43px;height:162px"><div class="lbl" style="left:6px">VP</div></div>
<div class="ed" style="left:886px;top:180px;width:41px;height:22px"><span>3</span></div>
<div class="t" style="left:936px;top:186px;">SQUAD</div>
<div class="ed" style="left:1000px;top:180px;width:26px;height:22px"><span>0</span></div>
<div class="ed" style="left:886px;top:211px;width:41px;height:22px"><span>2</span></div>
<div class="t" style="left:936px;top:217px;">HS</div>
<div class="ed" style="left:1000px;top:211px;width:26px;height:22px"><span>0</span></div>
<div class="ed" style="left:886px;top:242px;width:41px;height:22px"><span>1</span></div>
<div class="t" style="left:936px;top:248px;">LEADER</div>
<div class="ed" style="left:1000px;top:242px;width:26px;height:22px"><span>0</span></div>
<div class="ed" style="left:886px;top:271px;width:41px;height:22px"><span>0</span></div>
<div class="t" style="left:936px;top:277px;">CREW</div>
<div class="ed" style="left:1000px;top:271px;width:26px;height:22px"><span>0</span></div>
<div class="ed" style="left:886px;top:300px;width:41px;height:22px"><span>2</span></div>
<div class="t" style="left:936px;top:306px;">AFV</div>
<div class="ed" style="left:1000px;top:300px;width:26px;height:22px"><span>0</span></div>
<div class="grp" style="left:877px;top:345px;width:107px;height:161px"><div class="lbl" style="left:6px">Side B - Exited</div></div>
<div class="grp" style="left:994px;top:345px;width:43px;height:161px"><div class="lbl" style="left:6px">VP</div></div>
<div class="ed" style="left:886px;top:355px;width:41px;height:22px"><span>0</span></div>
<div class="t" style="left:934px;top:362px;">SQUAD</div>
<div class="ed" style="left:1003px;top:355px;width:26px;height:22px"><span>0</span></div>
<div class="ed" style="left:886px;top:386px;width:41px;height:22px"><span>0</span></div>
<div class="t" style="left:934px;top:393px;">HS</div>
<div class="ed" style="left:1003px;top:386px;width:26px;height:22px"><span>0</span></div>
<div class="ed" style="left:886px;top:417px;width:41px;height:22px"><span>0</span></div>
<div class="t" style="left:934px;top:424px;">LEADER</div>
<div class="ed" style="left:1003px;top:417px;width:26px;height:22px"><span>0</span></div>
<div class="ed" style="left:886px;top:447px;width:41px;height:22px"><span>0</span></div>
<div class="t" style="left:934px;top:454px;">CREW</div>
<div class="ed" style="left:1003px;top:447px;width:26px;height:22px"><span>0</span></div>
<div class="ed" style="left:886px;top:477px;width:41px;height:22px"><span>0</span></div>
<div class="t" style="left:934px;top:484px;">AFV</div>
<div class="ed" style="left:1003px;top:477px;width:26px;height:22px"><span>0</span></div>
<div class="ed" style="left:886px;top:523px;width:41px;height:22px"><span>0</span></div>
<div class="t" style="left:935px;top:529px;">Total VP</div>
<svg class="abs" style="left:994px;top:521px" width="39" height="26"><defs><linearGradient id="ug" x1="0" x2="1"><stop offset="0" stop-color="#fff" stop-opacity="0"/><stop offset="1" stop-color="#000" stop-opacity=".55"/></linearGradient></defs><rect x="0" y="0" width="39" height="2" fill="#e01010"/><rect x="0" y="2" width="39" height="2" fill="#fff"/><rect x="0" y="4" width="39" height="2" fill="#e01010"/><rect x="0" y="6" width="39" height="2" fill="#fff"/><rect x="0" y="8" width="39" height="2" fill="#e01010"/><rect x="0" y="10" width="39" height="2" fill="#fff"/><rect x="0" y="12" width="39" height="2" fill="#e01010"/><rect x="0" y="14" width="39" height="2" fill="#fff"/><rect x="0" y="16" width="39" height="2" fill="#e01010"/><rect x="0" y="18" width="39" height="2" fill="#fff"/><rect x="0" y="20" width="39" height="2" fill="#e01010"/><rect x="0" y="22" width="39" height="2" fill="#fff"/><rect x="0" y="24" width="39" height="2" fill="#e01010"/><rect x="0" y="0" width="18" height="14" fill="#2838b0"/><rect width="39" height="26" fill="url(#ug)"/></svg>
<div class="grp" style="left:688px;top:587px;width:356px;height:48px"><div class="lbl" style="left:6px">Scenario Outcome</div></div>
<div class="ed" style="left:697px;top:602px;width:337px;height:21px"><span style="top:2px">GERMAN Major Victory</span></div>
<div class="abs" style="left:700px;top:659px;width:345px;height:23px;background:#f0f0f0;border:1px solid;border-color:#fff #696969 #696969 #fff;box-shadow:inset -1px -1px 0 #a0a0a0"></div>
<div class="t" style="left:700px;top:664px;width:345px;text-align:center">OK</div>
</body></html>
